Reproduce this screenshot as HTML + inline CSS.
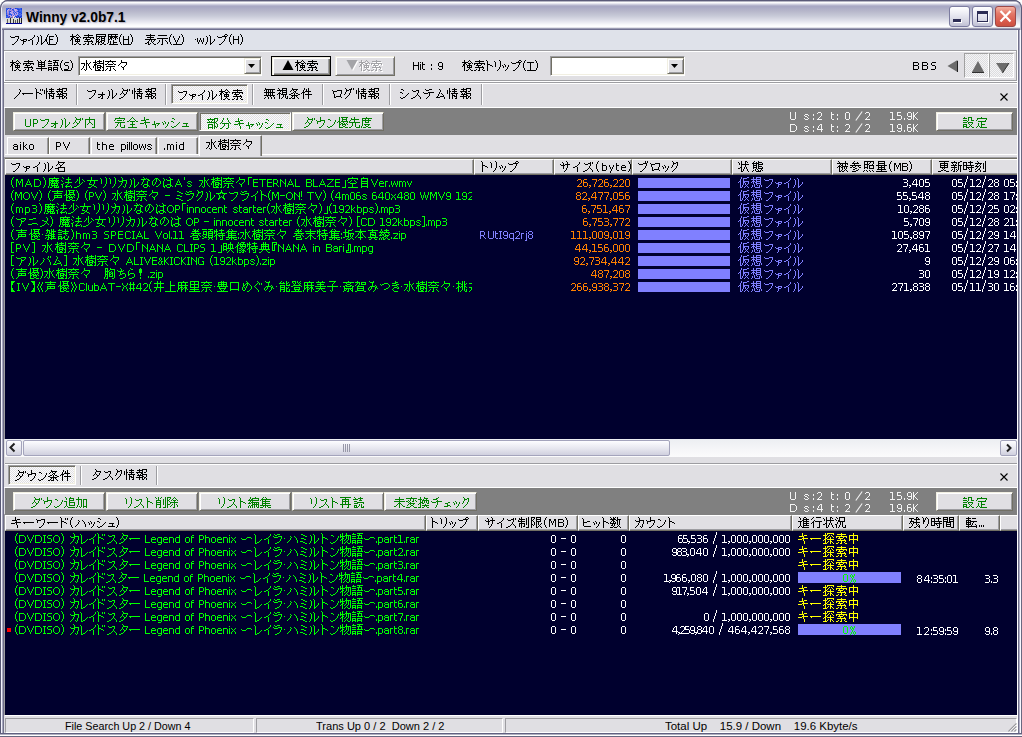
<!DOCTYPE html>
<html><head><meta charset="utf-8"><style>*{margin:0;padding:0;box-sizing:border-box}
html,body{width:1022px;height:737px;overflow:hidden;background:#fff}
body{position:relative;font-family:"Liberation Sans",sans-serif;font-size:12px;color:#000}
.a{position:absolute}
.t{position:absolute;white-space:nowrap;line-height:13px;transform-origin:0 0}
.j{font-size:13px}
u{text-decoration:underline;text-underline-offset:1px}

#t1{transform:scaleX(0.9848)}
#t2{transform:scaleX(0.9775)}
#t3{transform:scaleX(1.0040)}
#t4{transform:scaleX(1.0425)}
</style></head><body>
<svg width="0" height="0" style="position:absolute"><defs><path id="g30d5" d="M1 -8h1v1h-1zM6 -8h4v1h-4zM2 -7h4v1h-4zM9 -7h1v1h-1zM9 -6h1v1h-1zM8 -5h1v1h-1zM8 -4h1v1h-1zM7 -3h1v1h-1zM6 -2h1v1h-1zM5 -1h1v1h-1zM3 0h2v1h-2z"/><path id="g30a1" d="M1 -5h1v1h-1zM4 -5h4v1h-4zM2 -4h3v1h-3zM7 -4h1v1h-1zM4 -3h3v1h-3zM4 -2h1v1h-1zM4 -1h1v1h-1zM3 0h1v1h-1z"/><path id="g30a4" d="M8 -9h1v1h-1zM8 -8h1v1h-1zM7 -7h1v1h-1zM6 -6h1v1h-1zM4 -5h2v1h-2zM2 -4h2v1h-2zM6 -4h1v1h-1zM6 -3h1v1h-1zM6 -2h1v1h-1zM6 -1h1v1h-1zM6 0h1v1h-1z"/><path id="g30eb" d="M5 -9h1v1h-1zM2 -8h1v1h-1zM6 -8h1v1h-1zM3 -7h1v1h-1zM6 -7h1v1h-1zM3 -6h1v1h-1zM6 -6h1v1h-1zM3 -5h1v1h-1zM6 -5h1v1h-1zM10 -5h1v1h-1zM3 -4h1v1h-1zM6 -4h1v1h-1zM10 -4h1v1h-1zM3 -3h1v1h-1zM6 -3h1v1h-1zM9 -3h1v1h-1zM2 -2h1v1h-1zM6 -2h1v1h-1zM8 -2h1v1h-1zM2 -1h1v1h-1zM6 -1h2v1h-2zM1 0h1v1h-1zM6 0h1v1h-1z"/><path id="g28" d="M3 -10h1v1h-1zM2 -9h1v1h-1zM2 -8h1v1h-1zM1 -7h1v1h-1zM1 -6h1v1h-1zM1 -5h1v1h-1zM1 -4h1v1h-1zM1 -3h1v1h-1zM2 -2h1v1h-1zM2 -1h1v1h-1zM3 0h1v1h-1z"/><path id="g46" d="M0 -8h5v1h-5zM0 -7h1v1h-1zM0 -6h1v1h-1zM0 -5h4v1h-4zM0 -4h1v1h-1zM0 -3h1v1h-1zM0 -2h1v1h-1zM0 -1h1v1h-1z"/><path id="g29" d="M1 -10h1v1h-1zM2 -9h1v1h-1zM2 -8h1v1h-1zM3 -7h1v1h-1zM3 -6h1v1h-1zM3 -5h1v1h-1zM3 -4h1v1h-1zM3 -3h1v1h-1zM2 -2h1v1h-1zM2 -1h1v1h-1zM1 0h1v1h-1z"/><path id="g691c" d="M2 -10h1v1h-1zM7 -10h1v1h-1zM2 -9h1v1h-1zM6 -9h1v1h-1zM8 -9h1v1h-1zM0 -8h6v1h-6zM9 -8h1v1h-1zM2 -7h2v1h-2zM6 -7h3v1h-3zM10 -7h1v1h-1zM1 -6h2v1h-2zM4 -6h1v1h-1zM7 -6h1v1h-1zM1 -5h2v1h-2zM5 -5h5v1h-5zM0 -4h1v1h-1zM2 -4h1v1h-1zM5 -4h1v1h-1zM7 -4h1v1h-1zM9 -4h1v1h-1zM2 -3h1v1h-1zM5 -3h5v1h-5zM2 -2h1v1h-1zM7 -2h1v1h-1zM2 -1h1v1h-1zM6 -1h1v1h-1zM8 -1h1v1h-1zM2 0h1v1h-1zM4 0h2v1h-2zM9 0h2v1h-2z"/><path id="g7d22" d="M5 -10h1v1h-1zM1 -9h9v1h-9zM5 -8h1v1h-1zM0 -7h11v1h-11zM0 -6h1v1h-1zM3 -6h1v1h-1zM7 -6h1v1h-1zM10 -6h1v1h-1zM2 -5h5v1h-5zM4 -4h1v1h-1zM8 -4h1v1h-1zM1 -3h9v1h-9zM5 -2h1v1h-1zM9 -2h1v1h-1zM2 -1h1v1h-1zM5 -1h1v1h-1zM8 -1h1v1h-1zM0 0h2v1h-2zM4 0h2v1h-2zM9 0h2v1h-2z"/><path id="g5c65" d="M1 -10h10v1h-10zM1 -9h1v1h-1zM10 -9h1v1h-1zM1 -8h10v1h-10zM1 -7h1v1h-1zM4 -7h1v1h-1zM6 -7h1v1h-1zM9 -7h1v1h-1zM1 -6h1v1h-1zM3 -6h1v1h-1zM6 -6h4v1h-4zM1 -5h2v1h-2zM4 -5h1v1h-1zM6 -5h1v1h-1zM9 -5h1v1h-1zM1 -4h1v1h-1zM3 -4h1v1h-1zM6 -4h4v1h-4zM1 -3h3v1h-3zM5 -3h2v1h-2zM9 -3h1v1h-1zM1 -2h1v1h-1zM3 -2h2v1h-2zM6 -2h1v1h-1zM8 -2h1v1h-1zM0 -1h1v1h-1zM3 -1h1v1h-1zM7 -1h2v1h-2zM0 0h1v1h-1zM3 0h1v1h-1zM5 0h2v1h-2zM9 0h2v1h-2z"/><path id="g6b74" d="M1 -10h10v1h-10zM1 -9h1v1h-1zM4 -9h1v1h-1zM8 -9h1v1h-1zM1 -8h10v1h-10zM1 -7h1v1h-1zM3 -7h3v1h-3zM7 -7h3v1h-3zM1 -6h1v1h-1zM3 -6h2v1h-2zM6 -6h1v1h-1zM8 -6h1v1h-1zM10 -6h1v1h-1zM1 -5h2v1h-2zM4 -5h1v1h-1zM8 -5h1v1h-1zM1 -4h1v1h-1zM6 -4h1v1h-1zM1 -3h1v1h-1zM3 -3h1v1h-1zM6 -3h1v1h-1zM1 -2h1v1h-1zM3 -2h1v1h-1zM6 -2h4v1h-4zM0 -1h1v1h-1zM3 -1h1v1h-1zM6 -1h1v1h-1zM2 0h9v1h-9z"/><path id="g48" d="M0 -8h1v1h-1zM5 -8h1v1h-1zM0 -7h1v1h-1zM5 -7h1v1h-1zM0 -6h1v1h-1zM5 -6h1v1h-1zM0 -5h6v1h-6zM0 -4h1v1h-1zM5 -4h1v1h-1zM0 -3h1v1h-1zM5 -3h1v1h-1zM0 -2h1v1h-1zM5 -2h1v1h-1zM0 -1h1v1h-1zM5 -1h1v1h-1z"/><path id="g8868" d="M5 -10h1v1h-1zM1 -9h9v1h-9zM5 -8h1v1h-1zM2 -7h7v1h-7zM5 -6h1v1h-1zM0 -5h11v1h-11zM4 -4h1v1h-1zM6 -4h1v1h-1zM9 -4h1v1h-1zM3 -3h1v1h-1zM6 -3h1v1h-1zM8 -3h1v1h-1zM2 -2h2v1h-2zM7 -2h1v1h-1zM0 -1h2v1h-2zM3 -1h1v1h-1zM5 -1h1v1h-1zM8 -1h1v1h-1zM3 0h2v1h-2zM9 0h2v1h-2z"/><path id="g793a" d="M1 -9h9v1h-9zM0 -6h11v1h-11zM5 -5h1v1h-1zM2 -4h1v1h-1zM5 -4h1v1h-1zM8 -4h1v1h-1zM2 -3h1v1h-1zM5 -3h1v1h-1zM9 -3h1v1h-1zM1 -2h1v1h-1zM5 -2h1v1h-1zM10 -2h1v1h-1zM0 -1h1v1h-1zM5 -1h1v1h-1zM10 -1h1v1h-1zM4 0h2v1h-2z"/><path id="g56" d="M0 -8h1v1h-1zM6 -8h1v1h-1zM0 -7h1v1h-1zM6 -7h1v1h-1zM1 -6h1v1h-1zM5 -6h1v1h-1zM1 -5h1v1h-1zM5 -5h1v1h-1zM2 -4h1v1h-1zM4 -4h1v1h-1zM2 -3h1v1h-1zM4 -3h1v1h-1zM3 -2h1v1h-1zM3 -1h1v1h-1z"/><path id="g30fb" d="M0 -5h1v1h-1z"/><path id="g77" d="M0 -6h1v1h-1zM3 -6h1v1h-1zM6 -6h1v1h-1zM0 -5h1v1h-1zM3 -5h1v1h-1zM6 -5h1v1h-1zM0 -4h1v1h-1zM2 -4h1v1h-1zM4 -4h1v1h-1zM6 -4h1v1h-1zM0 -3h1v1h-1zM2 -3h1v1h-1zM4 -3h1v1h-1zM6 -3h1v1h-1zM1 -2h1v1h-1zM5 -2h1v1h-1zM1 -1h1v1h-1zM5 -1h1v1h-1z"/><path id="g30d7" d="M8 -10h2v1h-2zM7 -9h1v1h-1zM10 -9h1v1h-1zM0 -8h1v1h-1zM5 -8h5v1h-5zM1 -7h4v1h-4zM8 -7h1v1h-1zM8 -6h1v1h-1zM7 -5h1v1h-1zM7 -4h1v1h-1zM6 -3h1v1h-1zM5 -2h1v1h-1zM4 -1h1v1h-1zM2 0h2v1h-2z"/><path id="g5358" d="M1 -10h1v1h-1zM4 -10h1v1h-1zM9 -10h1v1h-1zM2 -9h1v1h-1zM5 -9h1v1h-1zM8 -9h1v1h-1zM2 -8h7v1h-7zM2 -7h1v1h-1zM5 -7h1v1h-1zM8 -7h1v1h-1zM2 -6h7v1h-7zM2 -5h1v1h-1zM5 -5h1v1h-1zM8 -5h1v1h-1zM2 -4h7v1h-7zM5 -3h1v1h-1zM0 -2h11v1h-11zM5 -1h1v1h-1zM5 0h1v1h-1z"/><path id="g8a9e" d="M1 -10h1v1h-1zM5 -10h6v1h-6zM0 -9h4v1h-4zM7 -9h1v1h-1zM5 -8h5v1h-5zM0 -7h4v1h-4zM6 -7h1v1h-1zM9 -7h1v1h-1zM6 -6h1v1h-1zM9 -6h1v1h-1zM0 -5h4v1h-4zM5 -5h6v1h-6zM0 -3h4v1h-4zM5 -3h5v1h-5zM0 -2h1v1h-1zM3 -2h1v1h-1zM5 -2h1v1h-1zM9 -2h1v1h-1zM0 -1h4v1h-4zM5 -1h5v1h-5zM0 0h1v1h-1zM3 0h1v1h-1zM5 0h1v1h-1zM9 0h1v1h-1z"/><path id="g53" d="M1 -8h4v1h-4zM0 -7h1v1h-1zM0 -6h1v1h-1zM1 -5h3v1h-3zM4 -4h1v1h-1zM4 -3h1v1h-1zM4 -2h1v1h-1zM0 -1h4v1h-4z"/><path id="g6c34" d="M5 -10h1v1h-1zM5 -9h1v1h-1zM5 -8h1v1h-1zM9 -8h1v1h-1zM0 -7h4v1h-4zM5 -7h2v1h-2zM8 -7h1v1h-1zM3 -6h1v1h-1zM5 -6h1v1h-1zM7 -6h1v1h-1zM3 -5h1v1h-1zM5 -5h1v1h-1zM7 -5h1v1h-1zM2 -4h1v1h-1zM5 -4h1v1h-1zM8 -4h1v1h-1zM2 -3h1v1h-1zM5 -3h1v1h-1zM8 -3h1v1h-1zM1 -2h1v1h-1zM5 -2h1v1h-1zM9 -2h1v1h-1zM0 -1h1v1h-1zM3 -1h1v1h-1zM5 -1h1v1h-1zM10 -1h1v1h-1zM4 0h1v1h-1z"/><path id="g6a39" d="M2 -10h1v1h-1zM6 -10h1v1h-1zM10 -10h1v1h-1zM2 -9h1v1h-1zM4 -9h5v1h-5zM10 -9h1v1h-1zM0 -8h4v1h-4zM6 -8h1v1h-1zM10 -8h1v1h-1zM2 -7h1v1h-1zM4 -7h7v1h-7zM1 -6h3v1h-3zM10 -6h1v1h-1zM1 -5h2v1h-2zM4 -5h4v1h-4zM10 -5h1v1h-1zM0 -4h1v1h-1zM2 -4h1v1h-1zM4 -4h1v1h-1zM7 -4h2v1h-2zM10 -4h1v1h-1zM0 -3h1v1h-1zM2 -3h1v1h-1zM4 -3h4v1h-4zM9 -3h2v1h-2zM2 -2h1v1h-1zM4 -2h1v1h-1zM7 -2h1v1h-1zM10 -2h1v1h-1zM2 -1h1v1h-1zM5 -1h2v1h-2zM10 -1h1v1h-1zM2 0h6v1h-6zM9 0h2v1h-2z"/><path id="g5948" d="M5 -10h1v1h-1zM0 -9h11v1h-11zM3 -8h1v1h-1zM7 -8h1v1h-1zM2 -7h1v1h-1zM8 -7h1v1h-1zM0 -6h2v1h-2zM3 -6h5v1h-5zM9 -6h2v1h-2zM1 -4h9v1h-9zM5 -3h1v1h-1zM2 -2h1v1h-1zM5 -2h1v1h-1zM8 -2h1v1h-1zM1 -1h1v1h-1zM5 -1h1v1h-1zM9 -1h1v1h-1zM0 0h1v1h-1zM4 0h2v1h-2zM10 0h1v1h-1z"/><path id="g3005" d="M4 -10h1v1h-1zM4 -9h1v1h-1zM4 -8h6v1h-6zM3 -7h1v1h-1zM9 -7h1v1h-1zM2 -6h1v1h-1zM9 -6h1v1h-1zM1 -5h1v1h-1zM8 -5h1v1h-1zM4 -4h1v1h-1zM7 -4h1v1h-1zM5 -3h2v1h-2zM6 -2h1v1h-1zM6 -1h1v1h-1z"/><path id="g69" d="M0 -8h1v1h-1zM0 -6h1v1h-1zM0 -5h1v1h-1zM0 -4h1v1h-1zM0 -3h1v1h-1zM0 -2h1v1h-1zM0 -1h1v1h-1z"/><path id="g74" d="M0 -8h1v1h-1zM0 -7h1v1h-1zM0 -6h3v1h-3zM0 -5h1v1h-1zM0 -4h1v1h-1zM0 -3h1v1h-1zM0 -2h1v1h-1zM1 -1h2v1h-2z"/><path id="g3a" d="M0 -6h1v1h-1zM0 -5h1v1h-1zM0 -2h1v1h-1zM0 -1h1v1h-1z"/><path id="g39" d="M1 -8h3v1h-3zM0 -7h1v1h-1zM4 -7h1v1h-1zM0 -6h1v1h-1zM4 -6h1v1h-1zM0 -5h1v1h-1zM4 -5h1v1h-1zM1 -4h4v1h-4zM4 -3h1v1h-1zM0 -2h1v1h-1zM4 -2h1v1h-1zM1 -1h3v1h-3z"/><path id="g30c8" d="M2 -10h1v1h-1zM3 -9h1v1h-1zM3 -8h1v1h-1zM3 -7h1v1h-1zM3 -6h3v1h-3zM3 -5h1v1h-1zM6 -5h2v1h-2zM3 -4h1v1h-1zM8 -4h1v1h-1zM3 -3h1v1h-1zM3 -2h1v1h-1zM3 -1h1v1h-1zM3 0h1v1h-1z"/><path id="g30ea" d="M7 -10h1v1h-1zM2 -9h1v1h-1zM8 -9h1v1h-1zM3 -8h1v1h-1zM8 -8h1v1h-1zM3 -7h1v1h-1zM8 -7h1v1h-1zM3 -6h1v1h-1zM8 -6h1v1h-1zM3 -5h1v1h-1zM8 -5h1v1h-1zM3 -4h1v1h-1zM8 -4h1v1h-1zM7 -3h1v1h-1zM7 -2h1v1h-1zM6 -1h1v1h-1zM5 0h1v1h-1z"/><path id="g30c3" d="M4 -6h1v1h-1zM2 -5h1v1h-1zM5 -5h1v1h-1zM8 -5h1v1h-1zM3 -4h1v1h-1zM5 -4h1v1h-1zM8 -4h1v1h-1zM3 -3h1v1h-1zM7 -3h1v1h-1zM7 -2h1v1h-1zM6 -1h1v1h-1zM5 0h1v1h-1z"/><path id="g54" d="M0 -8h7v1h-7zM3 -7h1v1h-1zM3 -6h1v1h-1zM3 -5h1v1h-1zM3 -4h1v1h-1zM3 -3h1v1h-1zM3 -2h1v1h-1zM3 -1h1v1h-1z"/><path id="g42" d="M0 -8h5v1h-5zM0 -7h1v1h-1zM5 -7h1v1h-1zM0 -6h1v1h-1zM5 -6h1v1h-1zM0 -5h5v1h-5zM0 -4h1v1h-1zM5 -4h1v1h-1zM0 -3h1v1h-1zM5 -3h1v1h-1zM0 -2h1v1h-1zM5 -2h1v1h-1zM0 -1h5v1h-5z"/><path id="g30ce" d="M8 -9h1v1h-1zM9 -8h1v1h-1zM9 -7h1v1h-1zM8 -6h1v1h-1zM8 -5h1v1h-1zM7 -4h1v1h-1zM6 -3h1v1h-1zM5 -2h1v1h-1zM4 -1h1v1h-1zM3 0h1v1h-1z"/><path id="g30fc" d="M0 -5h11v1h-11zM1 -4h1v1h-1z"/><path id="g30c9" d="M2 -10h1v1h-1zM3 -9h1v1h-1zM7 -9h1v1h-1zM9 -9h1v1h-1zM3 -8h1v1h-1zM7 -8h1v1h-1zM9 -8h1v1h-1zM3 -7h1v1h-1zM3 -6h3v1h-3zM3 -5h1v1h-1zM6 -5h2v1h-2zM3 -4h1v1h-1zM8 -4h1v1h-1zM3 -3h1v1h-1zM3 -2h1v1h-1zM3 -1h1v1h-1zM3 0h1v1h-1z"/><path id="g60c5" d="M2 -10h1v1h-1zM7 -10h1v1h-1zM2 -9h1v1h-1zM5 -9h5v1h-5zM0 -8h1v1h-1zM2 -8h1v1h-1zM7 -8h1v1h-1zM0 -7h1v1h-1zM2 -7h2v1h-2zM5 -7h5v1h-5zM0 -6h1v1h-1zM2 -6h1v1h-1zM7 -6h1v1h-1zM0 -5h1v1h-1zM2 -5h1v1h-1zM4 -5h7v1h-7zM2 -4h1v1h-1zM5 -4h1v1h-1zM9 -4h1v1h-1zM2 -3h1v1h-1zM5 -3h3v1h-3zM9 -3h1v1h-1zM2 -2h1v1h-1zM5 -2h1v1h-1zM7 -2h3v1h-3zM2 -1h1v1h-1zM5 -1h1v1h-1zM9 -1h1v1h-1zM2 0h1v1h-1zM5 0h1v1h-1zM8 0h2v1h-2z"/><path id="g5831" d="M3 -10h1v1h-1zM6 -10h5v1h-5zM1 -9h6v1h-6zM10 -9h1v1h-1zM3 -8h1v1h-1zM6 -8h1v1h-1zM10 -8h1v1h-1zM0 -7h7v1h-7zM8 -7h2v1h-2zM1 -6h1v1h-1zM5 -6h2v1h-2zM2 -5h1v1h-1zM4 -5h1v1h-1zM6 -5h5v1h-5zM1 -4h6v1h-6zM10 -4h1v1h-1zM3 -3h1v1h-1zM6 -3h2v1h-2zM10 -3h1v1h-1zM0 -2h7v1h-7zM8 -2h2v1h-2zM3 -1h1v1h-1zM6 -1h1v1h-1zM8 -1h1v1h-1zM10 -1h1v1h-1zM3 0h1v1h-1zM6 0h2v1h-2zM10 0h1v1h-1z"/><path id="g30a9" d="M6 -6h1v1h-1zM6 -5h1v1h-1zM2 -4h7v1h-7zM5 -3h2v1h-2zM4 -2h1v1h-1zM6 -2h1v1h-1zM2 -1h2v1h-2zM6 -1h1v1h-1zM5 0h2v1h-2z"/><path id="g30c0" d="M4 -10h1v1h-1zM5 -9h1v1h-1zM9 -9h1v1h-1zM11 -9h1v1h-1zM5 -8h5v1h-5zM11 -8h1v1h-1zM4 -7h1v1h-1zM9 -7h1v1h-1zM4 -6h1v1h-1zM8 -6h1v1h-1zM3 -5h1v1h-1zM5 -5h1v1h-1zM8 -5h1v1h-1zM2 -4h1v1h-1zM6 -4h2v1h-2zM6 -3h1v1h-1zM5 -2h1v1h-1zM3 -1h2v1h-2zM1 0h2v1h-2z"/><path id="g7121" d="M1 -10h1v1h-1zM1 -9h10v1h-10zM0 -8h1v1h-1zM2 -8h1v1h-1zM4 -8h1v1h-1zM6 -8h1v1h-1zM8 -8h1v1h-1zM2 -7h1v1h-1zM4 -7h1v1h-1zM6 -7h1v1h-1zM8 -7h1v1h-1zM0 -6h11v1h-11zM2 -5h1v1h-1zM4 -5h1v1h-1zM6 -5h1v1h-1zM8 -5h1v1h-1zM2 -4h1v1h-1zM4 -4h1v1h-1zM6 -4h1v1h-1zM8 -4h1v1h-1zM0 -3h11v1h-11zM3 -2h1v1h-1zM6 -2h1v1h-1zM9 -2h1v1h-1zM1 -1h1v1h-1zM4 -1h1v1h-1zM7 -1h1v1h-1zM10 -1h1v1h-1zM0 0h1v1h-1zM4 0h1v1h-1zM7 0h1v1h-1zM10 0h1v1h-1z"/><path id="g8996" d="M1 -10h1v1h-1zM5 -10h5v1h-5zM2 -9h1v1h-1zM5 -9h1v1h-1zM9 -9h1v1h-1zM0 -8h10v1h-10zM3 -7h1v1h-1zM5 -7h1v1h-1zM9 -7h1v1h-1zM2 -6h1v1h-1zM5 -6h5v1h-5zM1 -5h3v1h-3zM5 -5h1v1h-1zM9 -5h1v1h-1zM0 -4h1v1h-1zM2 -4h1v1h-1zM4 -4h6v1h-6zM2 -3h1v1h-1zM6 -3h1v1h-1zM8 -3h1v1h-1zM2 -2h1v1h-1zM6 -2h1v1h-1zM8 -2h1v1h-1zM10 -2h1v1h-1zM2 -1h1v1h-1zM5 -1h1v1h-1zM8 -1h1v1h-1zM10 -1h1v1h-1zM2 0h1v1h-1zM4 0h1v1h-1zM9 0h2v1h-2z"/><path id="g6761" d="M3 -10h1v1h-1zM3 -9h6v1h-6zM2 -8h1v1h-1zM4 -8h1v1h-1zM7 -8h1v1h-1zM1 -7h1v1h-1zM5 -7h2v1h-2zM4 -6h1v1h-1zM6 -6h1v1h-1zM2 -5h2v1h-2zM5 -5h1v1h-1zM7 -5h2v1h-2zM0 -4h2v1h-2zM5 -4h1v1h-1zM9 -4h2v1h-2zM2 -3h7v1h-7zM3 -2h1v1h-1zM5 -2h1v1h-1zM7 -2h1v1h-1zM2 -1h1v1h-1zM5 -1h1v1h-1zM8 -1h1v1h-1zM0 0h2v1h-2zM3 0h3v1h-3zM9 0h1v1h-1z"/><path id="g4ef6" d="M3 -10h1v1h-1zM7 -10h1v1h-1zM3 -9h1v1h-1zM5 -9h1v1h-1zM7 -9h1v1h-1zM2 -8h1v1h-1zM5 -8h1v1h-1zM7 -8h1v1h-1zM2 -7h1v1h-1zM4 -7h6v1h-6zM1 -6h3v1h-3zM7 -6h1v1h-1zM0 -5h1v1h-1zM2 -5h1v1h-1zM7 -5h1v1h-1zM2 -4h1v1h-1zM4 -4h7v1h-7zM2 -3h1v1h-1zM7 -3h1v1h-1zM2 -2h1v1h-1zM7 -2h1v1h-1zM2 -1h1v1h-1zM7 -1h1v1h-1zM2 0h1v1h-1zM7 0h1v1h-1z"/><path id="g30ed" d="M0 -8h1v1h-1zM5 -8h5v1h-5zM1 -7h4v1h-4zM9 -7h1v1h-1zM1 -6h1v1h-1zM9 -6h1v1h-1zM1 -5h1v1h-1zM9 -5h1v1h-1zM2 -4h1v1h-1zM8 -4h1v1h-1zM2 -3h1v1h-1zM8 -3h1v1h-1zM2 -2h1v1h-1zM4 -2h5v1h-5zM2 -1h2v1h-2zM9 -1h1v1h-1z"/><path id="g30b0" d="M2 -10h1v1h-1zM8 -10h1v1h-1zM10 -10h1v1h-1zM3 -9h1v1h-1zM6 -9h3v1h-3zM10 -9h1v1h-1zM3 -8h3v1h-3zM7 -8h1v1h-1zM3 -7h1v1h-1zM7 -7h1v1h-1zM2 -6h1v1h-1zM7 -6h1v1h-1zM2 -5h1v1h-1zM6 -5h1v1h-1zM1 -4h1v1h-1zM6 -4h1v1h-1zM5 -3h1v1h-1zM4 -2h1v1h-1zM3 -1h1v1h-1zM2 0h1v1h-1z"/><path id="g30b7" d="M3 -9h2v1h-2zM5 -8h1v1h-1zM2 -6h2v1h-2zM4 -5h1v1h-1zM10 -5h1v1h-1zM9 -4h1v1h-1zM8 -3h1v1h-1zM7 -2h1v1h-1zM2 -1h1v1h-1zM5 -1h2v1h-2zM3 0h2v1h-2z"/><path id="g30b9" d="M2 -8h1v1h-1zM6 -8h3v1h-3zM3 -7h3v1h-3zM8 -7h1v1h-1zM8 -6h1v1h-1zM7 -5h1v1h-1zM7 -4h1v1h-1zM6 -3h1v1h-1zM8 -3h1v1h-1zM5 -2h1v1h-1zM9 -2h1v1h-1zM3 -1h2v1h-2zM10 -1h1v1h-1zM1 0h2v1h-2zM10 0h1v1h-1z"/><path id="g30c6" d="M2 -9h1v1h-1zM6 -9h3v1h-3zM3 -8h3v1h-3zM0 -6h1v1h-1zM5 -6h6v1h-6zM1 -5h4v1h-4zM6 -5h1v1h-1zM6 -4h1v1h-1zM6 -3h1v1h-1zM5 -2h1v1h-1zM4 -1h1v1h-1zM3 0h1v1h-1z"/><path id="g30e0" d="M4 -9h1v1h-1zM5 -8h1v1h-1zM5 -7h1v1h-1zM4 -6h1v1h-1zM4 -5h1v1h-1zM6 -5h1v1h-1zM3 -4h1v1h-1zM7 -4h1v1h-1zM3 -3h1v1h-1zM8 -3h1v1h-1zM2 -2h1v1h-1zM5 -2h4v1h-4zM1 -1h4v1h-4zM9 -1h1v1h-1zM9 0h1v1h-1z"/><path id="g55" d="M0 -8h1v1h-1zM5 -8h1v1h-1zM0 -7h1v1h-1zM5 -7h1v1h-1zM0 -6h1v1h-1zM5 -6h1v1h-1zM0 -5h1v1h-1zM5 -5h1v1h-1zM0 -4h1v1h-1zM5 -4h1v1h-1zM0 -3h1v1h-1zM5 -3h1v1h-1zM0 -2h1v1h-1zM5 -2h1v1h-1zM1 -1h4v1h-4z"/><path id="g50" d="M0 -8h4v1h-4zM0 -7h1v1h-1zM4 -7h1v1h-1zM0 -6h1v1h-1zM4 -6h1v1h-1zM0 -5h1v1h-1zM4 -5h1v1h-1zM0 -4h4v1h-4zM0 -3h1v1h-1zM0 -2h1v1h-1zM0 -1h1v1h-1z"/><path id="g5185" d="M5 -10h1v1h-1zM5 -9h1v1h-1zM1 -8h10v1h-10zM1 -7h1v1h-1zM5 -7h1v1h-1zM10 -7h1v1h-1zM1 -6h1v1h-1zM5 -6h1v1h-1zM10 -6h1v1h-1zM1 -5h1v1h-1zM5 -5h2v1h-2zM10 -5h1v1h-1zM1 -4h1v1h-1zM4 -4h1v1h-1zM7 -4h1v1h-1zM10 -4h1v1h-1zM1 -3h1v1h-1zM3 -3h1v1h-1zM8 -3h1v1h-1zM10 -3h1v1h-1zM1 -2h1v1h-1zM10 -2h1v1h-1zM1 -1h1v1h-1zM10 -1h1v1h-1zM1 0h1v1h-1zM8 0h3v1h-3z"/><path id="g5b8c" d="M5 -10h1v1h-1zM1 -9h10v1h-10zM1 -8h1v1h-1zM10 -8h1v1h-1zM0 -7h1v1h-1zM3 -7h5v1h-5zM9 -7h1v1h-1zM1 -5h10v1h-10zM4 -4h1v1h-1zM6 -4h1v1h-1zM3 -3h1v1h-1zM6 -3h1v1h-1zM3 -2h1v1h-1zM6 -2h1v1h-1zM10 -2h1v1h-1zM2 -1h1v1h-1zM6 -1h1v1h-1zM10 -1h1v1h-1zM1 0h1v1h-1zM7 0h4v1h-4z"/><path id="g5168" d="M5 -10h1v1h-1zM4 -9h1v1h-1zM6 -9h1v1h-1zM3 -8h1v1h-1zM7 -8h1v1h-1zM2 -7h1v1h-1zM8 -7h1v1h-1zM0 -6h2v1h-2zM3 -6h5v1h-5zM9 -6h2v1h-2zM5 -5h1v1h-1zM5 -4h1v1h-1zM3 -3h5v1h-5zM5 -2h1v1h-1zM5 -1h1v1h-1zM1 0h9v1h-9z"/><path id="g30ad" d="M4 -10h1v1h-1zM4 -9h1v1h-1zM4 -8h1v1h-1zM6 -8h3v1h-3zM1 -7h5v1h-5zM5 -6h1v1h-1zM4 -5h6v1h-6zM0 -4h4v1h-4zM5 -4h1v1h-1zM5 -3h1v1h-1zM6 -2h1v1h-1zM6 -1h1v1h-1zM6 0h1v1h-1z"/><path id="g30e3" d="M4 -6h1v1h-1zM4 -5h1v1h-1zM4 -4h1v1h-1zM6 -4h4v1h-4zM2 -3h4v1h-4zM8 -3h1v1h-1zM5 -2h1v1h-1zM7 -2h1v1h-1zM5 -1h1v1h-1zM5 0h1v1h-1z"/><path id="g30e5" d="M3 -4h5v1h-5zM6 -3h1v1h-1zM6 -2h1v1h-1zM2 -1h7v1h-7z"/><path id="g90e8" d="M3 -10h1v1h-1zM7 -10h4v1h-4zM0 -9h8v1h-8zM10 -9h1v1h-1zM1 -8h1v1h-1zM5 -8h1v1h-1zM7 -8h1v1h-1zM10 -8h1v1h-1zM2 -7h1v1h-1zM4 -7h1v1h-1zM7 -7h1v1h-1zM9 -7h1v1h-1zM0 -6h9v1h-9zM7 -5h1v1h-1zM9 -5h1v1h-1zM1 -4h5v1h-5zM7 -4h1v1h-1zM10 -4h1v1h-1zM1 -3h1v1h-1zM5 -3h1v1h-1zM7 -3h1v1h-1zM10 -3h1v1h-1zM1 -2h1v1h-1zM5 -2h1v1h-1zM7 -2h2v1h-2zM10 -2h1v1h-1zM1 -1h5v1h-5zM7 -1h1v1h-1zM9 -1h1v1h-1zM1 0h1v1h-1zM5 0h1v1h-1zM7 0h1v1h-1z"/><path id="g5206" d="M3 -10h1v1h-1zM7 -10h1v1h-1zM3 -9h1v1h-1zM7 -9h1v1h-1zM2 -8h1v1h-1zM8 -8h1v1h-1zM2 -7h1v1h-1zM8 -7h1v1h-1zM1 -6h1v1h-1zM9 -6h1v1h-1zM0 -5h1v1h-1zM2 -5h7v1h-7zM10 -5h1v1h-1zM4 -4h1v1h-1zM8 -4h1v1h-1zM4 -3h1v1h-1zM8 -3h1v1h-1zM3 -2h1v1h-1zM8 -2h1v1h-1zM2 -1h1v1h-1zM8 -1h1v1h-1zM0 0h2v1h-2zM6 0h2v1h-2z"/><path id="g30a6" d="M5 -10h1v1h-1zM5 -9h1v1h-1zM5 -8h1v1h-1zM1 -7h1v1h-1zM5 -7h5v1h-5zM2 -6h4v1h-4zM9 -6h1v1h-1zM2 -5h1v1h-1zM9 -5h1v1h-1zM2 -4h1v1h-1zM8 -4h1v1h-1zM8 -3h1v1h-1zM7 -2h1v1h-1zM6 -1h1v1h-1zM4 0h2v1h-2z"/><path id="g30f3" d="M2 -8h2v1h-2zM4 -7h1v1h-1zM9 -7h1v1h-1zM9 -6h1v1h-1zM8 -5h1v1h-1zM8 -4h1v1h-1zM7 -3h1v1h-1zM6 -2h1v1h-1zM1 -1h1v1h-1zM4 -1h2v1h-2zM2 0h2v1h-2z"/><path id="g512a" d="M2 -10h1v1h-1zM4 -10h7v1h-7zM2 -9h1v1h-1zM5 -9h1v1h-1zM9 -9h1v1h-1zM2 -8h1v1h-1zM5 -8h5v1h-5zM2 -7h1v1h-1zM5 -7h1v1h-1zM9 -7h1v1h-1zM1 -6h2v1h-2zM4 -6h7v1h-7zM0 -5h1v1h-1zM2 -5h2v1h-2zM6 -5h1v1h-1zM10 -5h1v1h-1zM2 -4h1v1h-1zM4 -4h2v1h-2zM7 -4h1v1h-1zM9 -4h1v1h-1zM2 -3h2v1h-2zM5 -3h4v1h-4zM10 -3h1v1h-1zM2 -2h1v1h-1zM5 -2h1v1h-1zM8 -2h1v1h-1zM2 -1h1v1h-1zM6 -1h2v1h-2zM2 0h4v1h-4zM8 0h3v1h-3z"/><path id="g5148" d="M5 -10h1v1h-1zM2 -9h1v1h-1zM5 -9h1v1h-1zM2 -8h8v1h-8zM1 -7h1v1h-1zM5 -7h1v1h-1zM0 -6h1v1h-1zM5 -6h1v1h-1zM0 -5h11v1h-11zM3 -4h1v1h-1zM6 -4h1v1h-1zM3 -3h1v1h-1zM6 -3h1v1h-1zM3 -2h1v1h-1zM6 -2h1v1h-1zM10 -2h1v1h-1zM2 -1h1v1h-1zM6 -1h1v1h-1zM10 -1h1v1h-1zM0 0h2v1h-2zM7 0h4v1h-4z"/><path id="g5ea6" d="M5 -10h1v1h-1zM1 -9h10v1h-10zM1 -8h1v1h-1zM4 -8h1v1h-1zM7 -8h1v1h-1zM1 -7h9v1h-9zM1 -6h1v1h-1zM4 -6h1v1h-1zM7 -6h1v1h-1zM1 -5h1v1h-1zM4 -5h4v1h-4zM1 -4h1v1h-1zM1 -3h1v1h-1zM3 -3h6v1h-6zM1 -2h1v1h-1zM4 -2h1v1h-1zM7 -2h1v1h-1zM0 -1h1v1h-1zM5 -1h2v1h-2zM0 0h1v1h-1zM2 0h3v1h-3zM7 0h3v1h-3z"/><path id="g73" d="M1 -6h3v1h-3zM0 -5h1v1h-1zM4 -5h1v1h-1zM1 -4h2v1h-2zM3 -3h1v1h-1zM0 -2h1v1h-1zM4 -2h1v1h-1zM1 -1h3v1h-3z"/><path id="g32" d="M1 -8h3v1h-3zM0 -7h1v1h-1zM4 -7h1v1h-1zM4 -6h1v1h-1zM4 -5h1v1h-1zM3 -4h1v1h-1zM2 -3h1v1h-1zM1 -2h1v1h-1zM0 -1h5v1h-5z"/><path id="g30" d="M1 -8h3v1h-3zM0 -7h1v1h-1zM4 -7h1v1h-1zM0 -6h1v1h-1zM4 -6h1v1h-1zM0 -5h1v1h-1zM4 -5h1v1h-1zM0 -4h1v1h-1zM4 -4h1v1h-1zM0 -3h1v1h-1zM4 -3h1v1h-1zM0 -2h1v1h-1zM4 -2h1v1h-1zM1 -1h3v1h-3z"/><path id="g31" d="M0 -8h3v1h-3zM2 -7h1v1h-1zM2 -6h1v1h-1zM2 -5h1v1h-1zM2 -4h1v1h-1zM2 -3h1v1h-1zM2 -2h1v1h-1zM0 -1h5v1h-5z"/><path id="g35" d="M0 -8h4v1h-4zM0 -7h1v1h-1zM0 -6h1v1h-1zM0 -5h4v1h-4zM4 -4h1v1h-1zM4 -3h1v1h-1zM4 -2h1v1h-1zM0 -1h4v1h-4z"/><path id="g2e" d="M2 -2h1v1h-1zM2 -1h1v1h-1z"/><path id="g4b" d="M0 -8h1v1h-1zM4 -8h1v1h-1zM0 -7h1v1h-1zM3 -7h1v1h-1zM0 -6h1v1h-1zM2 -6h1v1h-1zM0 -5h2v1h-2zM0 -4h2v1h-2zM0 -3h1v1h-1zM2 -3h1v1h-1zM0 -2h1v1h-1zM3 -2h1v1h-1zM0 -1h1v1h-1zM4 -1h1v1h-1z"/><path id="g44" d="M0 -8h5v1h-5zM0 -7h1v1h-1zM5 -7h1v1h-1zM0 -6h1v1h-1zM6 -6h1v1h-1zM0 -5h1v1h-1zM6 -5h1v1h-1zM0 -4h1v1h-1zM6 -4h1v1h-1zM0 -3h1v1h-1zM6 -3h1v1h-1zM0 -2h1v1h-1zM5 -2h1v1h-1zM0 -1h5v1h-5z"/><path id="g34" d="M3 -8h2v1h-2zM2 -7h1v1h-1zM4 -7h1v1h-1zM1 -6h1v1h-1zM4 -6h1v1h-1zM1 -5h1v1h-1zM4 -5h1v1h-1zM0 -4h1v1h-1zM4 -4h1v1h-1zM0 -3h6v1h-6zM4 -2h1v1h-1zM4 -1h1v1h-1z"/><path id="g36" d="M1 -8h3v1h-3zM0 -7h1v1h-1zM0 -6h1v1h-1zM0 -5h4v1h-4zM0 -4h1v1h-1zM4 -4h1v1h-1zM0 -3h1v1h-1zM4 -3h1v1h-1zM0 -2h1v1h-1zM4 -2h1v1h-1zM1 -1h3v1h-3z"/><path id="g8a2d" d="M1 -10h1v1h-1zM5 -10h4v1h-4zM0 -9h4v1h-4zM5 -9h1v1h-1zM8 -9h1v1h-1zM5 -8h1v1h-1zM8 -8h1v1h-1zM0 -7h4v1h-4zM5 -7h1v1h-1zM8 -7h3v1h-3zM4 -6h1v1h-1zM0 -5h4v1h-4zM5 -5h5v1h-5zM5 -4h1v1h-1zM9 -4h1v1h-1zM0 -3h4v1h-4zM6 -3h1v1h-1zM8 -3h1v1h-1zM0 -2h1v1h-1zM3 -2h1v1h-1zM7 -2h1v1h-1zM0 -1h4v1h-4zM6 -1h1v1h-1zM8 -1h1v1h-1zM0 0h1v1h-1zM3 0h3v1h-3zM9 0h2v1h-2z"/><path id="g5b9a" d="M5 -10h1v1h-1zM1 -9h10v1h-10zM1 -8h1v1h-1zM10 -8h1v1h-1zM0 -7h1v1h-1zM9 -7h1v1h-1zM2 -6h8v1h-8zM5 -5h1v1h-1zM2 -4h1v1h-1zM5 -4h1v1h-1zM2 -3h1v1h-1zM5 -3h4v1h-4zM2 -2h1v1h-1zM5 -2h1v1h-1zM1 -1h1v1h-1zM3 -1h1v1h-1zM5 -1h1v1h-1zM0 0h1v1h-1zM4 0h7v1h-7z"/><path id="g61" d="M1 -6h3v1h-3zM0 -5h1v1h-1zM4 -5h1v1h-1zM1 -4h4v1h-4zM0 -3h1v1h-1zM4 -3h1v1h-1zM0 -2h1v1h-1zM4 -2h1v1h-1zM1 -1h4v1h-4z"/><path id="g6b" d="M0 -8h1v1h-1zM0 -7h1v1h-1zM0 -6h1v1h-1zM3 -6h1v1h-1zM0 -5h1v1h-1zM2 -5h1v1h-1zM0 -4h2v1h-2zM0 -3h1v1h-1zM2 -3h1v1h-1zM0 -2h1v1h-1zM3 -2h1v1h-1zM0 -1h1v1h-1zM4 -1h1v1h-1z"/><path id="g6f" d="M1 -6h3v1h-3zM0 -5h1v1h-1zM4 -5h1v1h-1zM0 -4h1v1h-1zM4 -4h1v1h-1zM0 -3h1v1h-1zM4 -3h1v1h-1zM0 -2h1v1h-1zM4 -2h1v1h-1zM1 -1h3v1h-3z"/><path id="g68" d="M0 -8h1v1h-1zM0 -7h1v1h-1zM0 -6h4v1h-4zM0 -5h1v1h-1zM4 -5h1v1h-1zM0 -4h1v1h-1zM4 -4h1v1h-1zM0 -3h1v1h-1zM4 -3h1v1h-1zM0 -2h1v1h-1zM4 -2h1v1h-1zM0 -1h1v1h-1zM4 -1h1v1h-1z"/><path id="g65" d="M1 -6h3v1h-3zM0 -5h1v1h-1zM4 -5h1v1h-1zM0 -4h5v1h-5zM0 -3h1v1h-1zM0 -2h1v1h-1zM1 -1h4v1h-4z"/><path id="g70" d="M0 -6h4v1h-4zM0 -5h1v1h-1zM4 -5h1v1h-1zM0 -4h1v1h-1zM4 -4h1v1h-1zM0 -3h1v1h-1zM4 -3h1v1h-1zM0 -2h1v1h-1zM4 -2h1v1h-1zM0 -1h4v1h-4zM0 0h1v1h-1zM0 1h1v1h-1z"/><path id="g6c" d="M0 -8h1v1h-1zM0 -7h1v1h-1zM0 -6h1v1h-1zM0 -5h1v1h-1zM0 -4h1v1h-1zM0 -3h1v1h-1zM0 -2h1v1h-1zM0 -1h1v1h-1z"/><path id="g6d" d="M0 -6h3v1h-3zM4 -6h2v1h-2zM0 -5h1v1h-1zM3 -5h1v1h-1zM6 -5h1v1h-1zM0 -4h1v1h-1zM3 -4h1v1h-1zM6 -4h1v1h-1zM0 -3h1v1h-1zM3 -3h1v1h-1zM6 -3h1v1h-1zM0 -2h1v1h-1zM3 -2h1v1h-1zM6 -2h1v1h-1zM0 -1h1v1h-1zM3 -1h1v1h-1zM6 -1h1v1h-1z"/><path id="g64" d="M4 -8h1v1h-1zM4 -7h1v1h-1zM1 -6h4v1h-4zM0 -5h1v1h-1zM4 -5h1v1h-1zM0 -4h1v1h-1zM4 -4h1v1h-1zM0 -3h1v1h-1zM4 -3h1v1h-1zM0 -2h1v1h-1zM4 -2h1v1h-1zM1 -1h4v1h-4z"/><path id="g540d" d="M3 -10h1v1h-1zM3 -9h7v1h-7zM3 -8h1v1h-1zM8 -8h1v1h-1zM2 -7h1v1h-1zM4 -7h1v1h-1zM7 -7h1v1h-1zM1 -6h1v1h-1zM5 -6h2v1h-2zM5 -5h1v1h-1zM3 -4h7v1h-7zM0 -3h4v1h-4zM9 -3h1v1h-1zM3 -2h1v1h-1zM9 -2h1v1h-1zM3 -1h1v1h-1zM9 -1h1v1h-1zM3 0h7v1h-7z"/><path id="g30b5" d="M7 -10h1v1h-1zM3 -9h1v1h-1zM8 -9h1v1h-1zM4 -8h1v1h-1zM8 -8h1v1h-1zM1 -7h1v1h-1zM4 -7h1v1h-1zM6 -7h5v1h-5zM2 -6h4v1h-4zM8 -6h1v1h-1zM4 -5h1v1h-1zM8 -5h1v1h-1zM4 -4h1v1h-1zM8 -4h1v1h-1zM4 -3h1v1h-1zM7 -3h1v1h-1zM7 -2h1v1h-1zM6 -1h1v1h-1zM5 0h1v1h-1z"/><path id="g30ba" d="M8 -9h1v1h-1zM10 -9h1v1h-1zM2 -8h1v1h-1zM6 -8h3v1h-3zM10 -8h1v1h-1zM3 -7h3v1h-3zM8 -7h1v1h-1zM8 -6h1v1h-1zM7 -5h1v1h-1zM7 -4h1v1h-1zM6 -3h1v1h-1zM8 -3h1v1h-1zM5 -2h1v1h-1zM9 -2h1v1h-1zM3 -1h2v1h-2zM10 -1h1v1h-1zM1 0h2v1h-2zM10 0h1v1h-1z"/><path id="g62" d="M0 -8h1v1h-1zM0 -7h1v1h-1zM0 -6h4v1h-4zM0 -5h1v1h-1zM4 -5h1v1h-1zM0 -4h1v1h-1zM4 -4h1v1h-1zM0 -3h1v1h-1zM4 -3h1v1h-1zM0 -2h1v1h-1zM4 -2h1v1h-1zM0 -1h4v1h-4z"/><path id="g79" d="M0 -6h1v1h-1zM4 -6h1v1h-1zM0 -5h1v1h-1zM4 -5h1v1h-1zM1 -4h1v1h-1zM3 -4h1v1h-1zM1 -3h1v1h-1zM3 -3h1v1h-1zM2 -2h1v1h-1zM2 -1h1v1h-1zM1 0h1v1h-1zM1 1h1v1h-1z"/><path id="g30d6" d="M7 -10h1v1h-1zM9 -10h1v1h-1zM7 -9h1v1h-1zM9 -9h1v1h-1zM0 -8h1v1h-1zM5 -8h4v1h-4zM1 -7h4v1h-4zM8 -7h1v1h-1zM8 -6h1v1h-1zM7 -5h1v1h-1zM7 -4h1v1h-1zM6 -3h1v1h-1zM5 -2h1v1h-1zM4 -1h1v1h-1zM2 0h2v1h-2z"/><path id="g30af" d="M3 -10h1v1h-1zM4 -9h1v1h-1zM7 -9h2v1h-2zM4 -8h3v1h-3zM8 -8h1v1h-1zM4 -7h1v1h-1zM8 -7h1v1h-1zM3 -6h1v1h-1zM8 -6h1v1h-1zM3 -5h1v1h-1zM7 -5h1v1h-1zM2 -4h1v1h-1zM7 -4h1v1h-1zM6 -3h1v1h-1zM5 -2h1v1h-1zM4 -1h1v1h-1zM3 0h1v1h-1z"/><path id="g72b6" d="M3 -10h1v1h-1zM7 -10h2v1h-2zM0 -9h1v1h-1zM3 -9h1v1h-1zM7 -9h1v1h-1zM9 -9h1v1h-1zM1 -8h1v1h-1zM3 -8h1v1h-1zM7 -8h1v1h-1zM1 -7h1v1h-1zM3 -7h8v1h-8zM3 -6h1v1h-1zM7 -6h1v1h-1zM3 -5h1v1h-1zM7 -5h1v1h-1zM2 -4h2v1h-2zM6 -4h1v1h-1zM8 -4h1v1h-1zM0 -3h2v1h-2zM3 -3h1v1h-1zM6 -3h1v1h-1zM8 -3h1v1h-1zM3 -2h1v1h-1zM5 -2h1v1h-1zM9 -2h1v1h-1zM3 -1h1v1h-1zM5 -1h1v1h-1zM9 -1h1v1h-1zM3 0h2v1h-2zM10 0h1v1h-1z"/><path id="g614b" d="M2 -10h1v1h-1zM6 -10h1v1h-1zM1 -9h1v1h-1zM4 -9h1v1h-1zM6 -9h4v1h-4zM0 -8h7v1h-7zM10 -8h1v1h-1zM1 -7h1v1h-1zM4 -7h1v1h-1zM6 -7h5v1h-5zM1 -6h4v1h-4zM6 -6h1v1h-1zM1 -5h1v1h-1zM4 -5h1v1h-1zM6 -5h4v1h-4zM1 -4h4v1h-4zM6 -4h1v1h-1zM10 -4h1v1h-1zM1 -3h1v1h-1zM4 -3h1v1h-1zM6 -3h5v1h-5zM3 -2h1v1h-1zM5 -2h1v1h-1zM9 -2h1v1h-1zM1 -1h1v1h-1zM3 -1h1v1h-1zM6 -1h1v1h-1zM8 -1h1v1h-1zM10 -1h1v1h-1zM0 0h1v1h-1zM4 0h5v1h-5z"/><path id="g88ab" d="M1 -10h1v1h-1zM8 -10h1v1h-1zM2 -9h1v1h-1zM8 -9h1v1h-1zM0 -8h11v1h-11zM3 -7h1v1h-1zM5 -7h1v1h-1zM8 -7h1v1h-1zM10 -7h1v1h-1zM2 -6h1v1h-1zM4 -6h2v1h-2zM8 -6h1v1h-1zM1 -5h3v1h-3zM5 -5h6v1h-6zM0 -4h1v1h-1zM2 -4h1v1h-1zM4 -4h2v1h-2zM7 -4h1v1h-1zM9 -4h1v1h-1zM2 -3h1v1h-1zM5 -3h1v1h-1zM7 -3h1v1h-1zM9 -3h1v1h-1zM2 -2h1v1h-1zM5 -2h1v1h-1zM8 -2h1v1h-1zM2 -1h1v1h-1zM4 -1h1v1h-1zM7 -1h1v1h-1zM9 -1h1v1h-1zM2 0h2v1h-2zM5 0h2v1h-2zM10 0h1v1h-1z"/><path id="g53c2" d="M4 -10h1v1h-1zM3 -9h1v1h-1zM7 -9h1v1h-1zM2 -8h7v1h-7zM4 -7h1v1h-1zM0 -6h11v1h-11zM2 -5h1v1h-1zM5 -5h1v1h-1zM8 -5h1v1h-1zM0 -4h2v1h-2zM3 -4h2v1h-2zM9 -4h2v1h-2zM5 -3h2v1h-2zM3 -2h2v1h-2zM8 -2h1v1h-1zM6 -1h2v1h-2zM2 0h4v1h-4z"/><path id="g7167" d="M1 -10h10v1h-10zM1 -9h1v1h-1zM4 -9h1v1h-1zM7 -9h1v1h-1zM10 -9h1v1h-1zM1 -8h1v1h-1zM4 -8h1v1h-1zM6 -8h1v1h-1zM10 -8h1v1h-1zM1 -7h5v1h-5zM9 -7h1v1h-1zM1 -6h1v1h-1zM4 -6h1v1h-1zM6 -6h5v1h-5zM1 -5h1v1h-1zM4 -5h1v1h-1zM6 -5h1v1h-1zM10 -5h1v1h-1zM1 -4h4v1h-4zM6 -4h1v1h-1zM10 -4h1v1h-1zM1 -3h1v1h-1zM4 -3h1v1h-1zM6 -3h5v1h-5zM1 -1h1v1h-1zM3 -1h1v1h-1zM6 -1h1v1h-1zM9 -1h1v1h-1zM0 0h1v1h-1zM4 0h1v1h-1zM7 0h1v1h-1zM10 0h1v1h-1z"/><path id="g91cf" d="M2 -10h7v1h-7zM2 -9h1v1h-1zM8 -9h1v1h-1zM2 -8h7v1h-7zM2 -7h1v1h-1zM8 -7h1v1h-1zM0 -6h11v1h-11zM2 -5h1v1h-1zM5 -5h1v1h-1zM8 -5h1v1h-1zM2 -4h7v1h-7zM2 -3h1v1h-1zM5 -3h1v1h-1zM8 -3h1v1h-1zM1 -2h9v1h-9zM5 -1h1v1h-1zM0 0h11v1h-11z"/><path id="g4d" d="M0 -8h2v1h-2zM5 -8h2v1h-2zM0 -7h2v1h-2zM5 -7h2v1h-2zM0 -6h1v1h-1zM2 -6h1v1h-1zM4 -6h1v1h-1zM6 -6h1v1h-1zM0 -5h1v1h-1zM2 -5h1v1h-1zM4 -5h1v1h-1zM6 -5h1v1h-1zM0 -4h1v1h-1zM3 -4h1v1h-1zM6 -4h1v1h-1zM0 -3h1v1h-1zM3 -3h1v1h-1zM6 -3h1v1h-1zM0 -2h1v1h-1zM6 -2h1v1h-1zM0 -1h1v1h-1zM6 -1h1v1h-1z"/><path id="g66f4" d="M1 -10h10v1h-10zM6 -9h1v1h-1zM2 -8h8v1h-8zM2 -7h1v1h-1zM6 -7h1v1h-1zM9 -7h1v1h-1zM2 -6h8v1h-8zM2 -5h1v1h-1zM6 -5h1v1h-1zM9 -5h1v1h-1zM2 -4h8v1h-8zM4 -3h1v1h-1zM6 -3h1v1h-1zM5 -2h1v1h-1zM3 -1h2v1h-2zM6 -1h2v1h-2zM0 0h3v1h-3zM8 0h3v1h-3z"/><path id="g65b0" d="M3 -10h1v1h-1zM9 -10h2v1h-2zM0 -9h6v1h-6zM7 -9h2v1h-2zM1 -8h1v1h-1zM5 -8h1v1h-1zM7 -8h1v1h-1zM2 -7h1v1h-1zM4 -7h1v1h-1zM7 -7h1v1h-1zM0 -6h6v1h-6zM7 -6h4v1h-4zM3 -5h1v1h-1zM7 -5h1v1h-1zM9 -5h1v1h-1zM0 -4h6v1h-6zM7 -4h1v1h-1zM9 -4h1v1h-1zM3 -3h1v1h-1zM7 -3h1v1h-1zM9 -3h1v1h-1zM1 -2h1v1h-1zM3 -2h1v1h-1zM5 -2h1v1h-1zM7 -2h1v1h-1zM9 -2h1v1h-1zM0 -1h1v1h-1zM3 -1h1v1h-1zM6 -1h1v1h-1zM9 -1h1v1h-1zM2 0h2v1h-2zM5 0h1v1h-1zM9 0h1v1h-1z"/><path id="g6642" d="M7 -10h1v1h-1zM0 -9h4v1h-4zM5 -9h5v1h-5zM0 -8h1v1h-1zM3 -8h1v1h-1zM7 -8h1v1h-1zM0 -7h1v1h-1zM3 -7h1v1h-1zM7 -7h1v1h-1zM0 -6h11v1h-11zM0 -5h1v1h-1zM3 -5h1v1h-1zM8 -5h1v1h-1zM0 -4h1v1h-1zM3 -4h8v1h-8zM0 -3h1v1h-1zM3 -3h1v1h-1zM5 -3h1v1h-1zM8 -3h1v1h-1zM0 -2h4v1h-4zM6 -2h1v1h-1zM8 -2h1v1h-1zM8 -1h1v1h-1zM6 0h3v1h-3z"/><path id="g523b" d="M2 -10h1v1h-1zM10 -10h1v1h-1zM3 -9h1v1h-1zM10 -9h1v1h-1zM0 -8h7v1h-7zM8 -8h1v1h-1zM10 -8h1v1h-1zM2 -7h1v1h-1zM5 -7h1v1h-1zM8 -7h1v1h-1zM10 -7h1v1h-1zM1 -6h1v1h-1zM4 -6h1v1h-1zM8 -6h1v1h-1zM10 -6h1v1h-1zM0 -5h4v1h-4zM5 -5h1v1h-1zM8 -5h1v1h-1zM10 -5h1v1h-1zM2 -4h1v1h-1zM5 -4h1v1h-1zM8 -4h1v1h-1zM10 -4h1v1h-1zM1 -3h1v1h-1zM4 -3h1v1h-1zM8 -3h1v1h-1zM10 -3h1v1h-1zM0 -2h1v1h-1zM3 -2h2v1h-2zM10 -2h1v1h-1zM2 -1h1v1h-1zM5 -1h1v1h-1zM10 -1h1v1h-1zM0 0h2v1h-2zM5 0h1v1h-1zM8 0h3v1h-3z"/><path id="g41" d="M3 -8h1v1h-1zM3 -7h1v1h-1zM2 -6h1v1h-1zM4 -6h1v1h-1zM2 -5h1v1h-1zM4 -5h1v1h-1zM1 -4h1v1h-1zM5 -4h1v1h-1zM1 -3h5v1h-5zM0 -2h1v1h-1zM6 -2h1v1h-1zM0 -1h1v1h-1zM6 -1h1v1h-1z"/><path id="g9b54" d="M6 -10h1v1h-1zM1 -9h10v1h-10zM1 -8h1v1h-1zM4 -8h1v1h-1zM8 -8h1v1h-1zM1 -7h10v1h-10zM1 -6h1v1h-1zM3 -6h3v1h-3zM7 -6h3v1h-3zM1 -5h2v1h-2zM4 -5h1v1h-1zM6 -5h1v1h-1zM8 -5h1v1h-1zM10 -5h1v1h-1zM1 -4h1v1h-1zM3 -4h7v1h-7zM1 -3h1v1h-1zM3 -3h1v1h-1zM6 -3h1v1h-1zM9 -3h1v1h-1zM1 -2h1v1h-1zM3 -2h7v1h-7zM0 -1h1v1h-1zM4 -1h1v1h-1zM6 -1h1v1h-1zM8 -1h1v1h-1zM10 -1h1v1h-1zM0 0h1v1h-1zM2 0h2v1h-2zM6 0h5v1h-5z"/><path id="g6cd5" d="M1 -10h1v1h-1zM7 -10h1v1h-1zM2 -9h1v1h-1zM7 -9h1v1h-1zM5 -8h5v1h-5zM0 -7h1v1h-1zM7 -7h1v1h-1zM1 -6h1v1h-1zM7 -6h1v1h-1zM4 -5h7v1h-7zM2 -4h1v1h-1zM7 -4h1v1h-1zM0 -3h2v1h-2zM6 -3h1v1h-1zM1 -2h1v1h-1zM5 -2h1v1h-1zM9 -2h1v1h-1zM1 -1h1v1h-1zM4 -1h5v1h-5zM10 -1h1v1h-1zM1 0h1v1h-1zM5 0h1v1h-1zM10 0h1v1h-1z"/><path id="g5c11" d="M5 -10h1v1h-1zM5 -9h1v1h-1zM3 -8h1v1h-1zM5 -8h1v1h-1zM8 -8h1v1h-1zM3 -7h1v1h-1zM5 -7h1v1h-1zM9 -7h1v1h-1zM2 -6h1v1h-1zM5 -6h1v1h-1zM10 -6h1v1h-1zM1 -5h1v1h-1zM5 -5h1v1h-1zM8 -5h1v1h-1zM5 -4h1v1h-1zM7 -4h1v1h-1zM6 -3h1v1h-1zM5 -2h1v1h-1zM3 -1h2v1h-2zM0 0h3v1h-3z"/><path id="g5973" d="M4 -10h1v1h-1zM4 -9h1v1h-1zM4 -8h1v1h-1zM0 -7h11v1h-11zM3 -6h1v1h-1zM7 -6h1v1h-1zM3 -5h1v1h-1zM7 -5h1v1h-1zM2 -4h1v1h-1zM7 -4h1v1h-1zM2 -3h3v1h-3zM6 -3h1v1h-1zM5 -2h2v1h-2zM4 -1h1v1h-1zM7 -1h2v1h-2zM1 0h3v1h-3zM9 0h1v1h-1z"/><path id="g30ab" d="M4 -10h1v1h-1zM5 -9h1v1h-1zM5 -8h1v1h-1zM1 -7h1v1h-1zM5 -7h5v1h-5zM2 -6h4v1h-4zM9 -6h1v1h-1zM5 -5h1v1h-1zM9 -5h1v1h-1zM4 -4h1v1h-1zM9 -4h1v1h-1zM4 -3h1v1h-1zM8 -3h1v1h-1zM3 -2h1v1h-1zM8 -2h1v1h-1zM2 -1h1v1h-1zM6 -1h1v1h-1zM8 -1h1v1h-1zM1 0h1v1h-1zM7 0h1v1h-1z"/><path id="g306a" d="M3 -10h1v1h-1zM4 -9h1v1h-1zM6 -9h1v1h-1zM1 -8h5v1h-5zM7 -8h2v1h-2zM3 -7h1v1h-1zM8 -7h2v1h-2zM3 -6h1v1h-1zM7 -6h1v1h-1zM2 -5h1v1h-1zM7 -5h1v1h-1zM2 -4h1v1h-1zM7 -4h1v1h-1zM1 -3h1v1h-1zM4 -3h4v1h-4zM3 -2h1v1h-1zM7 -2h2v1h-2zM3 -1h1v1h-1zM7 -1h1v1h-1zM9 -1h1v1h-1zM4 0h3v1h-3z"/><path id="g306e" d="M4 -9h3v1h-3zM3 -8h1v1h-1zM5 -8h1v1h-1zM7 -8h1v1h-1zM2 -7h1v1h-1zM5 -7h1v1h-1zM8 -7h1v1h-1zM1 -6h1v1h-1zM5 -6h1v1h-1zM9 -6h1v1h-1zM1 -5h1v1h-1zM4 -5h1v1h-1zM9 -5h1v1h-1zM1 -4h1v1h-1zM4 -4h1v1h-1zM9 -4h1v1h-1zM1 -3h1v1h-1zM3 -3h1v1h-1zM8 -3h1v1h-1zM2 -2h1v1h-1zM7 -2h1v1h-1zM5 -1h2v1h-2z"/><path id="g306f" d="M7 -10h1v1h-1zM1 -9h1v1h-1zM8 -9h1v1h-1zM2 -8h1v1h-1zM4 -8h1v1h-1zM8 -8h3v1h-3zM2 -7h1v1h-1zM5 -7h4v1h-4zM1 -6h1v1h-1zM8 -6h1v1h-1zM1 -5h1v1h-1zM8 -5h1v1h-1zM1 -4h1v1h-1zM8 -4h1v1h-1zM1 -3h1v1h-1zM5 -3h4v1h-4zM1 -2h1v1h-1zM3 -2h2v1h-2zM8 -2h2v1h-2zM1 -1h2v1h-2zM4 -1h1v1h-1zM8 -1h1v1h-1zM10 -1h1v1h-1zM2 0h1v1h-1zM5 0h3v1h-3z"/><path id="g27" d="M2 -10h1v1h-1zM2 -9h1v1h-1zM2 -8h1v1h-1z"/><path id="g300c" d="M7 -10h4v1h-4zM7 -9h1v1h-1zM7 -8h1v1h-1zM7 -7h1v1h-1zM7 -6h1v1h-1zM7 -5h1v1h-1zM7 -4h1v1h-1zM7 -3h1v1h-1z"/><path id="g45" d="M0 -8h5v1h-5zM0 -7h1v1h-1zM0 -6h1v1h-1zM0 -5h5v1h-5zM0 -4h1v1h-1zM0 -3h1v1h-1zM0 -2h1v1h-1zM0 -1h5v1h-5z"/><path id="g52" d="M0 -8h4v1h-4zM0 -7h1v1h-1zM4 -7h1v1h-1zM0 -6h1v1h-1zM4 -6h1v1h-1zM0 -5h1v1h-1zM4 -5h1v1h-1zM0 -4h4v1h-4zM0 -3h1v1h-1zM3 -3h1v1h-1zM0 -2h1v1h-1zM4 -2h1v1h-1zM0 -1h1v1h-1zM5 -1h1v1h-1z"/><path id="g4e" d="M0 -8h1v1h-1zM5 -8h1v1h-1zM0 -7h2v1h-2zM5 -7h1v1h-1zM0 -6h1v1h-1zM2 -6h1v1h-1zM5 -6h1v1h-1zM0 -5h1v1h-1zM3 -5h1v1h-1zM5 -5h1v1h-1zM0 -4h1v1h-1zM4 -4h2v1h-2zM0 -3h1v1h-1zM5 -3h1v1h-1zM0 -2h1v1h-1zM5 -2h1v1h-1zM0 -1h1v1h-1zM5 -1h1v1h-1z"/><path id="g4c" d="M0 -8h1v1h-1zM0 -7h1v1h-1zM0 -6h1v1h-1zM0 -5h1v1h-1zM0 -4h1v1h-1zM0 -3h1v1h-1zM0 -2h1v1h-1zM0 -1h5v1h-5z"/><path id="g5a" d="M0 -8h7v1h-7zM5 -7h1v1h-1zM4 -6h1v1h-1zM3 -5h1v1h-1zM2 -4h1v1h-1zM1 -3h1v1h-1zM0 -2h1v1h-1zM0 -1h7v1h-7z"/><path id="g300d" d="M4 -7h1v1h-1zM4 -6h1v1h-1zM4 -5h1v1h-1zM4 -4h1v1h-1zM4 -3h1v1h-1zM4 -2h1v1h-1zM4 -1h1v1h-1zM1 0h4v1h-4z"/><path id="g7a7a" d="M5 -10h1v1h-1zM1 -9h10v1h-10zM1 -8h1v1h-1zM10 -8h1v1h-1zM0 -7h1v1h-1zM4 -7h1v1h-1zM7 -7h1v1h-1zM3 -6h1v1h-1zM8 -6h1v1h-1zM1 -5h2v1h-2zM9 -5h1v1h-1zM3 -4h6v1h-6zM5 -3h1v1h-1zM5 -2h1v1h-1zM5 -1h1v1h-1zM1 0h10v1h-10z"/><path id="g81ea" d="M4 -10h1v1h-1zM2 -9h7v1h-7zM2 -8h1v1h-1zM8 -8h1v1h-1zM2 -7h1v1h-1zM8 -7h1v1h-1zM2 -6h7v1h-7zM2 -5h1v1h-1zM8 -5h1v1h-1zM2 -4h7v1h-7zM2 -3h1v1h-1zM8 -3h1v1h-1zM2 -2h1v1h-1zM8 -2h1v1h-1zM2 -1h7v1h-7zM2 0h1v1h-1zM8 0h1v1h-1z"/><path id="g72" d="M0 -6h3v1h-3zM0 -5h1v1h-1zM0 -4h1v1h-1zM0 -3h1v1h-1zM0 -2h1v1h-1zM0 -1h1v1h-1z"/><path id="g76" d="M0 -6h1v1h-1zM4 -6h1v1h-1zM0 -5h1v1h-1zM4 -5h1v1h-1zM1 -4h1v1h-1zM3 -4h1v1h-1zM1 -3h1v1h-1zM3 -3h1v1h-1zM2 -2h1v1h-1zM2 -1h1v1h-1z"/><path id="g2c" d="M2 -2h2v1h-2zM3 -1h1v1h-1zM2 0h1v1h-1z"/><path id="g37" d="M0 -8h5v1h-5zM4 -7h1v1h-1zM4 -6h1v1h-1zM3 -5h1v1h-1zM3 -4h1v1h-1zM2 -3h1v1h-1zM2 -2h1v1h-1zM2 -1h1v1h-1z"/><path id="g4eee" d="M3 -10h1v1h-1zM9 -10h2v1h-2zM3 -9h1v1h-1zM5 -9h4v1h-4zM2 -8h1v1h-1zM5 -8h1v1h-1zM2 -7h1v1h-1zM5 -7h1v1h-1zM1 -6h2v1h-2zM5 -6h6v1h-6zM0 -5h1v1h-1zM2 -5h1v1h-1zM5 -5h2v1h-2zM10 -5h1v1h-1zM2 -4h1v1h-1zM5 -4h1v1h-1zM7 -4h1v1h-1zM10 -4h1v1h-1zM2 -3h1v1h-1zM5 -3h1v1h-1zM7 -3h1v1h-1zM9 -3h1v1h-1zM2 -2h1v1h-1zM4 -2h1v1h-1zM8 -2h1v1h-1zM2 -1h1v1h-1zM4 -1h1v1h-1zM7 -1h1v1h-1zM9 -1h1v1h-1zM2 0h2v1h-2zM6 0h1v1h-1zM10 0h1v1h-1z"/><path id="g60f3" d="M2 -10h1v1h-1zM5 -10h5v1h-5zM2 -9h1v1h-1zM5 -9h1v1h-1zM9 -9h1v1h-1zM0 -8h10v1h-10zM2 -7h1v1h-1zM5 -7h1v1h-1zM9 -7h1v1h-1zM1 -6h3v1h-3zM5 -6h5v1h-5zM0 -5h1v1h-1zM2 -5h1v1h-1zM4 -5h2v1h-2zM9 -5h1v1h-1zM2 -4h1v1h-1zM5 -4h5v1h-5zM3 -3h1v1h-1zM5 -3h1v1h-1zM9 -3h1v1h-1zM1 -2h1v1h-1zM3 -2h1v1h-1zM6 -2h1v1h-1zM8 -2h1v1h-1zM10 -2h1v1h-1zM1 -1h1v1h-1zM3 -1h1v1h-1zM8 -1h1v1h-1zM10 -1h1v1h-1zM0 0h1v1h-1zM4 0h5v1h-5z"/><path id="g33" d="M0 -8h4v1h-4zM4 -7h1v1h-1zM4 -6h1v1h-1zM1 -5h3v1h-3zM4 -4h1v1h-1zM4 -3h1v1h-1zM4 -2h1v1h-1zM0 -1h4v1h-4z"/><path id="g2f" d="M3 -11h1v1h-1zM3 -10h1v1h-1zM3 -9h1v1h-1zM2 -8h1v1h-1zM2 -7h1v1h-1zM2 -6h1v1h-1zM1 -5h1v1h-1zM1 -4h1v1h-1zM1 -3h1v1h-1zM0 -2h1v1h-1zM0 -1h1v1h-1zM0 0h1v1h-1z"/><path id="g38" d="M1 -8h3v1h-3zM0 -7h1v1h-1zM4 -7h1v1h-1zM0 -6h1v1h-1zM4 -6h1v1h-1zM1 -5h3v1h-3zM0 -4h1v1h-1zM4 -4h1v1h-1zM0 -3h1v1h-1zM4 -3h1v1h-1zM0 -2h1v1h-1zM4 -2h1v1h-1zM1 -1h3v1h-3z"/><path id="g4f" d="M2 -8h3v1h-3zM1 -7h1v1h-1zM5 -7h1v1h-1zM0 -6h1v1h-1zM6 -6h1v1h-1zM0 -5h1v1h-1zM6 -5h1v1h-1zM0 -4h1v1h-1zM6 -4h1v1h-1zM0 -3h1v1h-1zM6 -3h1v1h-1zM1 -2h1v1h-1zM5 -2h1v1h-1zM2 -1h3v1h-3z"/><path id="g58f0" d="M5 -10h1v1h-1zM0 -9h11v1h-11zM5 -8h1v1h-1zM2 -7h8v1h-8zM2 -5h8v1h-8zM2 -4h1v1h-1zM5 -4h1v1h-1zM9 -4h1v1h-1zM2 -3h8v1h-8zM2 -2h1v1h-1zM1 -1h1v1h-1zM0 0h1v1h-1z"/><path id="g2d" d="M0 -5h5v1h-5z"/><path id="g30df" d="M3 -9h2v1h-2zM5 -8h2v1h-2zM7 -7h2v1h-2zM3 -5h3v1h-3zM6 -4h2v1h-2zM2 -2h3v1h-3zM5 -1h2v1h-2zM7 0h2v1h-2z"/><path id="g30e9" d="M2 -9h1v1h-1zM5 -9h3v1h-3zM3 -8h2v1h-2zM1 -7h1v1h-1zM6 -7h4v1h-4zM2 -6h4v1h-4zM9 -6h1v1h-1zM9 -5h1v1h-1zM8 -4h1v1h-1zM8 -3h1v1h-1zM7 -2h1v1h-1zM5 -1h2v1h-2zM3 0h2v1h-2z"/><path id="g2606" d="M5 -10h1v1h-1zM5 -9h1v1h-1zM4 -8h3v1h-3zM0 -7h5v1h-5zM6 -7h5v1h-5zM2 -6h1v1h-1zM8 -6h1v1h-1zM3 -5h1v1h-1zM7 -5h1v1h-1zM3 -4h1v1h-1zM5 -4h1v1h-1zM7 -4h1v1h-1zM3 -3h2v1h-2zM6 -3h2v1h-2zM2 -2h2v1h-2zM7 -2h2v1h-2zM2 -1h1v1h-1zM8 -1h1v1h-1z"/><path id="g21" d="M2 -9h1v1h-1zM2 -8h1v1h-1zM2 -7h1v1h-1zM2 -6h1v1h-1zM2 -5h1v1h-1zM2 -4h1v1h-1zM2 -1h1v1h-1z"/><path id="g78" d="M0 -6h1v1h-1zM4 -6h1v1h-1zM1 -5h1v1h-1zM3 -5h1v1h-1zM2 -4h1v1h-1zM1 -3h1v1h-1zM3 -3h1v1h-1zM0 -2h1v1h-1zM4 -2h1v1h-1zM0 -1h1v1h-1zM4 -1h1v1h-1z"/><path id="g57" d="M0 -8h1v1h-1zM4 -8h1v1h-1zM8 -8h1v1h-1zM0 -7h1v1h-1zM4 -7h1v1h-1zM8 -7h1v1h-1zM0 -6h1v1h-1zM4 -6h1v1h-1zM8 -6h1v1h-1zM1 -5h1v1h-1zM3 -5h1v1h-1zM5 -5h1v1h-1zM7 -5h1v1h-1zM1 -4h1v1h-1zM3 -4h1v1h-1zM5 -4h1v1h-1zM7 -4h1v1h-1zM1 -3h1v1h-1zM3 -3h1v1h-1zM5 -3h1v1h-1zM7 -3h1v1h-1zM2 -2h1v1h-1zM6 -2h1v1h-1zM2 -1h1v1h-1zM6 -1h1v1h-1z"/><path id="g6e" d="M0 -6h4v1h-4zM0 -5h1v1h-1zM4 -5h1v1h-1zM0 -4h1v1h-1zM4 -4h1v1h-1zM0 -3h1v1h-1zM4 -3h1v1h-1zM0 -2h1v1h-1zM4 -2h1v1h-1zM0 -1h1v1h-1zM4 -1h1v1h-1z"/><path id="g63" d="M1 -6h3v1h-3zM0 -5h1v1h-1zM0 -4h1v1h-1zM0 -3h1v1h-1zM0 -2h1v1h-1zM1 -1h3v1h-3z"/><path id="g30a2" d="M0 -8h1v1h-1zM5 -8h5v1h-5zM1 -7h4v1h-4zM9 -7h1v1h-1zM5 -6h1v1h-1zM8 -6h1v1h-1zM5 -5h3v1h-3zM5 -4h1v1h-1zM5 -3h1v1h-1zM4 -2h1v1h-1zM4 -1h1v1h-1zM3 0h1v1h-1z"/><path id="g30cb" d="M6 -8h3v1h-3zM2 -7h4v1h-4zM5 -3h5v1h-5zM1 -2h4v1h-4zM10 -2h1v1h-1z"/><path id="g30e1" d="M8 -9h1v1h-1zM9 -8h1v1h-1zM9 -7h1v1h-1zM4 -6h2v1h-2zM9 -6h1v1h-1zM6 -5h3v1h-3zM8 -4h1v1h-1zM7 -3h1v1h-1zM9 -3h1v1h-1zM6 -2h1v1h-1zM10 -2h1v1h-1zM4 -1h2v1h-2zM2 0h2v1h-2z"/><path id="g5b" d="M2 -10h3v1h-3zM2 -9h1v1h-1zM2 -8h1v1h-1zM2 -7h1v1h-1zM2 -6h1v1h-1zM2 -5h1v1h-1zM2 -4h1v1h-1zM2 -3h1v1h-1zM2 -2h1v1h-1zM2 -1h1v1h-1zM2 0h3v1h-3z"/><path id="g43" d="M1 -8h4v1h-4zM0 -7h1v1h-1zM5 -7h1v1h-1zM0 -6h1v1h-1zM0 -5h1v1h-1zM0 -4h1v1h-1zM0 -3h1v1h-1zM0 -2h1v1h-1zM5 -2h1v1h-1zM1 -1h4v1h-4z"/><path id="g5d" d="M1 -10h3v1h-3zM3 -9h1v1h-1zM3 -8h1v1h-1zM3 -7h1v1h-1zM3 -6h1v1h-1zM3 -5h1v1h-1zM3 -4h1v1h-1zM3 -3h1v1h-1zM3 -2h1v1h-1zM3 -1h1v1h-1zM1 0h3v1h-3z"/><path id="g96d1" d="M2 -10h1v1h-1zM6 -10h1v1h-1zM8 -10h1v1h-1zM1 -9h4v1h-4zM6 -9h1v1h-1zM8 -9h1v1h-1zM2 -8h1v1h-1zM4 -8h1v1h-1zM6 -8h5v1h-5zM2 -7h1v1h-1zM4 -7h1v1h-1zM6 -7h1v1h-1zM8 -7h1v1h-1zM1 -6h1v1h-1zM4 -6h3v1h-3zM8 -6h1v1h-1zM3 -5h1v1h-1zM6 -5h4v1h-4zM0 -4h7v1h-7zM8 -4h1v1h-1zM3 -3h1v1h-1zM6 -3h4v1h-4zM1 -2h1v1h-1zM3 -2h2v1h-2zM6 -2h1v1h-1zM8 -2h1v1h-1zM0 -1h1v1h-1zM3 -1h1v1h-1zM5 -1h6v1h-6zM2 0h2v1h-2zM6 0h1v1h-1z"/><path id="g8a8c" d="M1 -10h1v1h-1zM7 -10h1v1h-1zM0 -9h4v1h-4zM7 -9h1v1h-1zM4 -8h7v1h-7zM0 -7h4v1h-4zM7 -7h1v1h-1zM5 -6h5v1h-5zM0 -5h4v1h-4zM7 -5h1v1h-1zM8 -4h1v1h-1zM0 -3h4v1h-4zM6 -3h1v1h-1zM10 -3h1v1h-1zM0 -2h1v1h-1zM3 -2h1v1h-1zM5 -2h2v1h-2zM10 -2h1v1h-1zM0 -1h5v1h-5zM6 -1h1v1h-1zM9 -1h1v1h-1zM0 0h1v1h-1zM3 0h1v1h-1zM7 0h3v1h-3z"/><path id="g49" d="M0 -8h3v1h-3zM1 -7h1v1h-1zM1 -6h1v1h-1zM1 -5h1v1h-1zM1 -4h1v1h-1zM1 -3h1v1h-1zM1 -2h1v1h-1zM0 -1h3v1h-3z"/><path id="g5dfb" d="M3 -10h1v1h-1zM5 -10h1v1h-1zM8 -10h1v1h-1zM4 -9h2v1h-2zM7 -9h1v1h-1zM2 -8h7v1h-7zM5 -7h1v1h-1zM1 -6h10v1h-10zM3 -5h1v1h-1zM8 -5h1v1h-1zM2 -4h6v1h-6zM9 -4h1v1h-1zM0 -3h2v1h-2zM7 -3h1v1h-1zM10 -3h1v1h-1zM3 -2h5v1h-5zM3 -1h1v1h-1zM8 -1h1v1h-1zM3 0h6v1h-6z"/><path id="g982d" d="M0 -10h5v1h-5zM6 -10h5v1h-5zM8 -9h1v1h-1zM1 -8h4v1h-4zM6 -8h5v1h-5zM1 -7h1v1h-1zM4 -7h1v1h-1zM6 -7h1v1h-1zM10 -7h1v1h-1zM1 -6h1v1h-1zM4 -6h1v1h-1zM6 -6h5v1h-5zM1 -5h4v1h-4zM6 -5h1v1h-1zM10 -5h1v1h-1zM0 -4h1v1h-1zM4 -4h1v1h-1zM6 -4h5v1h-5zM1 -3h1v1h-1zM3 -3h1v1h-1zM6 -3h1v1h-1zM10 -3h1v1h-1zM2 -2h3v1h-3zM6 -2h5v1h-5zM0 -1h2v1h-2zM7 -1h1v1h-1zM9 -1h1v1h-1zM6 0h1v1h-1zM10 0h1v1h-1z"/><path id="g7279" d="M2 -10h1v1h-1zM7 -10h1v1h-1zM0 -9h1v1h-1zM2 -9h1v1h-1zM5 -9h5v1h-5zM0 -8h4v1h-4zM7 -8h1v1h-1zM0 -7h1v1h-1zM2 -7h1v1h-1zM7 -7h1v1h-1zM0 -6h1v1h-1zM2 -6h1v1h-1zM4 -6h7v1h-7zM2 -5h2v1h-2zM8 -5h1v1h-1zM1 -4h2v1h-2zM4 -4h7v1h-7zM0 -3h1v1h-1zM2 -3h1v1h-1zM5 -3h1v1h-1zM8 -3h1v1h-1zM2 -2h1v1h-1zM6 -2h1v1h-1zM8 -2h1v1h-1zM2 -1h1v1h-1zM8 -1h1v1h-1zM2 0h1v1h-1zM6 0h3v1h-3z"/><path id="g96c6" d="M3 -10h1v1h-1zM5 -10h1v1h-1zM2 -9h1v1h-1zM6 -9h1v1h-1zM1 -8h10v1h-10zM0 -7h1v1h-1zM2 -7h1v1h-1zM5 -7h1v1h-1zM2 -6h8v1h-8zM2 -5h1v1h-1zM5 -5h1v1h-1zM2 -4h8v1h-8zM2 -3h1v1h-1zM5 -3h1v1h-1zM0 -2h11v1h-11zM3 -1h1v1h-1zM5 -1h1v1h-1zM7 -1h1v1h-1zM0 0h3v1h-3zM5 0h1v1h-1zM8 0h3v1h-3z"/><path id="g672b" d="M5 -10h1v1h-1zM5 -9h1v1h-1zM0 -8h11v1h-11zM5 -7h1v1h-1zM1 -6h9v1h-9zM5 -5h1v1h-1zM4 -4h3v1h-3zM3 -3h1v1h-1zM5 -3h1v1h-1zM7 -3h1v1h-1zM2 -2h1v1h-1zM5 -2h1v1h-1zM8 -2h1v1h-1zM0 -1h2v1h-2zM5 -1h1v1h-1zM9 -1h2v1h-2zM5 0h1v1h-1z"/><path id="g5742" d="M2 -10h1v1h-1zM9 -10h1v1h-1zM2 -9h1v1h-1zM5 -9h4v1h-4zM2 -8h1v1h-1zM5 -8h1v1h-1zM0 -7h6v1h-6zM2 -6h1v1h-1zM5 -6h6v1h-6zM2 -5h1v1h-1zM5 -5h1v1h-1zM7 -5h1v1h-1zM10 -5h1v1h-1zM2 -4h1v1h-1zM5 -4h1v1h-1zM7 -4h1v1h-1zM9 -4h1v1h-1zM2 -3h4v1h-4zM7 -3h1v1h-1zM9 -3h1v1h-1zM0 -2h2v1h-2zM5 -2h1v1h-1zM8 -2h1v1h-1zM4 -1h1v1h-1zM7 -1h1v1h-1zM9 -1h1v1h-1zM3 0h1v1h-1zM5 0h2v1h-2zM10 0h1v1h-1z"/><path id="g672c" d="M5 -10h1v1h-1zM5 -9h1v1h-1zM0 -8h11v1h-11zM4 -7h3v1h-3zM3 -6h1v1h-1zM5 -6h1v1h-1zM7 -6h1v1h-1zM3 -5h1v1h-1zM5 -5h1v1h-1zM7 -5h1v1h-1zM2 -4h1v1h-1zM5 -4h1v1h-1zM8 -4h1v1h-1zM1 -3h1v1h-1zM5 -3h1v1h-1zM9 -3h1v1h-1zM0 -2h1v1h-1zM3 -2h5v1h-5zM10 -2h1v1h-1zM5 -1h1v1h-1zM5 0h1v1h-1z"/><path id="g771f" d="M5 -10h1v1h-1zM1 -9h10v1h-10zM5 -8h1v1h-1zM3 -7h6v1h-6zM3 -6h1v1h-1zM8 -6h1v1h-1zM3 -5h4v1h-4zM8 -5h1v1h-1zM3 -4h1v1h-1zM5 -4h4v1h-4zM3 -3h1v1h-1zM8 -3h1v1h-1zM1 -2h10v1h-10zM4 -1h1v1h-1zM7 -1h1v1h-1zM2 0h2v1h-2zM8 0h2v1h-2z"/><path id="g7dbe" d="M2 -10h1v1h-1zM7 -10h1v1h-1zM2 -9h1v1h-1zM5 -9h5v1h-5zM1 -8h1v1h-1zM3 -8h1v1h-1zM7 -8h1v1h-1zM0 -7h11v1h-11zM2 -6h1v1h-1zM5 -6h1v1h-1zM9 -6h1v1h-1zM1 -5h1v1h-1zM3 -5h2v1h-2zM6 -5h1v1h-1zM10 -5h1v1h-1zM0 -4h3v1h-3zM4 -4h1v1h-1zM6 -4h4v1h-4zM5 -3h2v1h-2zM8 -3h1v1h-1zM1 -2h1v1h-1zM3 -2h2v1h-2zM7 -2h1v1h-1zM0 -1h1v1h-1zM2 -1h1v1h-1zM4 -1h1v1h-1zM6 -1h1v1h-1zM8 -1h1v1h-1zM0 0h1v1h-1zM2 0h1v1h-1zM4 0h2v1h-2zM9 0h2v1h-2z"/><path id="g7a" d="M0 -6h5v1h-5zM4 -5h1v1h-1zM3 -4h1v1h-1zM2 -3h1v1h-1zM1 -2h1v1h-1zM0 -1h5v1h-5z"/><path id="g71" d="M1 -6h4v1h-4zM0 -5h1v1h-1zM4 -5h1v1h-1zM0 -4h1v1h-1zM4 -4h1v1h-1zM0 -3h1v1h-1zM4 -3h1v1h-1zM0 -2h1v1h-1zM4 -2h1v1h-1zM1 -1h4v1h-4zM4 0h1v1h-1zM4 1h1v1h-1z"/><path id="g6a" d="M1 -8h1v1h-1zM1 -6h1v1h-1zM1 -5h1v1h-1zM1 -4h1v1h-1zM1 -3h1v1h-1zM1 -2h1v1h-1zM1 -1h1v1h-1zM1 0h1v1h-1zM0 1h2v1h-2z"/><path id="g6620" d="M7 -10h1v1h-1zM0 -9h4v1h-4zM7 -9h1v1h-1zM0 -8h1v1h-1zM3 -8h1v1h-1zM5 -8h5v1h-5zM0 -7h1v1h-1zM3 -7h1v1h-1zM5 -7h1v1h-1zM7 -7h1v1h-1zM9 -7h1v1h-1zM0 -6h4v1h-4zM5 -6h1v1h-1zM7 -6h1v1h-1zM9 -6h1v1h-1zM0 -5h1v1h-1zM3 -5h1v1h-1zM5 -5h1v1h-1zM7 -5h1v1h-1zM9 -5h1v1h-1zM0 -4h1v1h-1zM3 -4h8v1h-8zM0 -3h4v1h-4zM7 -3h1v1h-1zM0 -2h1v1h-1zM3 -2h1v1h-1zM6 -2h1v1h-1zM8 -2h1v1h-1zM5 -1h1v1h-1zM9 -1h1v1h-1zM4 0h1v1h-1zM10 0h1v1h-1z"/><path id="g50cf" d="M3 -10h1v1h-1zM6 -10h4v1h-4zM3 -9h1v1h-1zM5 -9h1v1h-1zM8 -9h1v1h-1zM2 -8h1v1h-1zM4 -8h7v1h-7zM2 -7h2v1h-2zM5 -7h1v1h-1zM7 -7h1v1h-1zM10 -7h1v1h-1zM1 -6h2v1h-2zM5 -6h6v1h-6zM0 -5h1v1h-1zM2 -5h1v1h-1zM6 -5h1v1h-1zM10 -5h1v1h-1zM2 -4h1v1h-1zM4 -4h2v1h-2zM7 -4h1v1h-1zM9 -4h1v1h-1zM2 -3h1v1h-1zM6 -3h1v1h-1zM8 -3h1v1h-1zM2 -2h1v1h-1zM4 -2h2v1h-2zM7 -2h3v1h-3zM2 -1h1v1h-1zM6 -1h1v1h-1zM8 -1h1v1h-1zM10 -1h1v1h-1zM2 0h1v1h-1zM4 0h2v1h-2zM7 0h2v1h-2z"/><path id="g5178" d="M4 -10h1v1h-1zM6 -10h1v1h-1zM4 -9h1v1h-1zM6 -9h1v1h-1zM2 -8h8v1h-8zM2 -7h1v1h-1zM4 -7h1v1h-1zM6 -7h1v1h-1zM9 -7h1v1h-1zM2 -6h8v1h-8zM2 -5h1v1h-1zM4 -5h1v1h-1zM6 -5h1v1h-1zM9 -5h1v1h-1zM2 -4h1v1h-1zM4 -4h1v1h-1zM6 -4h1v1h-1zM9 -4h1v1h-1zM0 -3h11v1h-11zM3 -2h1v1h-1zM7 -2h1v1h-1zM2 -1h1v1h-1zM8 -1h1v1h-1zM0 0h2v1h-2zM9 0h2v1h-2z"/><path id="g300e" d="M6 -10h5v1h-5zM6 -9h1v1h-1zM10 -9h1v1h-1zM6 -8h1v1h-1zM8 -8h3v1h-3zM6 -7h1v1h-1zM8 -7h1v1h-1zM6 -6h1v1h-1zM8 -6h1v1h-1zM6 -5h1v1h-1zM8 -5h1v1h-1zM6 -4h1v1h-1zM8 -4h1v1h-1zM6 -3h1v1h-1zM8 -3h1v1h-1zM6 -2h3v1h-3z"/><path id="g300f" d="M3 -8h3v1h-3zM3 -7h1v1h-1zM5 -7h1v1h-1zM3 -6h1v1h-1zM5 -6h1v1h-1zM3 -5h1v1h-1zM5 -5h1v1h-1zM3 -4h1v1h-1zM5 -4h1v1h-1zM3 -3h1v1h-1zM5 -3h1v1h-1zM1 -2h3v1h-3zM5 -2h1v1h-1zM1 -1h1v1h-1zM5 -1h1v1h-1zM1 0h5v1h-5z"/><path id="g67" d="M1 -6h4v1h-4zM0 -5h1v1h-1zM4 -5h1v1h-1zM0 -4h1v1h-1zM4 -4h1v1h-1zM0 -3h1v1h-1zM4 -3h1v1h-1zM0 -2h1v1h-1zM4 -2h1v1h-1zM1 -1h4v1h-4zM4 0h1v1h-1zM1 1h3v1h-3z"/><path id="g30d0" d="M8 -9h1v1h-1zM10 -9h1v1h-1zM8 -8h1v1h-1zM10 -8h1v1h-1zM3 -7h1v1h-1zM7 -7h1v1h-1zM4 -6h1v1h-1zM8 -6h1v1h-1zM3 -5h1v1h-1zM9 -5h1v1h-1zM3 -4h1v1h-1zM9 -4h1v1h-1zM2 -3h1v1h-1zM10 -3h1v1h-1zM1 -2h1v1h-1zM10 -2h1v1h-1zM0 -1h1v1h-1zM10 -1h1v1h-1z"/><path id="g26" d="M2 -8h1v1h-1zM1 -7h1v1h-1zM3 -7h1v1h-1zM1 -6h1v1h-1zM3 -6h1v1h-1zM2 -5h1v1h-1zM1 -4h1v1h-1zM3 -4h2v1h-2zM0 -3h1v1h-1zM3 -3h1v1h-1zM0 -2h1v1h-1zM3 -2h1v1h-1zM1 -1h2v1h-2zM4 -1h1v1h-1z"/><path id="g47" d="M1 -8h4v1h-4zM0 -7h1v1h-1zM5 -7h1v1h-1zM0 -6h1v1h-1zM0 -5h1v1h-1zM0 -4h1v1h-1zM4 -4h2v1h-2zM0 -3h1v1h-1zM5 -3h1v1h-1zM0 -2h1v1h-1zM5 -2h1v1h-1zM1 -1h5v1h-5z"/><path id="g3000" d=""/><path id="g80f8" d="M1 -10h3v1h-3zM6 -10h1v1h-1zM1 -9h1v1h-1zM3 -9h1v1h-1zM6 -9h5v1h-5zM1 -8h1v1h-1zM3 -8h1v1h-1zM5 -8h1v1h-1zM10 -8h1v1h-1zM1 -7h4v1h-4zM7 -7h1v1h-1zM10 -7h1v1h-1zM1 -6h1v1h-1zM3 -6h1v1h-1zM5 -6h2v1h-2zM8 -6h1v1h-1zM10 -6h1v1h-1zM1 -5h1v1h-1zM3 -5h1v1h-1zM5 -5h1v1h-1zM7 -5h2v1h-2zM10 -5h1v1h-1zM1 -4h3v1h-3zM5 -4h2v1h-2zM8 -4h1v1h-1zM10 -4h1v1h-1zM1 -3h1v1h-1zM3 -3h1v1h-1zM5 -3h1v1h-1zM8 -3h1v1h-1zM10 -3h1v1h-1zM1 -2h1v1h-1zM3 -2h1v1h-1zM5 -2h4v1h-4zM10 -2h1v1h-1zM0 -1h1v1h-1zM3 -1h1v1h-1zM10 -1h1v1h-1zM0 0h1v1h-1zM2 0h2v1h-2zM8 0h2v1h-2z"/><path id="g3061" d="M4 -10h1v1h-1zM5 -9h1v1h-1zM1 -8h1v1h-1zM5 -8h1v1h-1zM7 -8h1v1h-1zM2 -7h5v1h-5zM4 -6h1v1h-1zM4 -5h1v1h-1zM6 -5h3v1h-3zM4 -4h2v1h-2zM9 -4h1v1h-1zM3 -3h1v1h-1zM9 -3h1v1h-1zM9 -2h1v1h-1zM7 -1h2v1h-2zM4 0h3v1h-3z"/><path id="g3089" d="M4 -10h1v1h-1zM5 -9h2v1h-2zM3 -8h1v1h-1zM2 -7h1v1h-1zM2 -6h1v1h-1zM2 -5h1v1h-1zM4 -5h4v1h-4zM2 -4h2v1h-2zM8 -4h1v1h-1zM2 -3h1v1h-1zM8 -3h1v1h-1zM8 -2h1v1h-1zM6 -1h2v1h-2zM3 0h3v1h-3z"/><path id="gff01" d="M4 -10h1v1h-1zM3 -9h3v1h-3zM3 -8h3v1h-3zM3 -7h3v1h-3zM3 -6h3v1h-3zM4 -5h1v1h-1zM4 -4h1v1h-1zM4 -3h1v1h-1zM4 -1h1v1h-1zM4 0h1v1h-1z"/><path id="g3010" d="M2 -10h4v1h-4zM2 -9h3v1h-3zM2 -8h2v1h-2zM2 -7h2v1h-2zM2 -6h1v1h-1zM2 -5h1v1h-1zM2 -4h1v1h-1zM2 -3h2v1h-2zM2 -2h2v1h-2zM2 -1h3v1h-3zM2 0h4v1h-4z"/><path id="g3011" d="M2 -10h4v1h-4zM3 -9h3v1h-3zM4 -8h2v1h-2zM4 -7h2v1h-2zM5 -6h1v1h-1zM5 -5h1v1h-1zM5 -4h1v1h-1zM4 -3h2v1h-2zM4 -2h2v1h-2zM3 -1h3v1h-3zM2 0h4v1h-4z"/><path id="g300a" d="M7 -9h1v1h-1zM10 -9h1v1h-1zM7 -8h1v1h-1zM10 -8h1v1h-1zM6 -7h1v1h-1zM9 -7h1v1h-1zM6 -6h1v1h-1zM9 -6h1v1h-1zM5 -5h1v1h-1zM8 -5h1v1h-1zM5 -4h1v1h-1zM8 -4h1v1h-1zM6 -3h1v1h-1zM9 -3h1v1h-1zM6 -2h1v1h-1zM9 -2h1v1h-1zM7 -1h1v1h-1zM10 -1h1v1h-1zM7 0h1v1h-1zM10 0h1v1h-1z"/><path id="g300b" d="M0 -9h1v1h-1zM3 -9h1v1h-1zM0 -8h1v1h-1zM3 -8h1v1h-1zM1 -7h1v1h-1zM4 -7h1v1h-1zM1 -6h1v1h-1zM4 -6h1v1h-1zM2 -5h1v1h-1zM5 -5h1v1h-1zM2 -4h1v1h-1zM5 -4h1v1h-1zM1 -3h1v1h-1zM4 -3h1v1h-1zM1 -2h1v1h-1zM4 -2h1v1h-1zM0 -1h1v1h-1zM3 -1h1v1h-1zM0 0h1v1h-1zM3 0h1v1h-1z"/><path id="g75" d="M0 -6h1v1h-1zM4 -6h1v1h-1zM0 -5h1v1h-1zM4 -5h1v1h-1zM0 -4h1v1h-1zM4 -4h1v1h-1zM0 -3h1v1h-1zM4 -3h1v1h-1zM0 -2h1v1h-1zM4 -2h1v1h-1zM1 -1h4v1h-4z"/><path id="g58" d="M0 -8h1v1h-1zM5 -8h1v1h-1zM0 -7h1v1h-1zM5 -7h1v1h-1zM1 -6h1v1h-1zM4 -6h1v1h-1zM2 -5h2v1h-2zM1 -4h1v1h-1zM4 -4h1v1h-1zM1 -3h1v1h-1zM4 -3h1v1h-1zM0 -2h1v1h-1zM5 -2h1v1h-1zM0 -1h1v1h-1zM5 -1h1v1h-1z"/><path id="g23" d="M1 -9h1v1h-1zM4 -9h1v1h-1zM1 -8h1v1h-1zM4 -8h1v1h-1zM0 -7h6v1h-6zM1 -6h1v1h-1zM4 -6h1v1h-1zM1 -5h1v1h-1zM4 -5h1v1h-1zM1 -4h1v1h-1zM4 -4h1v1h-1zM0 -3h6v1h-6zM1 -2h1v1h-1zM4 -2h1v1h-1zM1 -1h1v1h-1zM4 -1h1v1h-1z"/><path id="g4e95" d="M4 -10h1v1h-1zM7 -10h1v1h-1zM4 -9h1v1h-1zM7 -9h1v1h-1zM1 -8h10v1h-10zM4 -7h1v1h-1zM7 -7h1v1h-1zM4 -6h1v1h-1zM7 -6h1v1h-1zM4 -5h1v1h-1zM7 -5h1v1h-1zM1 -4h10v1h-10zM3 -3h1v1h-1zM7 -3h1v1h-1zM3 -2h1v1h-1zM7 -2h1v1h-1zM2 -1h1v1h-1zM7 -1h1v1h-1zM1 0h1v1h-1zM7 0h1v1h-1z"/><path id="g4e0a" d="M5 -10h1v1h-1zM5 -9h1v1h-1zM5 -8h1v1h-1zM5 -7h1v1h-1zM5 -6h5v1h-5zM5 -5h1v1h-1zM5 -4h1v1h-1zM5 -3h1v1h-1zM5 -2h1v1h-1zM5 -1h1v1h-1zM0 0h11v1h-11z"/><path id="g9ebb" d="M6 -10h1v1h-1zM1 -9h10v1h-10zM1 -8h1v1h-1zM4 -8h1v1h-1zM8 -8h1v1h-1zM1 -7h1v1h-1zM4 -7h1v1h-1zM8 -7h1v1h-1zM1 -6h10v1h-10zM1 -5h1v1h-1zM4 -5h1v1h-1zM8 -5h1v1h-1zM1 -4h1v1h-1zM3 -4h3v1h-3zM7 -4h3v1h-3zM1 -3h2v1h-2zM4 -3h1v1h-1zM6 -3h1v1h-1zM8 -3h2v1h-2zM1 -2h1v1h-1zM4 -2h2v1h-2zM8 -2h1v1h-1zM10 -2h1v1h-1zM0 -1h1v1h-1zM4 -1h1v1h-1zM8 -1h1v1h-1zM0 0h1v1h-1zM4 0h1v1h-1zM8 0h1v1h-1z"/><path id="g91cc" d="M1 -10h9v1h-9zM1 -9h1v1h-1zM5 -9h1v1h-1zM9 -9h1v1h-1zM1 -8h1v1h-1zM5 -8h1v1h-1zM9 -8h1v1h-1zM1 -7h9v1h-9zM1 -6h1v1h-1zM5 -6h1v1h-1zM9 -6h1v1h-1zM1 -5h1v1h-1zM5 -5h1v1h-1zM9 -5h1v1h-1zM1 -4h9v1h-9zM5 -3h1v1h-1zM1 -2h9v1h-9zM5 -1h1v1h-1zM0 0h11v1h-11z"/><path id="g8c4a" d="M4 -10h1v1h-1zM6 -10h1v1h-1zM1 -9h9v1h-9zM1 -8h1v1h-1zM4 -8h1v1h-1zM6 -8h1v1h-1zM9 -8h1v1h-1zM1 -7h9v1h-9zM1 -6h1v1h-1zM4 -6h1v1h-1zM6 -6h1v1h-1zM9 -6h1v1h-1zM0 -5h11v1h-11zM2 -4h1v1h-1zM8 -4h1v1h-1zM2 -3h7v1h-7zM3 -2h1v1h-1zM7 -2h1v1h-1zM4 -1h1v1h-1zM6 -1h1v1h-1zM0 0h11v1h-11z"/><path id="g53e3" d="M1 -9h9v1h-9zM1 -8h1v1h-1zM9 -8h1v1h-1zM1 -7h1v1h-1zM9 -7h1v1h-1zM1 -6h1v1h-1zM9 -6h1v1h-1zM1 -5h1v1h-1zM9 -5h1v1h-1zM1 -4h1v1h-1zM9 -4h1v1h-1zM1 -3h1v1h-1zM9 -3h1v1h-1zM1 -2h9v1h-9zM1 -1h1v1h-1zM9 -1h1v1h-1z"/><path id="g3081" d="M5 -10h1v1h-1zM6 -9h1v1h-1zM2 -8h1v1h-1zM5 -8h3v1h-3zM2 -7h1v1h-1zM4 -7h1v1h-1zM6 -7h1v1h-1zM8 -7h1v1h-1zM2 -6h2v1h-2zM6 -6h1v1h-1zM9 -6h1v1h-1zM2 -5h1v1h-1zM5 -5h1v1h-1zM10 -5h1v1h-1zM1 -4h1v1h-1zM3 -4h1v1h-1zM5 -4h1v1h-1zM10 -4h1v1h-1zM1 -3h1v1h-1zM4 -3h1v1h-1zM10 -3h1v1h-1zM1 -2h1v1h-1zM4 -2h1v1h-1zM9 -2h1v1h-1zM2 -1h2v1h-2zM8 -1h1v1h-1zM6 0h2v1h-2z"/><path id="g3050" d="M5 -10h1v1h-1zM6 -9h1v1h-1zM5 -8h1v1h-1zM7 -8h1v1h-1zM9 -8h1v1h-1zM4 -7h1v1h-1zM7 -7h1v1h-1zM9 -7h1v1h-1zM3 -6h1v1h-1zM2 -5h1v1h-1zM3 -4h1v1h-1zM4 -3h1v1h-1zM5 -2h1v1h-1zM6 -1h1v1h-1zM6 0h1v1h-1z"/><path id="g307f" d="M2 -10h1v1h-1zM6 -10h1v1h-1zM3 -9h4v1h-4zM5 -8h1v1h-1zM5 -7h1v1h-1zM5 -6h1v1h-1zM8 -6h1v1h-1zM3 -5h5v1h-5zM9 -5h1v1h-1zM2 -4h1v1h-1zM4 -4h1v1h-1zM8 -4h2v1h-2zM1 -3h1v1h-1zM4 -3h1v1h-1zM8 -3h1v1h-1zM10 -3h1v1h-1zM1 -2h1v1h-1zM3 -2h1v1h-1zM8 -2h1v1h-1zM2 -1h1v1h-1zM7 -1h1v1h-1zM6 0h1v1h-1z"/><path id="g80fd" d="M2 -10h1v1h-1zM7 -10h1v1h-1zM1 -9h1v1h-1zM4 -9h1v1h-1zM7 -9h1v1h-1zM9 -9h1v1h-1zM0 -8h6v1h-6zM7 -8h2v1h-2zM7 -7h1v1h-1zM10 -7h1v1h-1zM1 -6h5v1h-5zM7 -6h4v1h-4zM1 -5h1v1h-1zM5 -5h1v1h-1zM1 -4h5v1h-5zM7 -4h1v1h-1zM9 -4h1v1h-1zM1 -3h1v1h-1zM5 -3h1v1h-1zM7 -3h2v1h-2zM1 -2h5v1h-5zM7 -2h1v1h-1zM10 -2h1v1h-1zM1 -1h1v1h-1zM5 -1h1v1h-1zM7 -1h1v1h-1zM10 -1h1v1h-1zM1 0h1v1h-1zM4 0h2v1h-2zM7 0h4v1h-4z"/><path id="g767b" d="M1 -10h4v1h-4zM6 -10h1v1h-1zM9 -10h1v1h-1zM1 -9h1v1h-1zM4 -9h1v1h-1zM6 -9h1v1h-1zM8 -9h1v1h-1zM2 -8h1v1h-1zM4 -8h1v1h-1zM7 -8h1v1h-1zM9 -8h1v1h-1zM3 -7h1v1h-1zM8 -7h1v1h-1zM2 -6h8v1h-8zM0 -5h2v1h-2zM10 -5h1v1h-1zM3 -4h6v1h-6zM3 -3h1v1h-1zM8 -3h1v1h-1zM3 -2h6v1h-6zM4 -1h1v1h-1zM7 -1h1v1h-1zM0 0h11v1h-11z"/><path id="g7f8e" d="M3 -10h1v1h-1zM7 -10h1v1h-1zM1 -9h9v1h-9zM5 -8h1v1h-1zM2 -7h7v1h-7zM5 -6h1v1h-1zM0 -5h11v1h-11zM5 -4h1v1h-1zM1 -3h9v1h-9zM4 -2h1v1h-1zM6 -2h1v1h-1zM3 -1h1v1h-1zM7 -1h1v1h-1zM0 0h3v1h-3zM8 0h3v1h-3z"/><path id="g5b50" d="M2 -10h7v1h-7zM7 -9h1v1h-1zM6 -8h1v1h-1zM5 -7h1v1h-1zM5 -6h1v1h-1zM0 -5h11v1h-11zM5 -4h1v1h-1zM5 -3h1v1h-1zM5 -2h1v1h-1zM3 -1h1v1h-1zM5 -1h1v1h-1zM4 0h1v1h-1z"/><path id="g658e" d="M5 -10h1v1h-1zM0 -9h11v1h-11zM3 -8h1v1h-1zM7 -8h1v1h-1zM4 -7h3v1h-3zM2 -6h2v1h-2zM7 -6h2v1h-2zM0 -5h2v1h-2zM3 -5h5v1h-5zM9 -5h2v1h-2zM1 -4h1v1h-1zM9 -4h1v1h-1zM1 -3h9v1h-9zM1 -2h1v1h-1zM3 -2h1v1h-1zM5 -2h1v1h-1zM7 -2h1v1h-1zM9 -2h1v1h-1zM1 -1h2v1h-2zM5 -1h1v1h-1zM8 -1h2v1h-2zM0 0h1v1h-1zM4 0h2v1h-2zM9 0h1v1h-1z"/><path id="g8cc0" d="M2 -10h1v1h-1zM0 -9h5v1h-5zM6 -9h5v1h-5zM2 -8h1v1h-1zM4 -8h1v1h-1zM6 -8h1v1h-1zM10 -8h1v1h-1zM1 -7h1v1h-1zM4 -7h1v1h-1zM6 -7h5v1h-5zM0 -6h1v1h-1zM3 -6h1v1h-1zM2 -5h7v1h-7zM2 -4h1v1h-1zM8 -4h1v1h-1zM2 -3h7v1h-7zM2 -2h1v1h-1zM8 -2h1v1h-1zM2 -1h7v1h-7zM0 0h2v1h-2zM9 0h2v1h-2z"/><path id="g3064" d="M4 -8h4v1h-4zM0 -7h1v1h-1zM2 -7h2v1h-2zM8 -7h1v1h-1zM1 -6h1v1h-1zM9 -6h1v1h-1zM9 -5h1v1h-1zM8 -4h1v1h-1zM6 -3h2v1h-2zM4 -2h2v1h-2z"/><path id="g304d" d="M5 -10h1v1h-1zM5 -9h3v1h-3zM2 -8h4v1h-4zM6 -7h3v1h-3zM2 -6h5v1h-5zM7 -5h1v1h-1zM4 -4h3v1h-3zM8 -4h1v1h-1zM3 -3h1v1h-1zM7 -3h2v1h-2zM2 -2h1v1h-1zM3 -1h1v1h-1zM4 0h4v1h-4z"/><path id="g6843" d="M2 -10h1v1h-1zM6 -10h1v1h-1zM8 -10h1v1h-1zM2 -9h1v1h-1zM6 -9h1v1h-1zM8 -9h1v1h-1zM0 -8h5v1h-5zM6 -8h1v1h-1zM8 -8h1v1h-1zM10 -8h1v1h-1zM2 -7h1v1h-1zM5 -7h2v1h-2zM8 -7h2v1h-2zM2 -6h1v1h-1zM6 -6h1v1h-1zM8 -6h1v1h-1zM2 -5h2v1h-2zM5 -5h2v1h-2zM8 -5h2v1h-2zM1 -4h2v1h-2zM4 -4h1v1h-1zM6 -4h1v1h-1zM8 -4h1v1h-1zM10 -4h1v1h-1zM0 -3h1v1h-1zM2 -3h1v1h-1zM6 -3h1v1h-1zM8 -3h1v1h-1zM2 -2h1v1h-1zM6 -2h1v1h-1zM8 -2h1v1h-1zM10 -2h1v1h-1zM2 -1h1v1h-1zM5 -1h1v1h-1zM8 -1h1v1h-1zM10 -1h1v1h-1zM2 0h1v1h-1zM4 0h1v1h-1zM9 0h2v1h-2z"/><path id="g30bf" d="M4 -10h1v1h-1zM5 -9h1v1h-1zM5 -8h5v1h-5zM4 -7h1v1h-1zM9 -7h1v1h-1zM4 -6h1v1h-1zM8 -6h1v1h-1zM3 -5h1v1h-1zM5 -5h1v1h-1zM8 -5h1v1h-1zM2 -4h1v1h-1zM6 -4h2v1h-2zM6 -3h1v1h-1zM5 -2h1v1h-1zM3 -1h2v1h-2zM1 0h2v1h-2z"/><path id="g8ffd" d="M1 -10h1v1h-1zM6 -10h1v1h-1zM2 -9h1v1h-1zM5 -9h5v1h-5zM2 -8h1v1h-1zM5 -8h1v1h-1zM9 -8h1v1h-1zM5 -7h5v1h-5zM0 -6h3v1h-3zM5 -6h1v1h-1zM2 -5h1v1h-1zM5 -5h6v1h-6zM2 -4h1v1h-1zM5 -4h1v1h-1zM10 -4h1v1h-1zM2 -3h1v1h-1zM5 -3h1v1h-1zM10 -3h1v1h-1zM2 -2h1v1h-1zM5 -2h6v1h-6zM1 -1h1v1h-1zM3 -1h1v1h-1zM0 0h1v1h-1zM4 0h7v1h-7z"/><path id="g52a0" d="M2 -10h1v1h-1zM2 -9h1v1h-1zM0 -8h6v1h-6zM7 -8h4v1h-4zM2 -7h1v1h-1zM5 -7h1v1h-1zM7 -7h1v1h-1zM10 -7h1v1h-1zM2 -6h1v1h-1zM5 -6h1v1h-1zM7 -6h1v1h-1zM10 -6h1v1h-1zM2 -5h1v1h-1zM5 -5h1v1h-1zM7 -5h1v1h-1zM10 -5h1v1h-1zM2 -4h1v1h-1zM5 -4h1v1h-1zM7 -4h1v1h-1zM10 -4h1v1h-1zM2 -3h1v1h-1zM5 -3h1v1h-1zM7 -3h1v1h-1zM10 -3h1v1h-1zM1 -2h1v1h-1zM5 -2h1v1h-1zM7 -2h1v1h-1zM10 -2h1v1h-1zM1 -1h1v1h-1zM3 -1h1v1h-1zM5 -1h1v1h-1zM7 -1h4v1h-4zM0 0h1v1h-1zM4 0h1v1h-1zM7 0h1v1h-1zM10 0h1v1h-1z"/><path id="g524a" d="M0 -10h1v1h-1zM3 -10h1v1h-1zM6 -10h1v1h-1zM10 -10h1v1h-1zM1 -9h1v1h-1zM3 -9h1v1h-1zM5 -9h1v1h-1zM10 -9h1v1h-1zM3 -8h1v1h-1zM8 -8h1v1h-1zM10 -8h1v1h-1zM1 -7h5v1h-5zM8 -7h1v1h-1zM10 -7h1v1h-1zM1 -6h1v1h-1zM5 -6h1v1h-1zM8 -6h1v1h-1zM10 -6h1v1h-1zM1 -5h5v1h-5zM8 -5h1v1h-1zM10 -5h1v1h-1zM1 -4h1v1h-1zM5 -4h1v1h-1zM8 -4h1v1h-1zM10 -4h1v1h-1zM1 -3h5v1h-5zM8 -3h1v1h-1zM10 -3h1v1h-1zM1 -2h1v1h-1zM5 -2h1v1h-1zM10 -2h1v1h-1zM1 -1h1v1h-1zM5 -1h1v1h-1zM10 -1h1v1h-1zM1 0h1v1h-1zM4 0h2v1h-2zM8 0h3v1h-3z"/><path id="g9664" d="M0 -10h4v1h-4zM7 -10h1v1h-1zM0 -9h1v1h-1zM3 -9h1v1h-1zM6 -9h1v1h-1zM8 -9h1v1h-1zM0 -8h1v1h-1zM2 -8h1v1h-1zM5 -8h1v1h-1zM9 -8h1v1h-1zM0 -7h2v1h-2zM4 -7h1v1h-1zM6 -7h3v1h-3zM10 -7h1v1h-1zM0 -6h1v1h-1zM2 -6h1v1h-1zM7 -6h1v1h-1zM0 -5h1v1h-1zM3 -5h8v1h-8zM0 -4h1v1h-1zM3 -4h1v1h-1zM7 -4h1v1h-1zM0 -3h3v1h-3zM5 -3h1v1h-1zM7 -3h1v1h-1zM9 -3h1v1h-1zM0 -2h1v1h-1zM4 -2h1v1h-1zM7 -2h1v1h-1zM10 -2h1v1h-1zM0 -1h1v1h-1zM3 -1h1v1h-1zM7 -1h1v1h-1zM10 -1h1v1h-1zM0 0h1v1h-1zM6 0h2v1h-2z"/><path id="g7de8" d="M2 -10h1v1h-1zM7 -10h1v1h-1zM2 -9h1v1h-1zM4 -9h7v1h-7zM1 -8h1v1h-1zM3 -8h2v1h-2zM10 -8h1v1h-1zM0 -7h11v1h-11zM2 -6h1v1h-1zM4 -6h1v1h-1zM1 -5h1v1h-1zM3 -5h8v1h-8zM0 -4h3v1h-3zM4 -4h1v1h-1zM6 -4h1v1h-1zM8 -4h1v1h-1zM10 -4h1v1h-1zM4 -3h7v1h-7zM1 -2h1v1h-1zM3 -2h2v1h-2zM6 -2h1v1h-1zM8 -2h1v1h-1zM10 -2h1v1h-1zM0 -1h1v1h-1zM2 -1h1v1h-1zM4 -1h1v1h-1zM6 -1h1v1h-1zM8 -1h1v1h-1zM10 -1h1v1h-1zM0 0h1v1h-1zM2 0h1v1h-1zM4 0h1v1h-1zM6 0h1v1h-1zM9 0h2v1h-2z"/><path id="g518d" d="M0 -10h11v1h-11zM5 -9h1v1h-1zM2 -8h7v1h-7zM2 -7h1v1h-1zM5 -7h1v1h-1zM8 -7h1v1h-1zM2 -6h7v1h-7zM2 -5h1v1h-1zM5 -5h1v1h-1zM8 -5h1v1h-1zM2 -4h1v1h-1zM5 -4h1v1h-1zM8 -4h1v1h-1zM0 -3h11v1h-11zM2 -2h1v1h-1zM8 -2h1v1h-1zM2 -1h1v1h-1zM8 -1h1v1h-1zM2 0h1v1h-1zM7 0h2v1h-2z"/><path id="g8aad" d="M1 -10h1v1h-1zM7 -10h1v1h-1zM2 -9h1v1h-1zM5 -9h5v1h-5zM0 -8h5v1h-5zM7 -8h1v1h-1zM6 -7h3v1h-3zM1 -6h3v1h-3zM4 -5h7v1h-7zM1 -4h4v1h-4zM10 -4h1v1h-1zM6 -3h1v1h-1zM8 -3h1v1h-1zM1 -2h3v1h-3zM6 -2h1v1h-1zM8 -2h1v1h-1zM1 -1h1v1h-1zM3 -1h1v1h-1zM5 -1h1v1h-1zM8 -1h1v1h-1zM10 -1h1v1h-1zM1 0h4v1h-4zM8 0h3v1h-3z"/><path id="g672a" d="M5 -10h1v1h-1zM5 -9h1v1h-1zM1 -8h9v1h-9zM5 -7h1v1h-1zM0 -6h11v1h-11zM5 -5h1v1h-1zM4 -4h3v1h-3zM3 -3h1v1h-1zM5 -3h1v1h-1zM7 -3h1v1h-1zM2 -2h1v1h-1zM5 -2h1v1h-1zM8 -2h1v1h-1zM0 -1h2v1h-2zM5 -1h1v1h-1zM9 -1h2v1h-2zM5 0h1v1h-1z"/><path id="g5909" d="M5 -10h1v1h-1zM0 -9h11v1h-11zM4 -8h1v1h-1zM7 -8h1v1h-1zM2 -7h1v1h-1zM4 -7h1v1h-1zM7 -7h1v1h-1zM9 -7h1v1h-1zM0 -6h2v1h-2zM3 -6h1v1h-1zM6 -6h2v1h-2zM10 -6h1v1h-1zM2 -5h1v1h-1zM4 -5h1v1h-1zM3 -4h6v1h-6zM2 -3h1v1h-1zM4 -3h1v1h-1zM7 -3h1v1h-1zM1 -2h1v1h-1zM5 -2h2v1h-2zM4 -1h1v1h-1zM7 -1h1v1h-1zM0 0h4v1h-4zM8 0h3v1h-3z"/><path id="g63db" d="M2 -10h1v1h-1zM6 -10h1v1h-1zM2 -9h1v1h-1zM6 -9h4v1h-4zM0 -8h4v1h-4zM5 -8h1v1h-1zM8 -8h1v1h-1zM2 -7h1v1h-1zM4 -7h7v1h-7zM2 -6h1v1h-1zM4 -6h1v1h-1zM6 -6h1v1h-1zM8 -6h1v1h-1zM10 -6h1v1h-1zM2 -5h3v1h-3zM6 -5h1v1h-1zM8 -5h1v1h-1zM10 -5h1v1h-1zM1 -4h2v1h-2zM4 -4h2v1h-2zM9 -4h2v1h-2zM0 -3h1v1h-1zM2 -3h1v1h-1zM7 -3h1v1h-1zM2 -2h1v1h-1zM4 -2h7v1h-7zM2 -1h1v1h-1zM6 -1h1v1h-1zM8 -1h1v1h-1zM0 0h3v1h-3zM4 0h2v1h-2zM9 0h2v1h-2z"/><path id="g30c1" d="M7 -10h1v1h-1zM5 -9h2v1h-2zM2 -8h4v1h-4zM6 -7h1v1h-1zM0 -6h1v1h-1zM5 -6h6v1h-6zM1 -5h4v1h-4zM6 -5h1v1h-1zM6 -4h1v1h-1zM6 -3h1v1h-1zM5 -2h1v1h-1zM5 -1h1v1h-1zM4 0h1v1h-1z"/><path id="g30a7" d="M6 -5h2v1h-2zM3 -4h3v1h-3zM5 -3h1v1h-1zM5 -2h3v1h-3zM2 -1h4v1h-4zM8 -1h1v1h-1z"/><path id="g30ef" d="M1 -8h1v1h-1zM6 -8h4v1h-4zM2 -7h4v1h-4zM9 -7h1v1h-1zM2 -6h1v1h-1zM9 -6h1v1h-1zM2 -5h1v1h-1zM9 -5h1v1h-1zM8 -4h1v1h-1zM8 -3h1v1h-1zM7 -2h1v1h-1zM6 -1h1v1h-1zM4 0h2v1h-2z"/><path id="g30cf" d="M3 -7h1v1h-1zM7 -7h1v1h-1zM4 -6h1v1h-1zM8 -6h1v1h-1zM3 -5h1v1h-1zM9 -5h1v1h-1zM3 -4h1v1h-1zM9 -4h1v1h-1zM2 -3h1v1h-1zM10 -3h1v1h-1zM1 -2h1v1h-1zM10 -2h1v1h-1zM0 -1h1v1h-1zM10 -1h1v1h-1z"/><path id="g5236" d="M3 -10h1v1h-1zM10 -10h1v1h-1zM1 -9h1v1h-1zM3 -9h1v1h-1zM8 -9h1v1h-1zM10 -9h1v1h-1zM1 -8h6v1h-6zM8 -8h1v1h-1zM10 -8h1v1h-1zM0 -7h1v1h-1zM3 -7h1v1h-1zM8 -7h1v1h-1zM10 -7h1v1h-1zM0 -6h7v1h-7zM8 -6h1v1h-1zM10 -6h1v1h-1zM3 -5h1v1h-1zM8 -5h1v1h-1zM10 -5h1v1h-1zM1 -4h6v1h-6zM8 -4h1v1h-1zM10 -4h1v1h-1zM1 -3h1v1h-1zM3 -3h1v1h-1zM6 -3h1v1h-1zM8 -3h1v1h-1zM10 -3h1v1h-1zM1 -2h1v1h-1zM3 -2h1v1h-1zM6 -2h1v1h-1zM10 -2h1v1h-1zM1 -1h1v1h-1zM3 -1h1v1h-1zM5 -1h2v1h-2zM10 -1h1v1h-1zM3 0h1v1h-1zM8 0h3v1h-3z"/><path id="g9650" d="M0 -10h4v1h-4zM5 -10h5v1h-5zM0 -9h1v1h-1zM3 -9h1v1h-1zM5 -9h1v1h-1zM9 -9h1v1h-1zM0 -8h1v1h-1zM2 -8h1v1h-1zM5 -8h5v1h-5zM0 -7h2v1h-2zM5 -7h1v1h-1zM9 -7h1v1h-1zM0 -6h1v1h-1zM2 -6h1v1h-1zM5 -6h5v1h-5zM0 -5h1v1h-1zM3 -5h1v1h-1zM5 -5h1v1h-1zM7 -5h1v1h-1zM0 -4h1v1h-1zM3 -4h1v1h-1zM5 -4h1v1h-1zM7 -4h1v1h-1zM10 -4h1v1h-1zM0 -3h2v1h-2zM3 -3h1v1h-1zM5 -3h1v1h-1zM7 -3h1v1h-1zM9 -3h1v1h-1zM0 -2h1v1h-1zM2 -2h1v1h-1zM5 -2h1v1h-1zM8 -2h1v1h-1zM0 -1h1v1h-1zM5 -1h1v1h-1zM7 -1h1v1h-1zM9 -1h1v1h-1zM0 0h1v1h-1zM5 0h2v1h-2zM10 0h1v1h-1z"/><path id="g30d2" d="M1 -9h1v1h-1zM2 -8h1v1h-1zM2 -7h1v1h-1zM2 -6h1v1h-1zM6 -6h3v1h-3zM2 -5h4v1h-4zM2 -4h1v1h-1zM2 -3h1v1h-1zM2 -2h1v1h-1zM3 -1h7v1h-7z"/><path id="g6570" d="M0 -10h1v1h-1zM3 -10h1v1h-1zM5 -10h1v1h-1zM7 -10h1v1h-1zM1 -9h1v1h-1zM3 -9h2v1h-2zM7 -9h1v1h-1zM0 -8h6v1h-6zM7 -8h4v1h-4zM2 -7h2v1h-2zM6 -7h2v1h-2zM9 -7h1v1h-1zM1 -6h1v1h-1zM3 -6h2v1h-2zM7 -6h1v1h-1zM9 -6h1v1h-1zM0 -5h1v1h-1zM3 -5h1v1h-1zM5 -5h1v1h-1zM7 -5h1v1h-1zM9 -5h1v1h-1zM0 -4h6v1h-6zM7 -4h1v1h-1zM9 -4h1v1h-1zM2 -3h1v1h-1zM4 -3h1v1h-1zM7 -3h1v1h-1zM9 -3h1v1h-1zM1 -2h2v1h-2zM4 -2h1v1h-1zM8 -2h1v1h-1zM3 -1h1v1h-1zM7 -1h1v1h-1zM9 -1h1v1h-1zM0 0h3v1h-3zM4 0h3v1h-3zM10 0h1v1h-1z"/><path id="g9032" d="M1 -10h1v1h-1zM6 -10h2v1h-2zM2 -9h1v1h-1zM5 -9h1v1h-1zM8 -9h1v1h-1zM2 -8h1v1h-1zM5 -8h6v1h-6zM4 -7h2v1h-2zM8 -7h1v1h-1zM0 -6h4v1h-4zM5 -6h6v1h-6zM2 -5h1v1h-1zM5 -5h1v1h-1zM8 -5h1v1h-1zM2 -4h1v1h-1zM5 -4h6v1h-6zM2 -3h1v1h-1zM5 -3h1v1h-1zM8 -3h1v1h-1zM2 -2h1v1h-1zM5 -2h6v1h-6zM1 -1h1v1h-1zM3 -1h1v1h-1zM5 -1h1v1h-1zM0 0h1v1h-1zM4 0h7v1h-7z"/><path id="g884c" d="M2 -10h1v1h-1zM5 -10h5v1h-5zM1 -9h1v1h-1zM0 -8h1v1h-1zM3 -7h1v1h-1zM2 -6h1v1h-1zM4 -6h7v1h-7zM1 -5h2v1h-2zM8 -5h1v1h-1zM0 -4h1v1h-1zM2 -4h1v1h-1zM8 -4h1v1h-1zM2 -3h1v1h-1zM8 -3h1v1h-1zM2 -2h1v1h-1zM8 -2h1v1h-1zM2 -1h1v1h-1zM8 -1h1v1h-1zM2 0h1v1h-1zM6 0h3v1h-3z"/><path id="g6cc1" d="M1 -10h1v1h-1zM4 -10h6v1h-6zM2 -9h1v1h-1zM4 -9h1v1h-1zM9 -9h1v1h-1zM0 -8h1v1h-1zM4 -8h1v1h-1zM9 -8h1v1h-1zM1 -7h1v1h-1zM3 -7h2v1h-2zM9 -7h1v1h-1zM3 -6h7v1h-7zM2 -5h1v1h-1zM5 -5h1v1h-1zM7 -5h1v1h-1zM2 -4h1v1h-1zM5 -4h1v1h-1zM7 -4h1v1h-1zM0 -3h2v1h-2zM5 -3h1v1h-1zM7 -3h1v1h-1zM1 -2h1v1h-1zM4 -2h1v1h-1zM7 -2h1v1h-1zM10 -2h1v1h-1zM1 -1h1v1h-1zM4 -1h1v1h-1zM7 -1h1v1h-1zM10 -1h1v1h-1zM1 0h1v1h-1zM3 0h1v1h-1zM8 0h3v1h-3z"/><path id="g6b8b" d="M7 -10h2v1h-2zM0 -9h5v1h-5zM7 -9h1v1h-1zM9 -9h1v1h-1zM2 -8h1v1h-1zM5 -8h6v1h-6zM2 -7h1v1h-1zM7 -7h1v1h-1zM1 -6h4v1h-4zM7 -6h1v1h-1zM1 -5h1v1h-1zM4 -5h7v1h-7zM0 -4h1v1h-1zM2 -4h1v1h-1zM4 -4h1v1h-1zM7 -4h1v1h-1zM3 -3h1v1h-1zM7 -3h1v1h-1zM9 -3h1v1h-1zM3 -2h1v1h-1zM8 -2h1v1h-1zM10 -2h1v1h-1zM2 -1h1v1h-1zM7 -1h1v1h-1zM9 -1h2v1h-2zM0 0h2v1h-2zM5 0h2v1h-2zM10 0h1v1h-1z"/><path id="g308a" d="M2 -10h1v1h-1zM6 -10h1v1h-1zM3 -9h1v1h-1zM5 -9h1v1h-1zM7 -9h1v1h-1zM3 -8h1v1h-1zM5 -8h1v1h-1zM8 -8h1v1h-1zM3 -7h2v1h-2zM8 -7h1v1h-1zM3 -6h2v1h-2zM8 -6h1v1h-1zM3 -5h1v1h-1zM8 -5h1v1h-1zM3 -4h1v1h-1zM8 -4h1v1h-1zM7 -3h1v1h-1zM7 -2h1v1h-1zM6 -1h1v1h-1zM5 0h1v1h-1z"/><path id="g9593" d="M0 -10h5v1h-5zM6 -10h5v1h-5zM0 -9h1v1h-1zM4 -9h1v1h-1zM6 -9h1v1h-1zM10 -9h1v1h-1zM0 -8h5v1h-5zM6 -8h5v1h-5zM0 -7h1v1h-1zM4 -7h1v1h-1zM6 -7h1v1h-1zM10 -7h1v1h-1zM0 -6h5v1h-5zM6 -6h5v1h-5zM0 -5h1v1h-1zM3 -5h5v1h-5zM10 -5h1v1h-1zM0 -4h1v1h-1zM3 -4h1v1h-1zM7 -4h1v1h-1zM10 -4h1v1h-1zM0 -3h1v1h-1zM3 -3h5v1h-5zM10 -3h1v1h-1zM0 -2h1v1h-1zM3 -2h1v1h-1zM7 -2h1v1h-1zM10 -2h1v1h-1zM0 -1h1v1h-1zM3 -1h5v1h-5zM10 -1h1v1h-1zM0 0h1v1h-1zM8 0h3v1h-3z"/><path id="g8ee2" d="M2 -10h1v1h-1zM0 -9h5v1h-5zM6 -9h4v1h-4zM2 -8h1v1h-1zM0 -7h5v1h-5zM0 -6h1v1h-1zM2 -6h1v1h-1zM4 -6h7v1h-7zM0 -5h5v1h-5zM7 -5h1v1h-1zM0 -4h1v1h-1zM2 -4h1v1h-1zM4 -4h1v1h-1zM6 -4h1v1h-1zM0 -3h5v1h-5zM6 -3h1v1h-1zM9 -3h1v1h-1zM2 -2h1v1h-1zM5 -2h1v1h-1zM10 -2h1v1h-1zM0 -1h11v1h-11zM2 0h1v1h-1zM10 0h1v1h-1z"/><path id="g30ec" d="M1 -9h1v1h-1zM2 -8h1v1h-1zM2 -7h1v1h-1zM2 -6h1v1h-1zM2 -5h1v1h-1zM2 -4h1v1h-1zM8 -4h1v1h-1zM2 -3h1v1h-1zM7 -3h1v1h-1zM2 -2h1v1h-1zM6 -2h1v1h-1zM2 -1h1v1h-1zM4 -1h2v1h-2zM2 0h2v1h-2z"/><path id="g66" d="M1 -8h2v1h-2zM0 -7h1v1h-1zM0 -6h3v1h-3zM0 -5h1v1h-1zM0 -4h1v1h-1zM0 -3h1v1h-1zM0 -2h1v1h-1zM0 -1h1v1h-1z"/><path id="g301c" d="M6 -6h4v1h-4zM0 -5h1v1h-1zM5 -5h1v1h-1zM10 -5h1v1h-1zM1 -4h4v1h-4z"/><path id="g7269" d="M2 -10h1v1h-1zM6 -10h1v1h-1zM0 -9h1v1h-1zM2 -9h1v1h-1zM6 -9h1v1h-1zM0 -8h1v1h-1zM2 -8h1v1h-1zM5 -8h6v1h-6zM0 -7h5v1h-5zM6 -7h1v1h-1zM8 -7h1v1h-1zM10 -7h1v1h-1zM0 -6h1v1h-1zM2 -6h1v1h-1zM6 -6h1v1h-1zM8 -6h1v1h-1zM10 -6h1v1h-1zM2 -5h2v1h-2zM6 -5h1v1h-1zM8 -5h1v1h-1zM10 -5h1v1h-1zM1 -4h2v1h-2zM5 -4h1v1h-1zM8 -4h1v1h-1zM10 -4h1v1h-1zM0 -3h1v1h-1zM2 -3h1v1h-1zM4 -3h1v1h-1zM7 -3h1v1h-1zM10 -3h1v1h-1zM2 -2h1v1h-1zM6 -2h1v1h-1zM10 -2h1v1h-1zM2 -1h1v1h-1zM5 -1h1v1h-1zM7 -1h1v1h-1zM10 -1h1v1h-1zM2 0h1v1h-1zM4 0h1v1h-1zM8 0h2v1h-2z"/><path id="g63a2" d="M2 -10h1v1h-1zM4 -10h7v1h-7zM2 -9h1v1h-1zM4 -9h1v1h-1zM10 -9h1v1h-1zM0 -8h4v1h-4zM6 -8h1v1h-1zM8 -8h1v1h-1zM2 -7h1v1h-1zM5 -7h1v1h-1zM9 -7h1v1h-1zM2 -6h1v1h-1zM4 -6h1v1h-1zM7 -6h1v1h-1zM10 -6h1v1h-1zM2 -5h2v1h-2zM7 -5h1v1h-1zM1 -4h2v1h-2zM4 -4h7v1h-7zM0 -3h1v1h-1zM2 -3h1v1h-1zM7 -3h1v1h-1zM2 -2h1v1h-1zM5 -2h1v1h-1zM7 -2h2v1h-2zM2 -1h1v1h-1zM4 -1h1v1h-1zM7 -1h1v1h-1zM9 -1h1v1h-1zM0 0h4v1h-4zM7 0h1v1h-1zM10 0h1v1h-1z"/><path id="g4e2d" d="M5 -10h1v1h-1zM5 -9h1v1h-1zM1 -8h9v1h-9zM1 -7h1v1h-1zM5 -7h1v1h-1zM9 -7h1v1h-1zM1 -6h1v1h-1zM5 -6h1v1h-1zM9 -6h1v1h-1zM1 -5h1v1h-1zM5 -5h1v1h-1zM9 -5h1v1h-1zM1 -4h9v1h-9zM1 -3h1v1h-1zM5 -3h1v1h-1zM9 -3h1v1h-1zM5 -2h1v1h-1zM5 -1h1v1h-1zM5 0h1v1h-1z"/><path id="g25" d="M1 -8h1v1h-1zM4 -8h1v1h-1zM0 -7h1v1h-1zM2 -7h1v1h-1zM4 -7h1v1h-1zM0 -6h1v1h-1zM2 -6h2v1h-2zM1 -5h1v1h-1zM3 -5h1v1h-1zM2 -4h1v1h-1zM2 -3h1v1h-1zM4 -3h1v1h-1zM1 -2h1v1h-1zM3 -2h1v1h-1zM5 -2h1v1h-1zM1 -1h1v1h-1zM3 -1h1v1h-1zM5 -1h1v1h-1zM0 0h1v1h-1zM4 0h1v1h-1z"/></defs></svg>
<div class="a" style="left:0px;top:0px;width:1022px;height:737px;background:#e0dfe3"></div>
<div class="a" style="left:0px;top:29px;width:1px;height:708px;background:#585874"></div>
<div class="a" style="left:1px;top:29px;width:1px;height:708px;background:#f4f4fc"></div>
<div class="a" style="left:2px;top:29px;width:1px;height:708px;background:#a8a8c0"></div>
<div class="a" style="left:3px;top:29px;width:1px;height:708px;background:#707088"></div>
<div class="a" style="left:1017px;top:29px;width:1px;height:708px;background:#ffffff"></div>
<div class="a" style="left:1018px;top:29px;width:1px;height:708px;background:#70708a"></div>
<div class="a" style="left:1019px;top:29px;width:1px;height:708px;background:#b0b0c8"></div>
<div class="a" style="left:1020px;top:29px;width:1px;height:708px;background:#f8f8ff"></div>
<div class="a" style="left:1021px;top:29px;width:1px;height:708px;background:#686880"></div>
<div class="a" style="left:0px;top:733px;width:1022px;height:1px;background:#606080"></div>
<div class="a" style="left:0px;top:734px;width:1022px;height:1px;background:#b0b0c0"></div>
<div class="a" style="left:0px;top:735px;width:1022px;height:1px;background:#ffffff"></div>
<div class="a" style="left:0px;top:736px;width:1022px;height:1px;background:#686880"></div>
<div class="a" style="left:0;top:0;width:1022px;height:30px;background:#fff"></div>
<div class="a" style="left:0;top:0;width:1022px;height:30px;border-radius:8px 8px 0 0;overflow:hidden;background:linear-gradient(to bottom,#5a5a78 0px,#6a6a88 1px,#ffffff 2px,#f6f6fa 3px,#d8d8e6 4px,#a8a8c4 6px,#a8a8c4 7px,#b6b6ca 11px,#c8cad8 16px,#e2e2ec 21px,#fafafc 25px,#ffffff 27px,#c8c8d6 28px,#707090 29px,#707090 30px)"></div>
<div class="a" style="left:0;top:0;width:1022px;height:31px;border-radius:8px 8px 0 0;border:1px solid #5a5a78;border-bottom:none;box-shadow:inset 1px 0 0 #f0f0f8,inset -1px 0 0 #c0c0d0"></div>
<svg class="a" style="left:6px;top:8px" width="16" height="16" shape-rendering="crispEdges"><rect x="0" y="0" width="1" height="1" fill="#4060e8"/><rect x="1" y="0" width="1" height="1" fill="#4060e8"/><rect x="2" y="0" width="1" height="1" fill="#2040d8"/><rect x="3" y="0" width="1" height="1" fill="#5070f0"/><rect x="4" y="0" width="1" height="1" fill="#2040d8"/><rect x="5" y="0" width="1" height="1" fill="#8c78d0"/><rect x="6" y="0" width="1" height="1" fill="#c0b0f0"/><rect x="7" y="0" width="1" height="1" fill="#9c84d8"/><rect x="8" y="0" width="1" height="1" fill="#9c84d8"/><rect x="9" y="0" width="1" height="1" fill="#2040d8"/><rect x="10" y="0" width="1" height="1" fill="#2850e8"/><rect x="11" y="0" width="1" height="1" fill="#2850e8"/><rect x="12" y="0" width="1" height="1" fill="#4060e8"/><rect x="13" y="0" width="1" height="1" fill="#5070f0"/><rect x="14" y="0" width="1" height="1" fill="#3060f0"/><rect x="15" y="0" width="1" height="1" fill="#2040d8"/><rect x="0" y="1" width="1" height="1" fill="#3060f0"/><rect x="1" y="1" width="1" height="1" fill="#3060f0"/><rect x="2" y="1" width="1" height="1" fill="#c0b0f0"/><rect x="3" y="1" width="1" height="1" fill="#9c84d8"/><rect x="4" y="1" width="1" height="1" fill="#5070f0"/><rect x="5" y="1" width="1" height="1" fill="#b8a0e8"/><rect x="6" y="1" width="1" height="1" fill="#2040d8"/><rect x="7" y="1" width="1" height="1" fill="#3060f0"/><rect x="8" y="1" width="1" height="1" fill="#c0b0f0"/><rect x="9" y="1" width="1" height="1" fill="#c0b0f0"/><rect x="10" y="1" width="1" height="1" fill="#b8a0e8"/><rect x="11" y="1" width="1" height="1" fill="#2850e8"/><rect x="12" y="1" width="1" height="1" fill="#2040d8"/><rect x="13" y="1" width="1" height="1" fill="#2850e8"/><rect x="14" y="1" width="1" height="1" fill="#3060f0"/><rect x="15" y="1" width="1" height="1" fill="#2040d8"/><rect x="0" y="2" width="1" height="1" fill="#2040d8"/><rect x="1" y="2" width="1" height="1" fill="#c0b0f0"/><rect x="2" y="2" width="1" height="1" fill="#a890e0"/><rect x="3" y="2" width="1" height="1" fill="#8c78d0"/><rect x="4" y="2" width="1" height="1" fill="#a890e0"/><rect x="5" y="2" width="1" height="1" fill="#9c84d8"/><rect x="6" y="2" width="1" height="1" fill="#8c78d0"/><rect x="7" y="2" width="1" height="1" fill="#2850e8"/><rect x="8" y="2" width="1" height="1" fill="#a890e0"/><rect x="9" y="2" width="1" height="1" fill="#c0b0f0"/><rect x="10" y="2" width="1" height="1" fill="#b8a0e8"/><rect x="11" y="2" width="1" height="1" fill="#a890e0"/><rect x="12" y="2" width="1" height="1" fill="#2850e8"/><rect x="13" y="2" width="1" height="1" fill="#4060e8"/><rect x="14" y="2" width="1" height="1" fill="#5070f0"/><rect x="15" y="2" width="1" height="1" fill="#3060f0"/><rect x="0" y="3" width="1" height="1" fill="#2850e8"/><rect x="1" y="3" width="1" height="1" fill="#b8a0e8"/><rect x="2" y="3" width="1" height="1" fill="#9c84d8"/><rect x="3" y="3" width="1" height="1" fill="#3060f0"/><rect x="4" y="3" width="1" height="1" fill="#2040d8"/><rect x="5" y="3" width="1" height="1" fill="#a890e0"/><rect x="6" y="3" width="1" height="1" fill="#c0b0f0"/><rect x="7" y="3" width="1" height="1" fill="#9c84d8"/><rect x="8" y="3" width="1" height="1" fill="#3060f0"/><rect x="9" y="3" width="1" height="1" fill="#c0b0f0"/><rect x="10" y="3" width="1" height="1" fill="#8c78d0"/><rect x="11" y="3" width="1" height="1" fill="#3060f0"/><rect x="12" y="3" width="1" height="1" fill="#2040d8"/><rect x="13" y="3" width="1" height="1" fill="#4060e8"/><rect x="14" y="3" width="1" height="1" fill="#3060f0"/><rect x="15" y="3" width="1" height="1" fill="#3060f0"/><rect x="0" y="4" width="1" height="1" fill="#3060f0"/><rect x="1" y="4" width="1" height="1" fill="#a890e0"/><rect x="2" y="4" width="1" height="1" fill="#a890e0"/><rect x="3" y="4" width="1" height="1" fill="#3060f0"/><rect x="4" y="4" width="1" height="1" fill="#c0b0f0"/><rect x="5" y="4" width="1" height="1" fill="#b8a0e8"/><rect x="6" y="4" width="1" height="1" fill="#b8a0e8"/><rect x="7" y="4" width="1" height="1" fill="#3060f0"/><rect x="8" y="4" width="1" height="1" fill="#a890e0"/><rect x="9" y="4" width="1" height="1" fill="#2850e8"/><rect x="10" y="4" width="1" height="1" fill="#9c84d8"/><rect x="11" y="4" width="1" height="1" fill="#b8a0e8"/><rect x="12" y="4" width="1" height="1" fill="#5070f0"/><rect x="13" y="4" width="1" height="1" fill="#2040d8"/><rect x="14" y="4" width="1" height="1" fill="#2850e8"/><rect x="15" y="4" width="1" height="1" fill="#3060f0"/><rect x="0" y="5" width="1" height="1" fill="#2850e8"/><rect x="1" y="5" width="1" height="1" fill="#9c84d8"/><rect x="2" y="5" width="1" height="1" fill="#9c84d8"/><rect x="3" y="5" width="1" height="1" fill="#2850e8"/><rect x="4" y="5" width="1" height="1" fill="#5070f0"/><rect x="5" y="5" width="1" height="1" fill="#c0b0f0"/><rect x="6" y="5" width="1" height="1" fill="#b8a0e8"/><rect x="7" y="5" width="1" height="1" fill="#a890e0"/><rect x="8" y="5" width="1" height="1" fill="#2850e8"/><rect x="9" y="5" width="1" height="1" fill="#c0b0f0"/><rect x="10" y="5" width="1" height="1" fill="#3060f0"/><rect x="11" y="5" width="1" height="1" fill="#b8a0e8"/><rect x="12" y="5" width="1" height="1" fill="#3060f0"/><rect x="13" y="5" width="1" height="1" fill="#7060d8"/><rect x="14" y="5" width="1" height="1" fill="#5070f0"/><rect x="15" y="5" width="1" height="1" fill="#2040d8"/><rect x="0" y="6" width="1" height="1" fill="#3060f0"/><rect x="1" y="6" width="1" height="1" fill="#9c84d8"/><rect x="2" y="6" width="1" height="1" fill="#8c78d0"/><rect x="3" y="6" width="1" height="1" fill="#2040d8"/><rect x="4" y="6" width="1" height="1" fill="#2850e8"/><rect x="5" y="6" width="1" height="1" fill="#3060f0"/><rect x="6" y="6" width="1" height="1" fill="#9c84d8"/><rect x="7" y="6" width="1" height="1" fill="#c0b0f0"/><rect x="8" y="6" width="1" height="1" fill="#3060f0"/><rect x="9" y="6" width="1" height="1" fill="#a890e0"/><rect x="10" y="6" width="1" height="1" fill="#a890e0"/><rect x="11" y="6" width="1" height="1" fill="#b8a0e8"/><rect x="12" y="6" width="1" height="1" fill="#5070f0"/><rect x="13" y="6" width="1" height="1" fill="#3060f0"/><rect x="14" y="6" width="1" height="1" fill="#4060e8"/><rect x="15" y="6" width="1" height="1" fill="#5070f0"/><rect x="0" y="7" width="1" height="1" fill="#2040d8"/><rect x="1" y="7" width="1" height="1" fill="#2850e8"/><rect x="2" y="7" width="1" height="1" fill="#9c84d8"/><rect x="3" y="7" width="1" height="1" fill="#a890e0"/><rect x="4" y="7" width="1" height="1" fill="#b8a0e8"/><rect x="5" y="7" width="1" height="1" fill="#2850e8"/><rect x="6" y="7" width="1" height="1" fill="#c0b0f0"/><rect x="7" y="7" width="1" height="1" fill="#7060d8"/><rect x="8" y="7" width="1" height="1" fill="#c0b0f0"/><rect x="9" y="7" width="1" height="1" fill="#8c78d0"/><rect x="10" y="7" width="1" height="1" fill="#b8a0e8"/><rect x="11" y="7" width="1" height="1" fill="#2850e8"/><rect x="12" y="7" width="1" height="1" fill="#2850e8"/><rect x="13" y="7" width="1" height="1" fill="#5070f0"/><rect x="14" y="7" width="1" height="1" fill="#5070f0"/><rect x="15" y="7" width="1" height="1" fill="#2850e8"/><rect x="0" y="8" width="1" height="1" fill="#3060f0"/><rect x="1" y="8" width="1" height="1" fill="#3060f0"/><rect x="2" y="8" width="1" height="1" fill="#7060d8"/><rect x="3" y="8" width="1" height="1" fill="#2040d8"/><rect x="4" y="8" width="1" height="1" fill="#b8a0e8"/><rect x="5" y="8" width="1" height="1" fill="#b8a0e8"/><rect x="6" y="8" width="1" height="1" fill="#9c84d8"/><rect x="9" y="8" width="1" height="1" fill="#2040d8"/><rect x="10" y="8" width="1" height="1" fill="#2040d8"/><rect x="11" y="8" width="1" height="1" fill="#2850e8"/><rect x="13" y="8" width="1" height="1" fill="#4060e8"/><rect x="14" y="8" width="1" height="1" fill="#2040d8"/><rect x="15" y="8" width="1" height="1" fill="#2040d8"/><rect x="0" y="9" width="1" height="1" fill="#2850e8"/><rect x="1" y="9" width="1" height="1" fill="#4060e8"/><rect x="2" y="9" width="1" height="1" fill="#2040d8"/><rect x="3" y="9" width="1" height="1" fill="#7060d8"/><rect x="5" y="9" width="1" height="1" fill="#3060f0"/><rect x="8" y="9" width="1" height="1" fill="#4060e8"/><rect x="10" y="9" width="1" height="1" fill="#2040d8"/><rect x="11" y="9" width="1" height="1" fill="#2040d8"/><rect x="12" y="9" width="1" height="1" fill="#7060d8"/><rect x="14" y="9" width="1" height="1" fill="#2040d8"/><rect x="15" y="9" width="1" height="1" fill="#5070f0"/><rect x="7" y="8" width="1" height="1" fill="#e8e0f0"/><rect x="8" y="8" width="1" height="1" fill="#d0c8e8"/><rect x="6" y="9" width="1" height="1" fill="#c07868"/><rect x="7" y="9" width="1" height="1" fill="#f0e8e0"/><rect x="9" y="9" width="1" height="1" fill="#e0d8e8"/><rect x="4" y="9" width="1" height="1" fill="#a08090"/><rect x="12" y="8" width="1" height="1" fill="#2030a0"/><rect x="13" y="9" width="1" height="1" fill="#1828b0"/><rect x="0" y="10" width="16" height="5" fill="#dcdcd4"/><rect x="1" y="11" width="1" height="4" fill="#606060"/><rect x="4" y="10" width="1" height="5" fill="#303030"/><rect x="7" y="11" width="1" height="4" fill="#383838"/><rect x="9" y="12" width="1" height="3" fill="#585858"/><rect x="11" y="11" width="1" height="4" fill="#404040"/><rect x="13" y="10" width="1" height="5" fill="#303030"/><rect x="15" y="10" width="1" height="5" fill="#202020"/><rect x="0" y="15" width="16" height="1" fill="#000098"/></svg>
<div id="t1" class="t" style="left:26px;top:11px;color:#000;font-size:14px;font-weight:bold;text-shadow:1px 1px 1px rgba(140,140,170,0.55);">Winny v2.0b7.1</div>
<div class="a" style="left:949px;top:6px;width:21px;height:21px;border-radius:3px;border:1px solid #7c7ca0;background:linear-gradient(to bottom,#ffffff,#ececf4 35%,#d4d4e2 75%,#c0c0d4)"></div>
<div class="a" style="left:953px;top:19px;width:8px;height:3px;background:#2c2c54;box-shadow:1px 1px 0 #fff"></div>
<div class="a" style="left:972px;top:6px;width:21px;height:21px;border-radius:3px;border:1px solid #7c7ca0;background:linear-gradient(to bottom,#ffffff,#ececf4 35%,#d4d4e2 75%,#c0c0d4)"></div>
<div class="a" style="left:977px;top:11px;width:11px;height:11px;border:1px solid #2c2c54;border-top-width:3px;box-shadow:1px 1px 0 #fff"></div>
<div class="a" style="left:995px;top:6px;width:21px;height:21px;border-radius:3px;border:1px solid #9c4848;background:linear-gradient(to bottom,#f4b0a0,#e47868 35%,#d85a4c 75%,#cc5040)"></div>
<svg class="a" style="left:995px;top:6px" width="21" height="21"><path d="M5.5 5L15.5 15.5M15.5 5L5.5 15.5" stroke="#fff" stroke-width="2.2"/></svg>
<div class="a" style="left:4px;top:30px;width:1013px;height:20px;background:#dfe2ea"></div>
<svg class="a" style="left:7px;top:32px;" width="54" height="15" fill="#000"><g><use href="#g30d5" x="2" y="12"/><use href="#g30a1" x="12" y="12"/><use href="#g30a4" x="19" y="12"/><use href="#g30eb" x="28" y="12"/><use href="#g28" x="38" y="12"/><use href="#g46" x="42" y="12"/><rect x="42" y="12" width="6" height="1"/><use href="#g29" x="47" y="12"/></g></svg>
<svg class="a" style="left:68px;top:32px;" width="69" height="15" fill="#000"><g><use href="#g691c" x="2" y="12"/><use href="#g7d22" x="15" y="12"/><use href="#g5c65" x="27" y="12"/><use href="#g6b74" x="39" y="12"/><use href="#g28" x="50" y="12"/><use href="#g48" x="55" y="12"/><rect x="55" y="12" width="7" height="1"/><use href="#g29" x="61" y="12"/></g></svg>
<svg class="a" style="left:143px;top:32px;" width="45" height="15" fill="#000"><g><use href="#g8868" x="2" y="12"/><use href="#g793a" x="14" y="12"/><use href="#g28" x="25" y="12"/><use href="#g56" x="30" y="12"/><rect x="30" y="12" width="8" height="1"/><use href="#g29" x="37" y="12"/></g></svg>
<svg class="a" style="left:192px;top:32px;" width="54" height="15" fill="#000"><g><use href="#g30fb" x="3" y="12"/><use href="#g77" x="5" y="12"/><use href="#g30eb" x="12" y="12"/><use href="#g30d7" x="25" y="12"/><use href="#g28" x="36" y="12"/><use href="#g48" x="41" y="12"/><use href="#g29" x="47" y="12"/></g></svg>
<div class="a" style="left:4px;top:50px;width:1013px;height:1px;background:#9d9da1"></div>
<div class="a" style="left:4px;top:51px;width:1013px;height:1px;background:#ffffff"></div>
<div class="a" style="left:4px;top:80px;width:1013px;height:1px;background:#9d9da1"></div>
<div class="a" style="left:4px;top:81px;width:1013px;height:1px;background:#ffffff"></div>
<div class="a" style="left:4px;top:51px;width:1px;height:30px;background:#ffffff"></div>
<div class="a" style="left:1016px;top:50px;width:1px;height:31px;background:#9d9da1"></div>
<svg class="a" style="left:8px;top:58px;" width="69" height="15" fill="#000"><g><use href="#g691c" x="2" y="12"/><use href="#g7d22" x="15" y="12"/><use href="#g5358" x="28" y="12"/><use href="#g8a9e" x="40" y="12"/><use href="#g28" x="51" y="12"/><use href="#g53" x="56" y="12"/><rect x="56" y="12" width="6" height="1"/><use href="#g29" x="61" y="12"/></g></svg>
<div class="a" style="left:78px;top:56px;width:184px;height:20px;background:#fff;border:1px solid;border-color:#9d9da1 #ffffff #ffffff #9d9da1;box-shadow:inset 1px 1px 0 #716f64,inset -1px -1px 0 #f1efe2;"></div>
<svg class="a" style="left:79px;top:58px;" width="52" height="15" fill="#000"><g><use href="#g6c34" x="2" y="12"/><use href="#g6a39" x="14" y="12"/><use href="#g5948" x="26" y="12"/><use href="#g3005" x="38" y="12"/></g></svg>
<div class="a" style="left:244px;top:58px;width:17px;height:16px;background:#e0dfe3;border:1px solid;border-color:#f1efe2 #716f64 #716f64 #f1efe2;box-shadow:inset 1px 1px 0 #ffffff,inset -1px -1px 0 #9d9da1;"></div>
<svg class="a" style="left:248px;top:64px" width="8" height="5"><path d="M0 0H7L3.5 4Z" fill="#000"/></svg>
<div class="a" style="left:271px;top:56px;width:60px;height:20px;border:1px solid #000;background:#e0dfe3;box-shadow:inset 1px 1px 0 #f1efe2,inset 2px 2px 0 #ffffff,inset -1px -1px 0 #716f64,inset -2px -2px 0 #9d9da1"></div>
<svg class="a" style="left:282px;top:60px" width="12" height="10"><path d="M6 0L11.5 10H0.5Z" fill="#000"/></svg>
<svg class="a" style="left:293px;top:58px;" width="29" height="15" fill="#000"><g><use href="#g691c" x="2" y="12"/><use href="#g7d22" x="14" y="12"/></g></svg>
<div class="a" style="left:335px;top:56px;width:60px;height:20px;background:#e0dfe3;border:1px solid;border-color:#f1efe2 #716f64 #716f64 #f1efe2;box-shadow:inset 1px 1px 0 #ffffff,inset -1px -1px 0 #9d9da1;"></div>
<svg class="a" style="left:346px;top:60px" width="13" height="11"><path d="M1.5 1H12.5L7 11Z" fill="#fff"/><path d="M0.5 0H11.5L6 10Z" fill="#a4a4a8"/></svg>
<svg class="a" style="left:357px;top:58px;" width="29" height="15" fill="#a4a4a8"><g fill="#fff" transform="translate(1,1)"><use href="#g691c" x="2" y="12"/><use href="#g7d22" x="14" y="12"/></g><g><use href="#g691c" x="2" y="12"/><use href="#g7d22" x="14" y="12"/></g></svg>
<svg class="a" style="left:411px;top:58px;" width="36" height="15" fill="#000"><g><use href="#g48" x="2" y="12"/><use href="#g69" x="9" y="12"/><use href="#g74" x="11" y="12"/><use href="#g3a" x="20" y="12"/><use href="#g39" x="27" y="12"/></g></svg>
<svg class="a" style="left:460px;top:58px;" width="82" height="15" fill="#000"><g><use href="#g691c" x="2" y="12"/><use href="#g7d22" x="14" y="12"/><use href="#g30c8" x="24" y="12"/><use href="#g30ea" x="32" y="12"/><use href="#g30c3" x="40" y="12"/><use href="#g30d7" x="51" y="12"/><use href="#g28" x="62" y="12"/><use href="#g54" x="67" y="12"/><rect x="67" y="12" width="8" height="1"/><use href="#g29" x="74" y="12"/></g></svg>
<div class="a" style="left:550px;top:56px;width:135px;height:20px;background:#fff;border:1px solid;border-color:#9d9da1 #ffffff #ffffff #9d9da1;box-shadow:inset 1px 1px 0 #716f64,inset -1px -1px 0 #f1efe2;"></div>
<div class="a" style="left:667px;top:58px;width:17px;height:16px;background:#e0dfe3;border:1px solid;border-color:#f1efe2 #716f64 #716f64 #f1efe2;box-shadow:inset 1px 1px 0 #ffffff,inset -1px -1px 0 #9d9da1;"></div>
<svg class="a" style="left:671px;top:64px" width="8" height="5"><path d="M0 0H7L3.5 4Z" fill="#000"/></svg>
<svg class="a" style="left:911px;top:58px;" width="29" height="15" fill="#000"><g><use href="#g42" x="2" y="12"/><use href="#g42" x="11" y="12"/><use href="#g53" x="20" y="12"/></g></svg>
<svg class="a" style="left:947px;top:60px" width="12" height="13"><path d="M0.5 6L10.5 0V12Z" fill="#6c6c6c"/><path d="M10.5 1V12" stroke="#202020" stroke-width="1"/></svg>
<div class="a" style="left:964px;top:53px;width:25px;height:25px;border:1px solid;border-color:#a0a0a0 #fff #fff #a0a0a0;background-color:#f4f4f6;background-image:linear-gradient(45deg,#dcdcde 25%,transparent 25%,transparent 75%,#dcdcde 75%),linear-gradient(45deg,#dcdcde 25%,transparent 25%,transparent 75%,#dcdcde 75%);background-size:2px 2px;background-position:0 0,1px 1px;"></div>
<svg class="a" style="left:972px;top:61px" width="13" height="13"><path d="M6 0L12 11H0Z" fill="#6c6c6c"/><path d="M0 11.5H12" stroke="#303030"/></svg>
<div class="a" style="left:989px;top:53px;width:25px;height:25px;border:1px solid;border-color:#a0a0a0 #fff #fff #a0a0a0;background-color:#f4f4f6;background-image:linear-gradient(45deg,#dcdcde 25%,transparent 25%,transparent 75%,#dcdcde 75%),linear-gradient(45deg,#dcdcde 25%,transparent 25%,transparent 75%,#dcdcde 75%);background-size:2px 2px;background-position:0 0,1px 1px;"></div>
<svg class="a" style="left:996px;top:63px" width="14" height="11"><path d="M0 0H13L6.5 10Z" fill="#6c6c6c"/><path d="M6.5 10L13 0" stroke="#303030"/></svg>
<div class="a" style="left:4px;top:82px;width:1013px;height:1px;background:#9d9da1"></div>
<div class="a" style="left:4px;top:83px;width:1013px;height:1px;background:#ffffff"></div>
<svg class="a" style="left:11px;top:86px;" width="59" height="15" fill="#000"><g><use href="#g30ce" x="0" y="12"/><use href="#g30fc" x="11" y="12"/><use href="#g30c9" x="22" y="12"/><use href="#g60c5" x="33" y="12"/><use href="#g5831" x="45" y="12"/></g></svg>
<div class="a" style="left:76px;top:84px;width:1px;height:21px;background:#9d9da1"></div>
<div class="a" style="left:77px;top:84px;width:1px;height:21px;background:#ffffff"></div>
<svg class="a" style="left:84px;top:86px;" width="75" height="15" fill="#000"><g><use href="#g30d5" x="2" y="12"/><use href="#g30a9" x="12" y="12"/><use href="#g30eb" x="22" y="12"/><use href="#g30c0" x="34" y="12"/><use href="#g60c5" x="48" y="12"/><use href="#g5831" x="61" y="12"/></g></svg>
<div class="a" style="left:165px;top:84px;width:1px;height:21px;background:#9d9da1"></div>
<div class="a" style="left:166px;top:84px;width:1px;height:21px;background:#ffffff"></div>
<div class="a" style="left:171px;top:84px;width:77px;height:20px;border:1px solid;border-color:#9d9da1 #ffffff #ffffff #9d9da1;box-shadow:inset 1px 1px 0 #716f64,inset -1px -1px 0 #f1efe2;background-color:#fbfbfb;background-image:linear-gradient(45deg,#e0dfe3 25%,transparent 25%,transparent 75%,#e0dfe3 75%),linear-gradient(45deg,#e0dfe3 25%,transparent 25%,transparent 75%,#e0dfe3 75%);background-size:2px 2px;background-position:0 0,1px 1px;"></div>
<svg class="a" style="left:175px;top:87px;" width="71" height="15" fill="#000"><g><use href="#g30d5" x="2" y="12"/><use href="#g30a1" x="13" y="12"/><use href="#g30a4" x="21" y="12"/><use href="#g30eb" x="31" y="12"/><use href="#g691c" x="44" y="12"/><use href="#g7d22" x="57" y="12"/></g></svg>
<div class="a" style="left:252px;top:84px;width:1px;height:21px;background:#9d9da1"></div>
<div class="a" style="left:253px;top:84px;width:1px;height:21px;background:#ffffff"></div>
<svg class="a" style="left:262px;top:86px;" width="54" height="15" fill="#000"><g><use href="#g7121" x="2" y="12"/><use href="#g8996" x="15" y="12"/><use href="#g6761" x="27" y="12"/><use href="#g4ef6" x="39" y="12"/></g></svg>
<div class="a" style="left:322px;top:84px;width:1px;height:21px;background:#9d9da1"></div>
<div class="a" style="left:323px;top:84px;width:1px;height:21px;background:#ffffff"></div>
<svg class="a" style="left:329px;top:86px;" width="53" height="15" fill="#000"><g><use href="#g30ed" x="3" y="12"/><use href="#g30b0" x="14" y="12"/><use href="#g60c5" x="27" y="12"/><use href="#g5831" x="39" y="12"/></g></svg>
<div class="a" style="left:389px;top:84px;width:1px;height:21px;background:#9d9da1"></div>
<div class="a" style="left:390px;top:84px;width:1px;height:21px;background:#ffffff"></div>
<svg class="a" style="left:397px;top:86px;" width="77" height="15" fill="#000"><g><use href="#g30b7" x="1" y="12"/><use href="#g30b9" x="13" y="12"/><use href="#g30c6" x="26" y="12"/><use href="#g30e0" x="38" y="12"/><use href="#g60c5" x="50" y="12"/><use href="#g5831" x="63" y="12"/></g></svg>
<div class="a" style="left:481px;top:84px;width:1px;height:21px;background:#9d9da1"></div>
<div class="a" style="left:482px;top:84px;width:1px;height:21px;background:#ffffff"></div>
<svg class="a" style="left:1000px;top:93px" width="8" height="8"><path d="M0.5 0.5L7.5 7.5M7.5 0.5L0.5 7.5" stroke="#000" stroke-width="1.1"/></svg>
<div class="a" style="left:4px;top:107px;width:1013px;height:1px;background:#ffffff"></div>
<div class="a" style="left:5px;top:108px;width:1012px;height:27px;background:#808080"></div>
<div class="a" style="left:13px;top:112px;width:92px;height:19px;background:#e0dfe3;border:1px solid;border-color:#f1efe2 #716f64 #716f64 #f1efe2;box-shadow:inset 1px 1px 0 #ffffff,inset -1px -1px 0 #9d9da1;"></div>
<svg class="a" style="left:23px;top:115px;" width="76" height="15" fill="#008000"><g><use href="#g55" x="2" y="12"/><use href="#g50" x="10" y="12"/><use href="#g30d5" x="16" y="12"/><use href="#g30a9" x="26" y="12"/><use href="#g30eb" x="36" y="12"/><use href="#g30c0" x="48" y="12"/><use href="#g5185" x="61" y="12"/></g></svg>
<div class="a" style="left:106px;top:112px;width:92px;height:19px;background:#e0dfe3;border:1px solid;border-color:#f1efe2 #716f64 #716f64 #f1efe2;box-shadow:inset 1px 1px 0 #ffffff,inset -1px -1px 0 #9d9da1;"></div>
<svg class="a" style="left:112px;top:115px;" width="81" height="15" fill="#008000"><g><use href="#g5b8c" x="2" y="12"/><use href="#g5168" x="15" y="12"/><use href="#g30ad" x="28" y="12"/><use href="#g30e3" x="38" y="12"/><use href="#g30c3" x="48" y="12"/><use href="#g30b7" x="57" y="12"/><use href="#g30e5" x="68" y="12"/></g></svg>
<div class="a" style="left:199px;top:112px;width:92px;height:19px;border:1px solid;border-color:#9d9da1 #ffffff #ffffff #9d9da1;box-shadow:inset 1px 1px 0 #716f64,inset -1px -1px 0 #f1efe2;background-color:#fbfbfb;background-image:linear-gradient(45deg,#e0dfe3 25%,transparent 25%,transparent 75%,#e0dfe3 75%),linear-gradient(45deg,#e0dfe3 25%,transparent 25%,transparent 75%,#e0dfe3 75%);background-size:2px 2px;background-position:0 0,1px 1px;"></div>
<svg class="a" style="left:205px;top:116px;" width="82" height="15" fill="#008000"><g><use href="#g90e8" x="2" y="12"/><use href="#g5206" x="15" y="12"/><use href="#g30ad" x="29" y="12"/><use href="#g30e3" x="39" y="12"/><use href="#g30c3" x="49" y="12"/><use href="#g30b7" x="58" y="12"/><use href="#g30e5" x="69" y="12"/></g></svg>
<div class="a" style="left:292px;top:112px;width:92px;height:19px;background:#e0dfe3;border:1px solid;border-color:#f1efe2 #716f64 #716f64 #f1efe2;box-shadow:inset 1px 1px 0 #ffffff,inset -1px -1px 0 #9d9da1;"></div>
<svg class="a" style="left:301px;top:115px;" width="74" height="15" fill="#008000"><g><use href="#g30c0" x="2" y="12"/><use href="#g30a6" x="14" y="12"/><use href="#g30f3" x="25" y="12"/><use href="#g512a" x="36" y="12"/><use href="#g5148" x="48" y="12"/><use href="#g5ea6" x="60" y="12"/></g></svg>
<svg class="a" style="left:788px;top:108px;" width="12" height="15" fill="#f4f4f4"><g><use href="#g55" x="2" y="12"/></g></svg>
<svg class="a" style="left:802px;top:108px;" width="16" height="15" fill="#f4f4f4"><g><use href="#g73" x="2" y="12"/><use href="#g3a" x="11" y="12"/></g></svg>
<svg class="a" style="left:815px;top:108px;" width="11" height="15" fill="#f4f4f4"><g><use href="#g32" x="2" y="12"/></g></svg>
<svg class="a" style="left:829px;top:108px;" width="13" height="15" fill="#f4f4f4"><g><use href="#g74" x="2" y="12"/><use href="#g3a" x="8" y="12"/></g></svg>
<svg class="a" style="left:843px;top:108px;" width="11" height="15" fill="#f4f4f4"><g><use href="#g30" x="2" y="12"/></g></svg>
<svg class="a" style="left:855px;top:111px" width="8" height="10"><path d="M0.8 9.5L7.2 0.5" stroke="#f4f4f4" stroke-width="1.1"/></svg>
<svg class="a" style="left:863px;top:108px;" width="11" height="15" fill="#f4f4f4"><g><use href="#g32" x="2" y="12"/></g></svg>
<svg class="a" style="left:888px;top:108px;" width="34" height="15" fill="#f4f4f4"><g><use href="#g31" x="2" y="12"/><use href="#g35" x="9" y="12"/><use href="#g2e" x="14" y="12"/><use href="#g39" x="19" y="12"/><use href="#g4b" x="25" y="12"/></g></svg>
<svg class="a" style="left:788px;top:120px;" width="13" height="15" fill="#f4f4f4"><g><use href="#g44" x="2" y="12"/></g></svg>
<svg class="a" style="left:802px;top:120px;" width="16" height="15" fill="#f4f4f4"><g><use href="#g73" x="2" y="12"/><use href="#g3a" x="11" y="12"/></g></svg>
<svg class="a" style="left:815px;top:120px;" width="12" height="15" fill="#f4f4f4"><g><use href="#g34" x="2" y="12"/></g></svg>
<svg class="a" style="left:829px;top:120px;" width="13" height="15" fill="#f4f4f4"><g><use href="#g74" x="2" y="12"/><use href="#g3a" x="8" y="12"/></g></svg>
<svg class="a" style="left:843px;top:120px;" width="11" height="15" fill="#f4f4f4"><g><use href="#g32" x="2" y="12"/></g></svg>
<svg class="a" style="left:855px;top:123px" width="8" height="10"><path d="M0.8 9.5L7.2 0.5" stroke="#f4f4f4" stroke-width="1.1"/></svg>
<svg class="a" style="left:863px;top:120px;" width="11" height="15" fill="#f4f4f4"><g><use href="#g32" x="2" y="12"/></g></svg>
<svg class="a" style="left:888px;top:120px;" width="34" height="15" fill="#f4f4f4"><g><use href="#g31" x="2" y="12"/><use href="#g39" x="9" y="12"/><use href="#g2e" x="14" y="12"/><use href="#g36" x="19" y="12"/><use href="#g4b" x="25" y="12"/></g></svg>
<div class="a" style="left:936px;top:112px;width:77px;height:19px;background:#e0dfe3;border:1px solid;border-color:#f1efe2 #716f64 #716f64 #f1efe2;box-shadow:inset 1px 1px 0 #ffffff,inset -1px -1px 0 #9d9da1;"></div>
<svg class="a" style="left:961px;top:115px;" width="30" height="15" fill="#008000"><g><use href="#g8a2d" x="2" y="12"/><use href="#g5b9a" x="15" y="12"/></g></svg>
<div class="a" style="left:7px;top:137px;width:42px;height:18px;border-left:1px solid #ffffff;border-top:1px solid #ffffff;border-right:1px solid #716f64;box-shadow:inset -1px 0 0 #9d9da1"></div>
<svg class="a" style="left:11px;top:138px;" width="27" height="15" fill="#000"><g><use href="#g61" x="2" y="12"/><use href="#g69" x="9" y="12"/><use href="#g6b" x="12" y="12"/><use href="#g6f" x="18" y="12"/></g></svg>
<div class="a" style="left:49px;top:137px;width:41px;height:18px;border-left:1px solid #ffffff;border-top:1px solid #ffffff;border-right:1px solid #716f64;box-shadow:inset -1px 0 0 #9d9da1"></div>
<svg class="a" style="left:54px;top:138px;" width="20" height="15" fill="#000"><g><use href="#g50" x="2" y="12"/><use href="#g56" x="9" y="12"/></g></svg>
<div class="a" style="left:91px;top:137px;width:66px;height:18px;border-left:1px solid #ffffff;border-top:1px solid #ffffff;border-right:1px solid #716f64;box-shadow:inset -1px 0 0 #9d9da1"></div>
<svg class="a" style="left:95px;top:138px;" width="61" height="15" fill="#000"><g><use href="#g74" x="2" y="12"/><use href="#g68" x="7" y="12"/><use href="#g65" x="14" y="12"/><use href="#g70" x="26" y="12"/><use href="#g69" x="32" y="12"/><use href="#g6c" x="34" y="12"/><use href="#g6c" x="36" y="12"/><use href="#g6f" x="38" y="12"/><use href="#g77" x="44" y="12"/><use href="#g73" x="52" y="12"/></g></svg>
<div class="a" style="left:158px;top:137px;width:40px;height:18px;border-left:1px solid #ffffff;border-top:1px solid #ffffff;border-right:1px solid #716f64;box-shadow:inset -1px 0 0 #9d9da1"></div>
<svg class="a" style="left:162px;top:138px;" width="26" height="15" fill="#000"><g><use href="#g2e" x="0" y="12"/><use href="#g6d" x="5" y="12"/><use href="#g69" x="14" y="12"/><use href="#g64" x="17" y="12"/></g></svg>
<div class="a" style="left:5px;top:154px;width:1012px;height:1px;background:#ffffff"></div>
<div class="a" style="left:199px;top:135px;width:63px;height:21px;background:#e0dfe3;border-left:1px solid #ffffff;border-top:1px solid #ffffff;border-right:1px solid #716f64;box-shadow:inset -1px 0 0 #9d9da1"></div>
<svg class="a" style="left:204px;top:137px;" width="52" height="15" fill="#000"><g><use href="#g6c34" x="2" y="12"/><use href="#g6a39" x="14" y="12"/><use href="#g5948" x="26" y="12"/><use href="#g3005" x="38" y="12"/></g></svg>
<div class="a" style="left:5px;top:157px;width:1012px;height:1px;background:#9d9da1"></div>
<div class="a" style="left:5px;top:158px;width:1012px;height:1px;background:#716f64"></div>
<div class="a" style="left:4px;top:157px;width:1px;height:282px;background:#9d9da1"></div>
<div class="a" style="left:5px;top:159px;width:1012px;height:280px;background:#00002e"></div>
<div class="a" style="left:5px;top:159px;width:469px;height:16px;background:#e0dfe3;border-top:1px solid #ffffff;border-left:1px solid #ffffff;border-right:1px solid #716f64;border-bottom:1px solid #716f64;box-shadow:inset -1px -1px 0 #9d9da1"></div>
<svg class="a" style="left:8px;top:159px;" width="60" height="15" fill="#000"><g><use href="#g30d5" x="2" y="12"/><use href="#g30a1" x="14" y="12"/><use href="#g30a4" x="23" y="12"/><use href="#g30eb" x="34" y="12"/><use href="#g540d" x="47" y="12"/></g></svg>
<div class="a" style="left:474px;top:159px;width:80px;height:16px;background:#e0dfe3;border-top:1px solid #ffffff;border-left:1px solid #ffffff;border-right:1px solid #716f64;border-bottom:1px solid #716f64;box-shadow:inset -1px -1px 0 #9d9da1"></div>
<svg class="a" style="left:478px;top:159px;" width="44" height="15" fill="#000"><g><use href="#g30c8" x="1" y="12"/><use href="#g30ea" x="10" y="12"/><use href="#g30c3" x="19" y="12"/><use href="#g30d7" x="30" y="12"/></g></svg>
<div class="a" style="left:554px;top:159px;width:78px;height:16px;background:#e0dfe3;border-top:1px solid #ffffff;border-left:1px solid #ffffff;border-right:1px solid #716f64;border-bottom:1px solid #716f64;box-shadow:inset -1px -1px 0 #9d9da1"></div>
<svg class="a" style="left:557px;top:159px;" width="77" height="15" fill="#000"><g><use href="#g30b5" x="2" y="12"/><use href="#g30a4" x="14" y="12"/><use href="#g30ba" x="25" y="12"/><use href="#g28" x="38" y="12"/><use href="#g62" x="45" y="12"/><use href="#g79" x="52" y="12"/><use href="#g74" x="59" y="12"/><use href="#g65" x="64" y="12"/><use href="#g29" x="70" y="12"/></g></svg>
<div class="a" style="left:632px;top:159px;width:100px;height:16px;background:#e0dfe3;border-top:1px solid #ffffff;border-left:1px solid #ffffff;border-right:1px solid #716f64;border-bottom:1px solid #716f64;box-shadow:inset -1px -1px 0 #9d9da1"></div>
<svg class="a" style="left:635px;top:159px;" width="46" height="15" fill="#000"><g><use href="#g30d6" x="3" y="12"/><use href="#g30ed" x="15" y="12"/><use href="#g30c3" x="25" y="12"/><use href="#g30af" x="34" y="12"/></g></svg>
<div class="a" style="left:732px;top:159px;width:100px;height:16px;background:#e0dfe3;border-top:1px solid #ffffff;border-left:1px solid #ffffff;border-right:1px solid #716f64;border-bottom:1px solid #716f64;box-shadow:inset -1px -1px 0 #9d9da1"></div>
<svg class="a" style="left:736px;top:159px;" width="31" height="15" fill="#000"><g><use href="#g72b6" x="2" y="12"/><use href="#g614b" x="16" y="12"/></g></svg>
<div class="a" style="left:832px;top:159px;width:100px;height:16px;background:#e0dfe3;border-top:1px solid #ffffff;border-left:1px solid #ffffff;border-right:1px solid #716f64;border-bottom:1px solid #716f64;box-shadow:inset -1px -1px 0 #9d9da1"></div>
<svg class="a" style="left:835px;top:159px;" width="81" height="15" fill="#000"><g><use href="#g88ab" x="2" y="12"/><use href="#g53c2" x="15" y="12"/><use href="#g7167" x="28" y="12"/><use href="#g91cf" x="41" y="12"/><use href="#g28" x="53" y="12"/><use href="#g4d" x="59" y="12"/><use href="#g42" x="67" y="12"/><use href="#g29" x="73" y="12"/></g></svg>
<div class="a" style="left:932px;top:159px;width:128px;height:16px;background:#e0dfe3;border-top:1px solid #ffffff;border-left:1px solid #ffffff;border-right:1px solid #716f64;border-bottom:1px solid #716f64;box-shadow:inset -1px -1px 0 #9d9da1"></div>
<svg class="a" style="left:936px;top:159px;" width="54" height="15" fill="#000"><g><use href="#g66f4" x="2" y="12"/><use href="#g65b0" x="15" y="12"/><use href="#g6642" x="27" y="12"/><use href="#g523b" x="39" y="12"/></g></svg>
<div class="a" style="left:5px;top:175px;width:467px;height:15px;overflow:hidden">
<svg class="a" style="left:4px;top:0px;" width="407" height="15" fill="#00ff00"><g><use href="#g28" x="1" y="12"/><use href="#g4d" x="7" y="12"/><use href="#g41" x="16" y="12"/><use href="#g44" x="25" y="12"/><use href="#g29" x="33" y="12"/><use href="#g9b54" x="39" y="12"/><use href="#g6cd5" x="52" y="12"/><use href="#g5c11" x="65" y="12"/><use href="#g5973" x="78" y="12"/><use href="#g30ea" x="89" y="12"/><use href="#g30ea" x="98" y="12"/><use href="#g30ab" x="108" y="12"/><use href="#g30eb" x="119" y="12"/><use href="#g306a" x="131" y="12"/><use href="#g306e" x="142" y="12"/><use href="#g306f" x="153" y="12"/><use href="#g41" x="166" y="12"/><use href="#g27" x="173" y="12"/><use href="#g73" x="178" y="12"/><use href="#g6c34" x="190" y="12"/><use href="#g6a39" x="202" y="12"/><use href="#g5948" x="214" y="12"/><use href="#g3005" x="226" y="12"/><use href="#g300c" x="232" y="12"/><use href="#g45" x="244" y="12"/><use href="#g54" x="250" y="12"/><use href="#g45" x="258" y="12"/><use href="#g52" x="264" y="12"/><use href="#g4e" x="271" y="12"/><use href="#g41" x="278" y="12"/><use href="#g4c" x="286" y="12"/><use href="#g42" x="297" y="12"/><use href="#g4c" x="304" y="12"/><use href="#g41" x="310" y="12"/><use href="#g5a" x="318" y="12"/><use href="#g45" x="326" y="12"/><use href="#g300d" x="332" y="12"/><use href="#g7a7a" x="338" y="12"/><use href="#g81ea" x="350" y="12"/><use href="#g56" x="362" y="12"/><use href="#g65" x="370" y="12"/><use href="#g72" x="376" y="12"/><use href="#g2e" x="378" y="12"/><use href="#g77" x="382" y="12"/><use href="#g6d" x="390" y="12"/><use href="#g76" x="398" y="12"/></g></svg>
</div>
<svg class="a" style="left:575px;top:175px;" width="59" height="15" fill="#ff8000"><g><use href="#g32" x="2" y="12"/><use href="#g36" x="8" y="12"/><use href="#g2c" x="12" y="12"/><use href="#g37" x="17" y="12"/><use href="#g32" x="23" y="12"/><use href="#g36" x="29" y="12"/><use href="#g2c" x="33" y="12"/><use href="#g32" x="38" y="12"/><use href="#g32" x="44" y="12"/><use href="#g30" x="50" y="12"/></g></svg>
<div class="a" style="left:638px;top:178px;width:92px;height:10px;background:#8080ff"></div>
<svg class="a" style="left:736px;top:175px;" width="71" height="15" fill="#8080ff"><g><use href="#g4eee" x="2" y="12"/><use href="#g60f3" x="15" y="12"/><use href="#g30d5" x="27" y="12"/><use href="#g30a1" x="38" y="12"/><use href="#g30a4" x="46" y="12"/><use href="#g30eb" x="56" y="12"/></g></svg>
<svg class="a" style="left:901px;top:175px;" width="33" height="15" fill="#ffffff"><g><use href="#g33" x="2" y="12"/><use href="#g2c" x="6" y="12"/><use href="#g34" x="11" y="12"/><use href="#g30" x="18" y="12"/><use href="#g35" x="24" y="12"/></g></svg>
<div class="a" style="left:940px;top:175px;width:77px;height:15px;overflow:hidden">
<svg class="a" style="left:10px;top:0px;transform:scaleX(1.0);" width="83" height="15" fill="#ffffff"><g><use href="#g30" x="2" y="12"/><use href="#g35" x="8" y="12"/><use href="#g2f" x="14" y="12"/><use href="#g31" x="20" y="12"/><use href="#g32" x="26" y="12"/><use href="#g2f" x="32" y="12"/><use href="#g32" x="38" y="12"/><use href="#g38" x="44" y="12"/><use href="#g30" x="54" y="12"/><use href="#g35" x="60" y="12"/><use href="#g3a" x="66" y="12"/><use href="#g31" x="68" y="12"/><use href="#g32" x="74" y="12"/></g></svg>
</div>
<div class="a" style="left:5px;top:188px;width:467px;height:15px;overflow:hidden">
<svg class="a" style="left:4px;top:0px;" width="474" height="15" fill="#00ff00"><g><use href="#g28" x="1" y="12"/><use href="#g4d" x="6" y="12"/><use href="#g4f" x="14" y="12"/><use href="#g56" x="22" y="12"/><use href="#g29" x="29" y="12"/><use href="#g28" x="38" y="12"/><use href="#g58f0" x="43" y="12"/><use href="#g512a" x="55" y="12"/><use href="#g29" x="66" y="12"/><use href="#g28" x="75" y="12"/><use href="#g50" x="80" y="12"/><use href="#g56" x="86" y="12"/><use href="#g29" x="93" y="12"/><use href="#g6c34" x="103" y="12"/><use href="#g6a39" x="115" y="12"/><use href="#g5948" x="127" y="12"/><use href="#g3005" x="139" y="12"/><use href="#g2d" x="156" y="12"/><use href="#g30df" x="165" y="12"/><use href="#g30e9" x="175" y="12"/><use href="#g30af" x="185" y="12"/><use href="#g30eb" x="195" y="12"/><use href="#g2606" x="207" y="12"/><use href="#g30d5" x="219" y="12"/><use href="#g30e9" x="230" y="12"/><use href="#g30a4" x="240" y="12"/><use href="#g30c8" x="249" y="12"/><use href="#g28" x="258" y="12"/><use href="#g4d" x="263" y="12"/><use href="#g2d" x="271" y="12"/><use href="#g4f" x="277" y="12"/><use href="#g4e" x="285" y="12"/><use href="#g21" x="290" y="12"/><use href="#g54" x="298" y="12"/><use href="#g56" x="306" y="12"/><use href="#g29" x="313" y="12"/><use href="#g28" x="321" y="12"/><use href="#g34" x="326" y="12"/><use href="#g6d" x="333" y="12"/><use href="#g30" x="341" y="12"/><use href="#g36" x="347" y="12"/><use href="#g73" x="353" y="12"/><use href="#g36" x="363" y="12"/><use href="#g34" x="369" y="12"/><use href="#g30" x="376" y="12"/><use href="#g78" x="382" y="12"/><use href="#g34" x="388" y="12"/><use href="#g38" x="395" y="12"/><use href="#g30" x="401" y="12"/><use href="#g57" x="411" y="12"/><use href="#g4d" x="421" y="12"/><use href="#g56" x="429" y="12"/><use href="#g39" x="437" y="12"/><use href="#g31" x="447" y="12"/><use href="#g39" x="453" y="12"/><use href="#g32" x="459" y="12"/><use href="#g6b" x="465" y="12"/></g></svg>
</div>
<svg class="a" style="left:574px;top:188px;" width="60" height="15" fill="#ff8000"><g><use href="#g38" x="2" y="12"/><use href="#g32" x="8" y="12"/><use href="#g2c" x="12" y="12"/><use href="#g34" x="17" y="12"/><use href="#g37" x="24" y="12"/><use href="#g37" x="30" y="12"/><use href="#g2c" x="34" y="12"/><use href="#g30" x="39" y="12"/><use href="#g35" x="45" y="12"/><use href="#g36" x="51" y="12"/></g></svg>
<div class="a" style="left:638px;top:191px;width:92px;height:10px;background:#8080ff"></div>
<svg class="a" style="left:736px;top:188px;" width="71" height="15" fill="#8080ff"><g><use href="#g4eee" x="2" y="12"/><use href="#g60f3" x="15" y="12"/><use href="#g30d5" x="27" y="12"/><use href="#g30a1" x="38" y="12"/><use href="#g30a4" x="46" y="12"/><use href="#g30eb" x="56" y="12"/></g></svg>
<svg class="a" style="left:895px;top:188px;" width="39" height="15" fill="#ffffff"><g><use href="#g35" x="2" y="12"/><use href="#g35" x="8" y="12"/><use href="#g2c" x="12" y="12"/><use href="#g35" x="17" y="12"/><use href="#g34" x="23" y="12"/><use href="#g38" x="30" y="12"/></g></svg>
<div class="a" style="left:940px;top:188px;width:77px;height:15px;overflow:hidden">
<svg class="a" style="left:10px;top:0px;transform:scaleX(1.0);" width="83" height="15" fill="#ffffff"><g><use href="#g30" x="2" y="12"/><use href="#g35" x="8" y="12"/><use href="#g2f" x="14" y="12"/><use href="#g31" x="20" y="12"/><use href="#g32" x="26" y="12"/><use href="#g2f" x="32" y="12"/><use href="#g32" x="38" y="12"/><use href="#g38" x="44" y="12"/><use href="#g31" x="54" y="12"/><use href="#g37" x="60" y="12"/><use href="#g3a" x="66" y="12"/><use href="#g33" x="68" y="12"/><use href="#g31" x="74" y="12"/></g></svg>
</div>
<div class="a" style="left:5px;top:201px;width:467px;height:15px;overflow:hidden">
<svg class="a" style="left:4px;top:0px;" width="395" height="15" fill="#00ff00"><g><use href="#g28" x="1" y="12"/><use href="#g6d" x="7" y="12"/><use href="#g70" x="16" y="12"/><use href="#g33" x="23" y="12"/><use href="#g29" x="29" y="12"/><use href="#g9b54" x="35" y="12"/><use href="#g6cd5" x="47" y="12"/><use href="#g5c11" x="59" y="12"/><use href="#g5973" x="71" y="12"/><use href="#g30ea" x="82" y="12"/><use href="#g30ea" x="91" y="12"/><use href="#g30ab" x="101" y="12"/><use href="#g30eb" x="112" y="12"/><use href="#g306a" x="124" y="12"/><use href="#g306e" x="135" y="12"/><use href="#g306f" x="146" y="12"/><use href="#g4f" x="158" y="12"/><use href="#g50" x="166" y="12"/><use href="#g300c" x="166" y="12"/><use href="#g69" x="178" y="12"/><use href="#g6e" x="180" y="12"/><use href="#g6e" x="186" y="12"/><use href="#g6f" x="192" y="12"/><use href="#g63" x="198" y="12"/><use href="#g65" x="203" y="12"/><use href="#g6e" x="209" y="12"/><use href="#g74" x="215" y="12"/><use href="#g73" x="224" y="12"/><use href="#g74" x="230" y="12"/><use href="#g61" x="234" y="12"/><use href="#g72" x="240" y="12"/><use href="#g74" x="244" y="12"/><use href="#g65" x="248" y="12"/><use href="#g72" x="254" y="12"/><use href="#g28" x="257" y="12"/><use href="#g6c34" x="262" y="12"/><use href="#g6a39" x="274" y="12"/><use href="#g5948" x="286" y="12"/><use href="#g3005" x="298" y="12"/><use href="#g29" x="309" y="12"/><use href="#g300d" x="314" y="12"/><use href="#g28" x="319" y="12"/><use href="#g31" x="324" y="12"/><use href="#g39" x="330" y="12"/><use href="#g32" x="336" y="12"/><use href="#g6b" x="342" y="12"/><use href="#g62" x="348" y="12"/><use href="#g70" x="354" y="12"/><use href="#g73" x="360" y="12"/><use href="#g29" x="365" y="12"/><use href="#g2e" x="368" y="12"/><use href="#g6d" x="372" y="12"/><use href="#g70" x="380" y="12"/><use href="#g33" x="386" y="12"/></g></svg>
</div>
<svg class="a" style="left:580px;top:201px;" width="54" height="15" fill="#ff8000"><g><use href="#g36" x="2" y="12"/><use href="#g2c" x="6" y="12"/><use href="#g37" x="11" y="12"/><use href="#g35" x="17" y="12"/><use href="#g31" x="23" y="12"/><use href="#g2c" x="27" y="12"/><use href="#g34" x="32" y="12"/><use href="#g36" x="39" y="12"/><use href="#g37" x="45" y="12"/></g></svg>
<div class="a" style="left:638px;top:204px;width:92px;height:10px;background:#8080ff"></div>
<svg class="a" style="left:736px;top:201px;" width="71" height="15" fill="#8080ff"><g><use href="#g4eee" x="2" y="12"/><use href="#g60f3" x="15" y="12"/><use href="#g30d5" x="27" y="12"/><use href="#g30a1" x="38" y="12"/><use href="#g30a4" x="46" y="12"/><use href="#g30eb" x="56" y="12"/></g></svg>
<svg class="a" style="left:896px;top:201px;" width="38" height="15" fill="#ffffff"><g><use href="#g31" x="2" y="12"/><use href="#g30" x="8" y="12"/><use href="#g2c" x="12" y="12"/><use href="#g32" x="17" y="12"/><use href="#g38" x="23" y="12"/><use href="#g36" x="29" y="12"/></g></svg>
<div class="a" style="left:940px;top:201px;width:77px;height:15px;overflow:hidden">
<svg class="a" style="left:10px;top:0px;transform:scaleX(1.0);" width="85" height="15" fill="#ffffff"><g><use href="#g30" x="2" y="12"/><use href="#g35" x="8" y="12"/><use href="#g2f" x="14" y="12"/><use href="#g31" x="20" y="12"/><use href="#g32" x="26" y="12"/><use href="#g2f" x="32" y="12"/><use href="#g32" x="38" y="12"/><use href="#g35" x="44" y="12"/><use href="#g30" x="54" y="12"/><use href="#g32" x="60" y="12"/><use href="#g3a" x="66" y="12"/><use href="#g34" x="68" y="12"/><use href="#g34" x="75" y="12"/></g></svg>
</div>
<div class="a" style="left:5px;top:214px;width:467px;height:15px;overflow:hidden">
<svg class="a" style="left:4px;top:0px;" width="442" height="15" fill="#00ff00"><g><use href="#g28" x="1" y="12"/><use href="#g30a2" x="7" y="12"/><use href="#g30cb" x="18" y="12"/><use href="#g30e1" x="29" y="12"/><use href="#g29" x="40" y="12"/><use href="#g9b54" x="50" y="12"/><use href="#g6cd5" x="62" y="12"/><use href="#g5c11" x="74" y="12"/><use href="#g5973" x="86" y="12"/><use href="#g30ea" x="97" y="12"/><use href="#g30ea" x="106" y="12"/><use href="#g30ab" x="116" y="12"/><use href="#g30eb" x="127" y="12"/><use href="#g306a" x="139" y="12"/><use href="#g306e" x="150" y="12"/><use href="#g306f" x="161" y="12"/><use href="#g4f" x="177" y="12"/><use href="#g50" x="185" y="12"/><use href="#g2d" x="195" y="12"/><use href="#g69" x="205" y="12"/><use href="#g6e" x="207" y="12"/><use href="#g6e" x="213" y="12"/><use href="#g6f" x="219" y="12"/><use href="#g63" x="225" y="12"/><use href="#g65" x="230" y="12"/><use href="#g6e" x="236" y="12"/><use href="#g74" x="242" y="12"/><use href="#g73" x="250" y="12"/><use href="#g74" x="256" y="12"/><use href="#g61" x="260" y="12"/><use href="#g72" x="266" y="12"/><use href="#g74" x="270" y="12"/><use href="#g65" x="274" y="12"/><use href="#g72" x="280" y="12"/><use href="#g28" x="287" y="12"/><use href="#g6c34" x="292" y="12"/><use href="#g6a39" x="304" y="12"/><use href="#g5948" x="316" y="12"/><use href="#g3005" x="328" y="12"/><use href="#g29" x="339" y="12"/><use href="#g5b" x="346" y="12"/><use href="#g43" x="352" y="12"/><use href="#g44" x="359" y="12"/><use href="#g31" x="371" y="12"/><use href="#g39" x="377" y="12"/><use href="#g32" x="383" y="12"/><use href="#g6b" x="389" y="12"/><use href="#g62" x="395" y="12"/><use href="#g70" x="401" y="12"/><use href="#g73" x="407" y="12"/><use href="#g5d" x="412" y="12"/><use href="#g2e" x="415" y="12"/><use href="#g6d" x="419" y="12"/><use href="#g70" x="427" y="12"/><use href="#g33" x="433" y="12"/></g></svg>
</div>
<svg class="a" style="left:581px;top:214px;" width="53" height="15" fill="#ff8000"><g><use href="#g36" x="2" y="12"/><use href="#g2c" x="6" y="12"/><use href="#g37" x="11" y="12"/><use href="#g35" x="17" y="12"/><use href="#g33" x="23" y="12"/><use href="#g2c" x="27" y="12"/><use href="#g37" x="32" y="12"/><use href="#g37" x="38" y="12"/><use href="#g32" x="44" y="12"/></g></svg>
<div class="a" style="left:638px;top:217px;width:92px;height:10px;background:#8080ff"></div>
<svg class="a" style="left:736px;top:214px;" width="71" height="15" fill="#8080ff"><g><use href="#g4eee" x="2" y="12"/><use href="#g60f3" x="15" y="12"/><use href="#g30d5" x="27" y="12"/><use href="#g30a1" x="38" y="12"/><use href="#g30a4" x="46" y="12"/><use href="#g30eb" x="56" y="12"/></g></svg>
<svg class="a" style="left:902px;top:214px;" width="32" height="15" fill="#ffffff"><g><use href="#g35" x="2" y="12"/><use href="#g2c" x="6" y="12"/><use href="#g37" x="11" y="12"/><use href="#g30" x="17" y="12"/><use href="#g39" x="23" y="12"/></g></svg>
<div class="a" style="left:940px;top:214px;width:77px;height:15px;overflow:hidden">
<svg class="a" style="left:10px;top:0px;transform:scaleX(1.0);" width="83" height="15" fill="#ffffff"><g><use href="#g30" x="2" y="12"/><use href="#g35" x="8" y="12"/><use href="#g2f" x="14" y="12"/><use href="#g31" x="20" y="12"/><use href="#g32" x="26" y="12"/><use href="#g2f" x="32" y="12"/><use href="#g32" x="38" y="12"/><use href="#g38" x="44" y="12"/><use href="#g32" x="54" y="12"/><use href="#g31" x="60" y="12"/><use href="#g3a" x="66" y="12"/><use href="#g30" x="68" y="12"/><use href="#g39" x="74" y="12"/></g></svg>
</div>
<div class="a" style="left:5px;top:227px;width:467px;height:15px;overflow:hidden">
<svg class="a" style="left:4px;top:0px;" width="401" height="15" fill="#00ff00"><g><use href="#g28" x="1" y="12"/><use href="#g58f0" x="7" y="12"/><use href="#g512a" x="20" y="12"/><use href="#g30fb" x="33" y="12"/><use href="#g96d1" x="36" y="12"/><use href="#g8a8c" x="49" y="12"/><use href="#g29" x="61" y="12"/><use href="#g68" x="67" y="12"/><use href="#g6d" x="74" y="12"/><use href="#g33" x="83" y="12"/><use href="#g53" x="95" y="12"/><use href="#g50" x="102" y="12"/><use href="#g45" x="109" y="12"/><use href="#g43" x="116" y="12"/><use href="#g49" x="123" y="12"/><use href="#g41" x="127" y="12"/><use href="#g4c" x="135" y="12"/><use href="#g56" x="146" y="12"/><use href="#g6f" x="154" y="12"/><use href="#g6c" x="160" y="12"/><use href="#g2e" x="160" y="12"/><use href="#g31" x="164" y="12"/><use href="#g31" x="170" y="12"/><use href="#g5dfb" x="181" y="12"/><use href="#g982d" x="193" y="12"/><use href="#g7279" x="205" y="12"/><use href="#g96c6" x="217" y="12"/><use href="#g3a" x="229" y="12"/><use href="#g6c34" x="231" y="12"/><use href="#g6a39" x="243" y="12"/><use href="#g5948" x="255" y="12"/><use href="#g3005" x="267" y="12"/><use href="#g5dfb" x="284" y="12"/><use href="#g672b" x="296" y="12"/><use href="#g7279" x="308" y="12"/><use href="#g96c6" x="320" y="12"/><use href="#g3a" x="332" y="12"/><use href="#g5742" x="334" y="12"/><use href="#g672c" x="346" y="12"/><use href="#g771f" x="358" y="12"/><use href="#g7dbe" x="370" y="12"/><use href="#g2e" x="380" y="12"/><use href="#g7a" x="384" y="12"/><use href="#g69" x="390" y="12"/><use href="#g70" x="392" y="12"/></g></svg>
</div>
<svg class="a" style="left:478px;top:227px;" width="59" height="15" fill="#8080ff"><g><use href="#g52" x="2" y="12"/><use href="#g55" x="10" y="12"/><use href="#g74" x="17" y="12"/><use href="#g49" x="21" y="12"/><use href="#g39" x="25" y="12"/><use href="#g71" x="31" y="12"/><use href="#g32" x="37" y="12"/><use href="#g72" x="43" y="12"/><use href="#g6a" x="47" y="12"/><use href="#g38" x="50" y="12"/></g></svg>
<svg class="a" style="left:569px;top:227px;" width="65" height="15" fill="#ff8000"><g><use href="#g31" x="2" y="12"/><use href="#g31" x="8" y="12"/><use href="#g31" x="14" y="12"/><use href="#g2c" x="18" y="12"/><use href="#g30" x="23" y="12"/><use href="#g30" x="29" y="12"/><use href="#g39" x="35" y="12"/><use href="#g2c" x="39" y="12"/><use href="#g30" x="44" y="12"/><use href="#g31" x="50" y="12"/><use href="#g39" x="56" y="12"/></g></svg>
<div class="a" style="left:638px;top:230px;width:92px;height:10px;background:#8080ff"></div>
<svg class="a" style="left:736px;top:227px;" width="71" height="15" fill="#8080ff"><g><use href="#g4eee" x="2" y="12"/><use href="#g60f3" x="15" y="12"/><use href="#g30d5" x="27" y="12"/><use href="#g30a1" x="38" y="12"/><use href="#g30a4" x="46" y="12"/><use href="#g30eb" x="56" y="12"/></g></svg>
<svg class="a" style="left:890px;top:227px;" width="44" height="15" fill="#ffffff"><g><use href="#g31" x="2" y="12"/><use href="#g30" x="8" y="12"/><use href="#g35" x="14" y="12"/><use href="#g2c" x="18" y="12"/><use href="#g38" x="23" y="12"/><use href="#g39" x="29" y="12"/><use href="#g37" x="35" y="12"/></g></svg>
<div class="a" style="left:940px;top:227px;width:77px;height:15px;overflow:hidden">
<svg class="a" style="left:10px;top:0px;transform:scaleX(1.0);" width="84" height="15" fill="#ffffff"><g><use href="#g30" x="2" y="12"/><use href="#g35" x="8" y="12"/><use href="#g2f" x="14" y="12"/><use href="#g31" x="20" y="12"/><use href="#g32" x="26" y="12"/><use href="#g2f" x="32" y="12"/><use href="#g32" x="38" y="12"/><use href="#g39" x="44" y="12"/><use href="#g31" x="54" y="12"/><use href="#g34" x="60" y="12"/><use href="#g3a" x="67" y="12"/><use href="#g30" x="69" y="12"/><use href="#g32" x="75" y="12"/></g></svg>
</div>
<div class="a" style="left:5px;top:240px;width:467px;height:15px;overflow:hidden">
<svg class="a" style="left:4px;top:0px;" width="368" height="15" fill="#00ff00"><g><use href="#g5b" x="0" y="12"/><use href="#g50" x="7" y="12"/><use href="#g56" x="14" y="12"/><use href="#g5d" x="22" y="12"/><use href="#g6c34" x="33" y="12"/><use href="#g6a39" x="46" y="12"/><use href="#g5948" x="59" y="12"/><use href="#g3005" x="71" y="12"/><use href="#g2d" x="88" y="12"/><use href="#g44" x="100" y="12"/><use href="#g56" x="109" y="12"/><use href="#g44" x="118" y="12"/><use href="#g300c" x="120" y="12"/><use href="#g4e" x="133" y="12"/><use href="#g41" x="140" y="12"/><use href="#g4e" x="148" y="12"/><use href="#g41" x="155" y="12"/><use href="#g43" x="168" y="12"/><use href="#g4c" x="175" y="12"/><use href="#g49" x="181" y="12"/><use href="#g50" x="185" y="12"/><use href="#g53" x="191" y="12"/><use href="#g31" x="202" y="12"/><use href="#g300d" x="208" y="12"/><use href="#g6620" x="214" y="12"/><use href="#g50cf" x="226" y="12"/><use href="#g7279" x="238" y="12"/><use href="#g5178" x="250" y="12"/><use href="#g300e" x="257" y="12"/><use href="#g4e" x="269" y="12"/><use href="#g41" x="276" y="12"/><use href="#g4e" x="284" y="12"/><use href="#g41" x="291" y="12"/><use href="#g69" x="304" y="12"/><use href="#g6e" x="306" y="12"/><use href="#g42" x="317" y="12"/><use href="#g61" x="324" y="12"/><use href="#g72" x="330" y="12"/><use href="#g69" x="334" y="12"/><use href="#g300f" x="336" y="12"/><use href="#g2e" x="341" y="12"/><use href="#g6d" x="345" y="12"/><use href="#g70" x="353" y="12"/><use href="#g67" x="359" y="12"/></g></svg>
</div>
<svg class="a" style="left:573px;top:240px;" width="61" height="15" fill="#ff8000"><g><use href="#g34" x="2" y="12"/><use href="#g34" x="9" y="12"/><use href="#g2c" x="14" y="12"/><use href="#g31" x="19" y="12"/><use href="#g35" x="25" y="12"/><use href="#g36" x="31" y="12"/><use href="#g2c" x="35" y="12"/><use href="#g30" x="40" y="12"/><use href="#g30" x="46" y="12"/><use href="#g30" x="52" y="12"/></g></svg>
<div class="a" style="left:638px;top:243px;width:92px;height:10px;background:#8080ff"></div>
<svg class="a" style="left:736px;top:240px;" width="71" height="15" fill="#8080ff"><g><use href="#g4eee" x="2" y="12"/><use href="#g60f3" x="15" y="12"/><use href="#g30d5" x="27" y="12"/><use href="#g30a1" x="38" y="12"/><use href="#g30a4" x="46" y="12"/><use href="#g30eb" x="56" y="12"/></g></svg>
<svg class="a" style="left:895px;top:240px;" width="39" height="15" fill="#ffffff"><g><use href="#g32" x="2" y="12"/><use href="#g37" x="8" y="12"/><use href="#g2c" x="12" y="12"/><use href="#g34" x="17" y="12"/><use href="#g36" x="24" y="12"/><use href="#g31" x="30" y="12"/></g></svg>
<div class="a" style="left:940px;top:240px;width:77px;height:15px;overflow:hidden">
<svg class="a" style="left:10px;top:0px;transform:scaleX(1.0);" width="85" height="15" fill="#ffffff"><g><use href="#g30" x="2" y="12"/><use href="#g35" x="8" y="12"/><use href="#g2f" x="14" y="12"/><use href="#g31" x="20" y="12"/><use href="#g32" x="26" y="12"/><use href="#g2f" x="32" y="12"/><use href="#g32" x="38" y="12"/><use href="#g37" x="44" y="12"/><use href="#g31" x="54" y="12"/><use href="#g34" x="60" y="12"/><use href="#g3a" x="67" y="12"/><use href="#g34" x="69" y="12"/><use href="#g30" x="76" y="12"/></g></svg>
</div>
<div class="a" style="left:5px;top:253px;width:467px;height:15px;overflow:hidden">
<svg class="a" style="left:4px;top:0px;" width="270" height="15" fill="#00ff00"><g><use href="#g5b" x="0" y="12"/><use href="#g30a2" x="7" y="12"/><use href="#g30eb" x="18" y="12"/><use href="#g30d0" x="31" y="12"/><use href="#g30e0" x="43" y="12"/><use href="#g5d" x="54" y="12"/><use href="#g6c34" x="64" y="12"/><use href="#g6a39" x="76" y="12"/><use href="#g5948" x="88" y="12"/><use href="#g3005" x="100" y="12"/><use href="#g41" x="117" y="12"/><use href="#g4c" x="125" y="12"/><use href="#g49" x="131" y="12"/><use href="#g56" x="135" y="12"/><use href="#g45" x="143" y="12"/><use href="#g26" x="149" y="12"/><use href="#g4b" x="155" y="12"/><use href="#g49" x="161" y="12"/><use href="#g43" x="165" y="12"/><use href="#g4b" x="172" y="12"/><use href="#g49" x="178" y="12"/><use href="#g4e" x="182" y="12"/><use href="#g47" x="189" y="12"/><use href="#g28" x="200" y="12"/><use href="#g31" x="205" y="12"/><use href="#g39" x="211" y="12"/><use href="#g32" x="217" y="12"/><use href="#g6b" x="223" y="12"/><use href="#g62" x="229" y="12"/><use href="#g70" x="235" y="12"/><use href="#g73" x="241" y="12"/><use href="#g29" x="246" y="12"/><use href="#g2e" x="249" y="12"/><use href="#g7a" x="253" y="12"/><use href="#g69" x="259" y="12"/><use href="#g70" x="261" y="12"/></g></svg>
</div>
<svg class="a" style="left:572px;top:253px;" width="62" height="15" fill="#ff8000"><g><use href="#g39" x="2" y="12"/><use href="#g32" x="8" y="12"/><use href="#g2c" x="12" y="12"/><use href="#g37" x="17" y="12"/><use href="#g33" x="23" y="12"/><use href="#g34" x="29" y="12"/><use href="#g2c" x="34" y="12"/><use href="#g34" x="39" y="12"/><use href="#g34" x="46" y="12"/><use href="#g32" x="53" y="12"/></g></svg>
<div class="a" style="left:638px;top:256px;width:92px;height:10px;background:#8080ff"></div>
<svg class="a" style="left:736px;top:253px;" width="71" height="15" fill="#8080ff"><g><use href="#g4eee" x="2" y="12"/><use href="#g60f3" x="15" y="12"/><use href="#g30d5" x="27" y="12"/><use href="#g30a1" x="38" y="12"/><use href="#g30a4" x="46" y="12"/><use href="#g30eb" x="56" y="12"/></g></svg>
<svg class="a" style="left:923px;top:253px;" width="11" height="15" fill="#ffffff"><g><use href="#g39" x="2" y="12"/></g></svg>
<div class="a" style="left:940px;top:253px;width:77px;height:15px;overflow:hidden">
<svg class="a" style="left:10px;top:0px;transform:scaleX(1.0);" width="83" height="15" fill="#ffffff"><g><use href="#g30" x="2" y="12"/><use href="#g35" x="8" y="12"/><use href="#g2f" x="14" y="12"/><use href="#g31" x="20" y="12"/><use href="#g32" x="26" y="12"/><use href="#g2f" x="32" y="12"/><use href="#g32" x="38" y="12"/><use href="#g39" x="44" y="12"/><use href="#g30" x="54" y="12"/><use href="#g36" x="60" y="12"/><use href="#g3a" x="66" y="12"/><use href="#g32" x="68" y="12"/><use href="#g31" x="74" y="12"/></g></svg>
</div>
<div class="a" style="left:5px;top:266px;width:467px;height:15px;overflow:hidden">
<svg class="a" style="left:4px;top:0px;" width="158" height="15" fill="#00ff00"><g><use href="#g28" x="1" y="12"/><use href="#g58f0" x="7" y="12"/><use href="#g512a" x="19" y="12"/><use href="#g29" x="30" y="12"/><use href="#g6c34" x="35" y="12"/><use href="#g6a39" x="47" y="12"/><use href="#g5948" x="59" y="12"/><use href="#g3005" x="71" y="12"/><use href="#g3000" x="83" y="12"/><use href="#g80f8" x="95" y="12"/><use href="#g3061" x="107" y="12"/><use href="#g3089" x="117" y="12"/><use href="#gff01" x="127" y="12"/><use href="#g2e" x="137" y="12"/><use href="#g7a" x="141" y="12"/><use href="#g69" x="147" y="12"/><use href="#g70" x="149" y="12"/></g></svg>
</div>
<svg class="a" style="left:589px;top:266px;" width="45" height="15" fill="#ff8000"><g><use href="#g34" x="2" y="12"/><use href="#g38" x="9" y="12"/><use href="#g37" x="15" y="12"/><use href="#g2c" x="19" y="12"/><use href="#g32" x="24" y="12"/><use href="#g30" x="30" y="12"/><use href="#g38" x="36" y="12"/></g></svg>
<div class="a" style="left:638px;top:269px;width:92px;height:10px;background:#8080ff"></div>
<svg class="a" style="left:736px;top:266px;" width="71" height="15" fill="#8080ff"><g><use href="#g4eee" x="2" y="12"/><use href="#g60f3" x="15" y="12"/><use href="#g30d5" x="27" y="12"/><use href="#g30a1" x="38" y="12"/><use href="#g30a4" x="46" y="12"/><use href="#g30eb" x="56" y="12"/></g></svg>
<svg class="a" style="left:917px;top:266px;" width="17" height="15" fill="#ffffff"><g><use href="#g33" x="2" y="12"/><use href="#g30" x="8" y="12"/></g></svg>
<div class="a" style="left:940px;top:266px;width:77px;height:15px;overflow:hidden">
<svg class="a" style="left:10px;top:0px;transform:scaleX(1.0);" width="83" height="15" fill="#ffffff"><g><use href="#g30" x="2" y="12"/><use href="#g35" x="8" y="12"/><use href="#g2f" x="14" y="12"/><use href="#g31" x="20" y="12"/><use href="#g32" x="26" y="12"/><use href="#g2f" x="32" y="12"/><use href="#g31" x="38" y="12"/><use href="#g39" x="44" y="12"/><use href="#g31" x="54" y="12"/><use href="#g32" x="60" y="12"/><use href="#g3a" x="66" y="12"/><use href="#g35" x="68" y="12"/><use href="#g35" x="74" y="12"/></g></svg>
</div>
<div class="a" style="left:5px;top:279px;width:467px;height:15px;overflow:hidden">
<svg class="a" style="left:3px;top:0px;" width="474" height="15" fill="#00ff00"><g><use href="#g3010" x="1" y="12"/><use href="#g49" x="9" y="12"/><use href="#g56" x="14" y="12"/><use href="#g3011" x="21" y="12"/><use href="#g300a" x="24" y="12"/><use href="#g58f0" x="37" y="12"/><use href="#g512a" x="50" y="12"/><use href="#g300b" x="63" y="12"/><use href="#g43" x="71" y="12"/><use href="#g6c" x="78" y="12"/><use href="#g75" x="80" y="12"/><use href="#g62" x="86" y="12"/><use href="#g41" x="92" y="12"/><use href="#g54" x="100" y="12"/><use href="#g2d" x="108" y="12"/><use href="#g58" x="114" y="12"/><use href="#g23" x="121" y="12"/><use href="#g34" x="128" y="12"/><use href="#g32" x="135" y="12"/><use href="#g28" x="140" y="12"/><use href="#g4e95" x="145" y="12"/><use href="#g4e0a" x="157" y="12"/><use href="#g9ebb" x="169" y="12"/><use href="#g91cc" x="181" y="12"/><use href="#g5948" x="193" y="12"/><use href="#g30fb" x="206" y="12"/><use href="#g8c4a" x="209" y="12"/><use href="#g53e3" x="221" y="12"/><use href="#g3081" x="233" y="12"/><use href="#g3050" x="244" y="12"/><use href="#g307f" x="255" y="12"/><use href="#g30fb" x="268" y="12"/><use href="#g80fd" x="271" y="12"/><use href="#g767b" x="283" y="12"/><use href="#g9ebb" x="295" y="12"/><use href="#g7f8e" x="307" y="12"/><use href="#g5b50" x="319" y="12"/><use href="#g30fb" x="332" y="12"/><use href="#g658e" x="335" y="12"/><use href="#g8cc0" x="347" y="12"/><use href="#g307f" x="359" y="12"/><use href="#g3064" x="372" y="12"/><use href="#g304d" x="382" y="12"/><use href="#g30fb" x="393" y="12"/><use href="#g6c34" x="396" y="12"/><use href="#g6a39" x="408" y="12"/><use href="#g5948" x="420" y="12"/><use href="#g3005" x="432" y="12"/><use href="#g30fb" x="445" y="12"/><use href="#g6843" x="448" y="12"/><use href="#g4e95" x="460" y="12"/></g></svg>
</div>
<svg class="a" style="left:569px;top:279px;" width="65" height="15" fill="#ff8000"><g><use href="#g32" x="2" y="12"/><use href="#g36" x="8" y="12"/><use href="#g36" x="14" y="12"/><use href="#g2c" x="18" y="12"/><use href="#g39" x="23" y="12"/><use href="#g33" x="29" y="12"/><use href="#g38" x="35" y="12"/><use href="#g2c" x="39" y="12"/><use href="#g33" x="44" y="12"/><use href="#g37" x="50" y="12"/><use href="#g32" x="56" y="12"/></g></svg>
<div class="a" style="left:638px;top:282px;width:92px;height:10px;background:#8080ff"></div>
<svg class="a" style="left:736px;top:279px;" width="71" height="15" fill="#8080ff"><g><use href="#g4eee" x="2" y="12"/><use href="#g60f3" x="15" y="12"/><use href="#g30d5" x="27" y="12"/><use href="#g30a1" x="38" y="12"/><use href="#g30a4" x="46" y="12"/><use href="#g30eb" x="56" y="12"/></g></svg>
<svg class="a" style="left:890px;top:279px;" width="44" height="15" fill="#ffffff"><g><use href="#g32" x="2" y="12"/><use href="#g37" x="8" y="12"/><use href="#g31" x="14" y="12"/><use href="#g2c" x="18" y="12"/><use href="#g38" x="23" y="12"/><use href="#g33" x="29" y="12"/><use href="#g38" x="35" y="12"/></g></svg>
<div class="a" style="left:940px;top:279px;width:77px;height:15px;overflow:hidden">
<svg class="a" style="left:10px;top:0px;transform:scaleX(1.0);" width="83" height="15" fill="#ffffff"><g><use href="#g30" x="2" y="12"/><use href="#g35" x="8" y="12"/><use href="#g2f" x="14" y="12"/><use href="#g31" x="20" y="12"/><use href="#g31" x="26" y="12"/><use href="#g2f" x="32" y="12"/><use href="#g33" x="38" y="12"/><use href="#g30" x="44" y="12"/><use href="#g31" x="54" y="12"/><use href="#g36" x="60" y="12"/><use href="#g3a" x="66" y="12"/><use href="#g31" x="68" y="12"/><use href="#g30" x="74" y="12"/></g></svg>
</div>
<div class="a" style="left:5px;top:439px;width:1012px;height:18px;background:linear-gradient(to bottom,#eceef2,#f6f6f8 60%,#fbfbfc)"></div>
<div class="a" style="left:6px;top:440px;width:16px;height:16px;border:1px solid #a4a4bc;border-radius:2px;background:linear-gradient(to bottom,#fdfdff,#e8e8f0 50%,#d0d0de)"></div>
<svg class="a" style="left:6px;top:440px" width="16" height="16"><path d="M8.5 3.5L4.5 7.5L8.5 11.5" stroke="#202020" stroke-width="2" fill="none"/></svg>
<div class="a" style="left:23px;top:440px;width:647px;height:16px;border:1px solid #a4a4bc;border-radius:2px;background:linear-gradient(to bottom,#fdfdff,#e8e8f0 50%,#d0d0de)"></div>
<svg class="a" style="left:342px;top:444px" width="10" height="8"><path d="M1.5 0V8M3.5 0V8M5.5 0V8M7.5 0V8" stroke="#9898a8" stroke-width="1"/></svg>
<div class="a" style="left:1000px;top:440px;width:17px;height:16px;border:1px solid #a4a4bc;border-radius:2px;background:linear-gradient(to bottom,#fdfdff,#e8e8f0 50%,#d0d0de)"></div>
<svg class="a" style="left:1000px;top:440px" width="17" height="16"><path d="M7 4.5L10.5 8L7 11.5" stroke="#202020" stroke-width="2" fill="none"/></svg>
<div class="a" style="left:5px;top:463px;width:1012px;height:1px;background:#9d9da1"></div>
<div class="a" style="left:5px;top:464px;width:1012px;height:1px;background:#ffffff"></div>
<div class="a" style="left:8px;top:465px;width:68px;height:20px;border:1px solid;border-color:#9d9da1 #ffffff #ffffff #9d9da1;box-shadow:inset 1px 1px 0 #716f64,inset -1px -1px 0 #f1efe2;background-color:#fbfbfb;background-image:linear-gradient(45deg,#e0dfe3 25%,transparent 25%,transparent 75%,#e0dfe3 75%),linear-gradient(45deg,#e0dfe3 25%,transparent 25%,transparent 75%,#e0dfe3 75%);background-size:2px 2px;background-position:0 0,1px 1px;"></div>
<svg class="a" style="left:12px;top:468px;" width="62" height="15" fill="#000"><g><use href="#g30c0" x="2" y="12"/><use href="#g30a6" x="14" y="12"/><use href="#g30f3" x="25" y="12"/><use href="#g6761" x="36" y="12"/><use href="#g4ef6" x="48" y="12"/></g></svg>
<div class="a" style="left:80px;top:466px;width:1px;height:19px;background:#9d9da1"></div>
<div class="a" style="left:81px;top:466px;width:1px;height:19px;background:#ffffff"></div>
<svg class="a" style="left:89px;top:467px;" width="61" height="15" fill="#000"><g><use href="#g30bf" x="2" y="12"/><use href="#g30b9" x="13" y="12"/><use href="#g30af" x="24" y="12"/><use href="#g60c5" x="35" y="12"/><use href="#g5831" x="47" y="12"/></g></svg>
<div class="a" style="left:156px;top:466px;width:1px;height:19px;background:#9d9da1"></div>
<div class="a" style="left:157px;top:466px;width:1px;height:19px;background:#ffffff"></div>
<svg class="a" style="left:1000px;top:473px" width="8" height="8"><path d="M0.5 0.5L7.5 7.5M7.5 0.5L0.5 7.5" stroke="#000" stroke-width="1.1"/></svg>
<div class="a" style="left:4px;top:487px;width:1013px;height:1px;background:#ffffff"></div>
<div class="a" style="left:5px;top:488px;width:1012px;height:27px;background:#808080"></div>
<div class="a" style="left:13px;top:492px;width:92px;height:19px;background:#e0dfe3;border:1px solid;border-color:#f1efe2 #716f64 #716f64 #f1efe2;box-shadow:inset 1px 1px 0 #ffffff,inset -1px -1px 0 #9d9da1;"></div>
<svg class="a" style="left:28px;top:495px;" width="62" height="15" fill="#008000"><g><use href="#g30c0" x="2" y="12"/><use href="#g30a6" x="14" y="12"/><use href="#g30f3" x="25" y="12"/><use href="#g8ffd" x="36" y="12"/><use href="#g52a0" x="48" y="12"/></g></svg>
<div class="a" style="left:106px;top:492px;width:92px;height:19px;background:#e0dfe3;border:1px solid;border-color:#f1efe2 #716f64 #716f64 #f1efe2;box-shadow:inset 1px 1px 0 #ffffff,inset -1px -1px 0 #9d9da1;"></div>
<svg class="a" style="left:122px;top:495px;" width="59" height="15" fill="#008000"><g><use href="#g30ea" x="1" y="12"/><use href="#g30b9" x="11" y="12"/><use href="#g30c8" x="22" y="12"/><use href="#g524a" x="33" y="12"/><use href="#g9664" x="45" y="12"/></g></svg>
<div class="a" style="left:199px;top:492px;width:92px;height:19px;background:#e0dfe3;border:1px solid;border-color:#f1efe2 #716f64 #716f64 #f1efe2;box-shadow:inset 1px 1px 0 #ffffff,inset -1px -1px 0 #9d9da1;"></div>
<svg class="a" style="left:215px;top:495px;" width="59" height="15" fill="#008000"><g><use href="#g30ea" x="1" y="12"/><use href="#g30b9" x="11" y="12"/><use href="#g30c8" x="22" y="12"/><use href="#g7de8" x="33" y="12"/><use href="#g96c6" x="45" y="12"/></g></svg>
<div class="a" style="left:292px;top:492px;width:92px;height:19px;background:#e0dfe3;border:1px solid;border-color:#f1efe2 #716f64 #716f64 #f1efe2;box-shadow:inset 1px 1px 0 #ffffff,inset -1px -1px 0 #9d9da1;"></div>
<svg class="a" style="left:307px;top:495px;" width="60" height="15" fill="#008000"><g><use href="#g30ea" x="1" y="12"/><use href="#g30b9" x="11" y="12"/><use href="#g30c8" x="22" y="12"/><use href="#g518d" x="33" y="12"/><use href="#g8aad" x="46" y="12"/></g></svg>
<div class="a" style="left:384px;top:492px;width:93px;height:19px;background:#e0dfe3;border:1px solid;border-color:#f1efe2 #716f64 #716f64 #f1efe2;box-shadow:inset 1px 1px 0 #ffffff,inset -1px -1px 0 #9d9da1;"></div>
<svg class="a" style="left:392px;top:495px;" width="81" height="15" fill="#008000"><g><use href="#g672a" x="2" y="12"/><use href="#g5909" x="14" y="12"/><use href="#g63db" x="26" y="12"/><use href="#g30c1" x="39" y="12"/><use href="#g30a7" x="50" y="12"/><use href="#g30c3" x="59" y="12"/><use href="#g30af" x="68" y="12"/></g></svg>
<svg class="a" style="left:788px;top:488px;" width="12" height="15" fill="#f4f4f4"><g><use href="#g55" x="2" y="12"/></g></svg>
<svg class="a" style="left:802px;top:488px;" width="16" height="15" fill="#f4f4f4"><g><use href="#g73" x="2" y="12"/><use href="#g3a" x="11" y="12"/></g></svg>
<svg class="a" style="left:815px;top:488px;" width="11" height="15" fill="#f4f4f4"><g><use href="#g32" x="2" y="12"/></g></svg>
<svg class="a" style="left:829px;top:488px;" width="13" height="15" fill="#f4f4f4"><g><use href="#g74" x="2" y="12"/><use href="#g3a" x="8" y="12"/></g></svg>
<svg class="a" style="left:843px;top:488px;" width="11" height="15" fill="#f4f4f4"><g><use href="#g30" x="2" y="12"/></g></svg>
<svg class="a" style="left:855px;top:491px" width="8" height="10"><path d="M0.8 9.5L7.2 0.5" stroke="#f4f4f4" stroke-width="1.1"/></svg>
<svg class="a" style="left:863px;top:488px;" width="11" height="15" fill="#f4f4f4"><g><use href="#g32" x="2" y="12"/></g></svg>
<svg class="a" style="left:888px;top:488px;" width="34" height="15" fill="#f4f4f4"><g><use href="#g31" x="2" y="12"/><use href="#g35" x="9" y="12"/><use href="#g2e" x="14" y="12"/><use href="#g39" x="19" y="12"/><use href="#g4b" x="25" y="12"/></g></svg>
<svg class="a" style="left:788px;top:500px;" width="13" height="15" fill="#f4f4f4"><g><use href="#g44" x="2" y="12"/></g></svg>
<svg class="a" style="left:802px;top:500px;" width="16" height="15" fill="#f4f4f4"><g><use href="#g73" x="2" y="12"/><use href="#g3a" x="11" y="12"/></g></svg>
<svg class="a" style="left:815px;top:500px;" width="12" height="15" fill="#f4f4f4"><g><use href="#g34" x="2" y="12"/></g></svg>
<svg class="a" style="left:829px;top:500px;" width="13" height="15" fill="#f4f4f4"><g><use href="#g74" x="2" y="12"/><use href="#g3a" x="8" y="12"/></g></svg>
<svg class="a" style="left:843px;top:500px;" width="11" height="15" fill="#f4f4f4"><g><use href="#g32" x="2" y="12"/></g></svg>
<svg class="a" style="left:855px;top:503px" width="8" height="10"><path d="M0.8 9.5L7.2 0.5" stroke="#f4f4f4" stroke-width="1.1"/></svg>
<svg class="a" style="left:863px;top:500px;" width="11" height="15" fill="#f4f4f4"><g><use href="#g32" x="2" y="12"/></g></svg>
<svg class="a" style="left:888px;top:500px;" width="34" height="15" fill="#f4f4f4"><g><use href="#g31" x="2" y="12"/><use href="#g39" x="9" y="12"/><use href="#g2e" x="14" y="12"/><use href="#g36" x="19" y="12"/><use href="#g4b" x="25" y="12"/></g></svg>
<div class="a" style="left:936px;top:492px;width:77px;height:19px;background:#e0dfe3;border:1px solid;border-color:#f1efe2 #716f64 #716f64 #f1efe2;box-shadow:inset 1px 1px 0 #ffffff,inset -1px -1px 0 #9d9da1;"></div>
<svg class="a" style="left:961px;top:495px;" width="30" height="15" fill="#008000"><g><use href="#g8a2d" x="2" y="12"/><use href="#g5b9a" x="15" y="12"/></g></svg>
<div class="a" style="left:4px;top:514px;width:1px;height:201px;background:#9d9da1"></div>
<div class="a" style="left:5px;top:515px;width:1012px;height:200px;background:#00002e"></div>
<div class="a" style="left:5px;top:515px;width:421px;height:16px;background:#e0dfe3;border-top:1px solid #ffffff;border-left:1px solid #ffffff;border-right:1px solid #716f64;border-bottom:1px solid #716f64;box-shadow:inset -1px -1px 0 #9d9da1"></div>
<svg class="a" style="left:8px;top:515px;" width="114" height="15" fill="#000"><g><use href="#g30ad" x="3" y="12"/><use href="#g30fc" x="15" y="12"/><use href="#g30ef" x="27" y="12"/><use href="#g30fc" x="39" y="12"/><use href="#g30c9" x="50" y="12"/><use href="#g28" x="61" y="12"/><use href="#g30cf" x="67" y="12"/><use href="#g30c3" x="78" y="12"/><use href="#g30b7" x="87" y="12"/><use href="#g30e5" x="98" y="12"/><use href="#g29" x="107" y="12"/></g></svg>
<div class="a" style="left:426px;top:515px;width:52px;height:16px;background:#e0dfe3;border-top:1px solid #ffffff;border-left:1px solid #ffffff;border-right:1px solid #716f64;border-bottom:1px solid #716f64;box-shadow:inset -1px -1px 0 #9d9da1"></div>
<svg class="a" style="left:428px;top:515px;" width="44" height="15" fill="#000"><g><use href="#g30c8" x="1" y="12"/><use href="#g30ea" x="10" y="12"/><use href="#g30c3" x="19" y="12"/><use href="#g30d7" x="30" y="12"/></g></svg>
<div class="a" style="left:478px;top:515px;width:100px;height:16px;background:#e0dfe3;border-top:1px solid #ffffff;border-left:1px solid #ffffff;border-right:1px solid #716f64;border-bottom:1px solid #716f64;box-shadow:inset -1px -1px 0 #9d9da1"></div>
<svg class="a" style="left:482px;top:515px;" width="89" height="15" fill="#000"><g><use href="#g30b5" x="2" y="12"/><use href="#g30a4" x="13" y="12"/><use href="#g30ba" x="23" y="12"/><use href="#g5236" x="36" y="12"/><use href="#g9650" x="49" y="12"/><use href="#g28" x="61" y="12"/><use href="#g4d" x="67" y="12"/><use href="#g42" x="76" y="12"/><use href="#g29" x="82" y="12"/></g></svg>
<div class="a" style="left:578px;top:515px;width:51px;height:16px;background:#e0dfe3;border-top:1px solid #ffffff;border-left:1px solid #ffffff;border-right:1px solid #716f64;border-bottom:1px solid #716f64;box-shadow:inset -1px -1px 0 #9d9da1"></div>
<svg class="a" style="left:579px;top:515px;" width="45" height="15" fill="#000"><g><use href="#g30d2" x="2" y="12"/><use href="#g30c3" x="12" y="12"/><use href="#g30c8" x="21" y="12"/><use href="#g6570" x="31" y="12"/></g></svg>
<div class="a" style="left:629px;top:515px;width:163px;height:16px;background:#e0dfe3;border-top:1px solid #ffffff;border-left:1px solid #ffffff;border-right:1px solid #716f64;border-bottom:1px solid #716f64;box-shadow:inset -1px -1px 0 #9d9da1"></div>
<svg class="a" style="left:632px;top:515px;" width="46" height="15" fill="#000"><g><use href="#g30ab" x="2" y="12"/><use href="#g30a6" x="13" y="12"/><use href="#g30f3" x="24" y="12"/><use href="#g30c8" x="34" y="12"/></g></svg>
<div class="a" style="left:792px;top:515px;width:111px;height:16px;background:#e0dfe3;border-top:1px solid #ffffff;border-left:1px solid #ffffff;border-right:1px solid #716f64;border-bottom:1px solid #716f64;box-shadow:inset -1px -1px 0 #9d9da1"></div>
<svg class="a" style="left:796px;top:515px;" width="54" height="15" fill="#000"><g><use href="#g9032" x="2" y="12"/><use href="#g884c" x="15" y="12"/><use href="#g72b6" x="27" y="12"/><use href="#g6cc1" x="39" y="12"/></g></svg>
<div class="a" style="left:903px;top:515px;width:56px;height:16px;background:#e0dfe3;border-top:1px solid #ffffff;border-left:1px solid #ffffff;border-right:1px solid #716f64;border-bottom:1px solid #716f64;box-shadow:inset -1px -1px 0 #9d9da1"></div>
<svg class="a" style="left:907px;top:515px;" width="51" height="15" fill="#000"><g><use href="#g6b8b" x="2" y="12"/><use href="#g308a" x="13" y="12"/><use href="#g6642" x="24" y="12"/><use href="#g9593" x="36" y="12"/></g></svg>
<div class="a" style="left:959px;top:515px;width:41px;height:16px;background:#e0dfe3;border-top:1px solid #ffffff;border-left:1px solid #ffffff;border-right:1px solid #716f64;border-bottom:1px solid #716f64;box-shadow:inset -1px -1px 0 #9d9da1"></div>
<svg class="a" style="left:964px;top:515px;" width="24" height="15" fill="#000"><g><use href="#g8ee2" x="2" y="12"/><use href="#g2e" x="13" y="12"/><use href="#g2e" x="15" y="12"/><use href="#g2e" x="17" y="12"/></g></svg>
<div class="a" style="left:1000px;top:515px;width:40px;height:16px;background:#e0dfe3;border-top:1px solid #ffffff;border-left:1px solid #ffffff;border-right:1px solid #716f64;border-bottom:1px solid #716f64;box-shadow:inset -1px -1px 0 #9d9da1"></div>
<svg class="a" style="left:13px;top:531px;" width="410" height="15" fill="#00ff00"><g><use href="#g28" x="1" y="12"/><use href="#g44" x="6" y="12"/><use href="#g56" x="14" y="12"/><use href="#g44" x="22" y="12"/><use href="#g49" x="30" y="12"/><use href="#g53" x="34" y="12"/><use href="#g4f" x="40" y="12"/><use href="#g29" x="47" y="12"/><use href="#g30ab" x="56" y="12"/><use href="#g30ec" x="66" y="12"/><use href="#g30a4" x="74" y="12"/><use href="#g30c9" x="82" y="12"/><use href="#g30b9" x="93" y="12"/><use href="#g30bf" x="105" y="12"/><use href="#g30fc" x="116" y="12"/><use href="#g4c" x="132" y="12"/><use href="#g65" x="138" y="12"/><use href="#g67" x="144" y="12"/><use href="#g65" x="150" y="12"/><use href="#g6e" x="156" y="12"/><use href="#g64" x="162" y="12"/><use href="#g6f" x="172" y="12"/><use href="#g66" x="178" y="12"/><use href="#g50" x="186" y="12"/><use href="#g68" x="192" y="12"/><use href="#g6f" x="198" y="12"/><use href="#g65" x="204" y="12"/><use href="#g6e" x="210" y="12"/><use href="#g69" x="216" y="12"/><use href="#g78" x="218" y="12"/><use href="#g301c" x="228" y="12"/><use href="#g30ec" x="240" y="12"/><use href="#g30a4" x="249" y="12"/><use href="#g30e9" x="259" y="12"/><use href="#g30fb" x="271" y="12"/><use href="#g30cf" x="274" y="12"/><use href="#g30df" x="285" y="12"/><use href="#g30eb" x="295" y="12"/><use href="#g30c8" x="306" y="12"/><use href="#g30f3" x="316" y="12"/><use href="#g7269" x="327" y="12"/><use href="#g8a9e" x="339" y="12"/><use href="#g301c" x="351" y="12"/><use href="#g2e" x="361" y="12"/><use href="#g70" x="365" y="12"/><use href="#g61" x="371" y="12"/><use href="#g72" x="377" y="12"/><use href="#g74" x="381" y="12"/><use href="#g31" x="385" y="12"/><use href="#g2e" x="389" y="12"/><use href="#g72" x="393" y="12"/><use href="#g61" x="397" y="12"/><use href="#g72" x="403" y="12"/></g></svg>
<svg class="a" style="left:549px;top:531px;" width="31" height="15" fill="#fff"><g><use href="#g30" x="2" y="12"/><use href="#g2d" x="12" y="12"/><use href="#g30" x="22" y="12"/></g></svg>
<svg class="a" style="left:619px;top:531px;" width="11" height="15" fill="#fff"><g><use href="#g30" x="2" y="12"/></g></svg>
<svg class="a" style="left:676px;top:531px;" width="118" height="15" fill="#ffffff"><g><use href="#g36" x="2" y="12"/><use href="#g35" x="7" y="12"/><use href="#g2c" x="10" y="12"/><use href="#g35" x="15" y="12"/><use href="#g33" x="21" y="12"/><use href="#g36" x="27" y="12"/><use href="#g2f" x="37" y="12"/><use href="#g31" x="46" y="12"/><use href="#g2c" x="50" y="12"/><use href="#g30" x="55" y="12"/><use href="#g30" x="61" y="12"/><use href="#g30" x="67" y="12"/><use href="#g2c" x="71" y="12"/><use href="#g30" x="76" y="12"/><use href="#g30" x="82" y="12"/><use href="#g30" x="88" y="12"/><use href="#g2c" x="92" y="12"/><use href="#g30" x="97" y="12"/><use href="#g30" x="103" y="12"/><use href="#g30" x="109" y="12"/></g></svg>
<svg class="a" style="left:795px;top:531px;" width="66" height="15" fill="#ffff00"><g><use href="#g30ad" x="3" y="12"/><use href="#g30fc" x="15" y="12"/><use href="#g63a2" x="28" y="12"/><use href="#g7d22" x="41" y="12"/><use href="#g4e2d" x="53" y="12"/></g></svg>
<svg class="a" style="left:13px;top:544px;" width="410" height="15" fill="#00ff00"><g><use href="#g28" x="1" y="12"/><use href="#g44" x="6" y="12"/><use href="#g56" x="14" y="12"/><use href="#g44" x="22" y="12"/><use href="#g49" x="30" y="12"/><use href="#g53" x="34" y="12"/><use href="#g4f" x="40" y="12"/><use href="#g29" x="47" y="12"/><use href="#g30ab" x="56" y="12"/><use href="#g30ec" x="66" y="12"/><use href="#g30a4" x="74" y="12"/><use href="#g30c9" x="82" y="12"/><use href="#g30b9" x="93" y="12"/><use href="#g30bf" x="105" y="12"/><use href="#g30fc" x="116" y="12"/><use href="#g4c" x="132" y="12"/><use href="#g65" x="138" y="12"/><use href="#g67" x="144" y="12"/><use href="#g65" x="150" y="12"/><use href="#g6e" x="156" y="12"/><use href="#g64" x="162" y="12"/><use href="#g6f" x="172" y="12"/><use href="#g66" x="178" y="12"/><use href="#g50" x="186" y="12"/><use href="#g68" x="192" y="12"/><use href="#g6f" x="198" y="12"/><use href="#g65" x="204" y="12"/><use href="#g6e" x="210" y="12"/><use href="#g69" x="216" y="12"/><use href="#g78" x="218" y="12"/><use href="#g301c" x="228" y="12"/><use href="#g30ec" x="240" y="12"/><use href="#g30a4" x="249" y="12"/><use href="#g30e9" x="259" y="12"/><use href="#g30fb" x="271" y="12"/><use href="#g30cf" x="274" y="12"/><use href="#g30df" x="285" y="12"/><use href="#g30eb" x="295" y="12"/><use href="#g30c8" x="306" y="12"/><use href="#g30f3" x="316" y="12"/><use href="#g7269" x="327" y="12"/><use href="#g8a9e" x="339" y="12"/><use href="#g301c" x="351" y="12"/><use href="#g2e" x="361" y="12"/><use href="#g70" x="365" y="12"/><use href="#g61" x="371" y="12"/><use href="#g72" x="377" y="12"/><use href="#g74" x="381" y="12"/><use href="#g32" x="385" y="12"/><use href="#g2e" x="389" y="12"/><use href="#g72" x="393" y="12"/><use href="#g61" x="397" y="12"/><use href="#g72" x="403" y="12"/></g></svg>
<svg class="a" style="left:549px;top:544px;" width="31" height="15" fill="#fff"><g><use href="#g30" x="2" y="12"/><use href="#g2d" x="12" y="12"/><use href="#g30" x="22" y="12"/></g></svg>
<svg class="a" style="left:619px;top:544px;" width="11" height="15" fill="#fff"><g><use href="#g30" x="2" y="12"/></g></svg>
<svg class="a" style="left:670px;top:544px;" width="124" height="15" fill="#ffffff"><g><use href="#g39" x="2" y="12"/><use href="#g38" x="7" y="12"/><use href="#g33" x="12" y="12"/><use href="#g2c" x="15" y="12"/><use href="#g30" x="20" y="12"/><use href="#g34" x="26" y="12"/><use href="#g30" x="33" y="12"/><use href="#g2f" x="43" y="12"/><use href="#g31" x="52" y="12"/><use href="#g2c" x="56" y="12"/><use href="#g30" x="61" y="12"/><use href="#g30" x="67" y="12"/><use href="#g30" x="73" y="12"/><use href="#g2c" x="77" y="12"/><use href="#g30" x="82" y="12"/><use href="#g30" x="88" y="12"/><use href="#g30" x="94" y="12"/><use href="#g2c" x="98" y="12"/><use href="#g30" x="103" y="12"/><use href="#g30" x="109" y="12"/><use href="#g30" x="115" y="12"/></g></svg>
<svg class="a" style="left:795px;top:544px;" width="66" height="15" fill="#ffff00"><g><use href="#g30ad" x="3" y="12"/><use href="#g30fc" x="15" y="12"/><use href="#g63a2" x="28" y="12"/><use href="#g7d22" x="41" y="12"/><use href="#g4e2d" x="53" y="12"/></g></svg>
<svg class="a" style="left:13px;top:557px;" width="410" height="15" fill="#00ff00"><g><use href="#g28" x="1" y="12"/><use href="#g44" x="6" y="12"/><use href="#g56" x="14" y="12"/><use href="#g44" x="22" y="12"/><use href="#g49" x="30" y="12"/><use href="#g53" x="34" y="12"/><use href="#g4f" x="40" y="12"/><use href="#g29" x="47" y="12"/><use href="#g30ab" x="56" y="12"/><use href="#g30ec" x="66" y="12"/><use href="#g30a4" x="74" y="12"/><use href="#g30c9" x="82" y="12"/><use href="#g30b9" x="93" y="12"/><use href="#g30bf" x="105" y="12"/><use href="#g30fc" x="116" y="12"/><use href="#g4c" x="132" y="12"/><use href="#g65" x="138" y="12"/><use href="#g67" x="144" y="12"/><use href="#g65" x="150" y="12"/><use href="#g6e" x="156" y="12"/><use href="#g64" x="162" y="12"/><use href="#g6f" x="172" y="12"/><use href="#g66" x="178" y="12"/><use href="#g50" x="186" y="12"/><use href="#g68" x="192" y="12"/><use href="#g6f" x="198" y="12"/><use href="#g65" x="204" y="12"/><use href="#g6e" x="210" y="12"/><use href="#g69" x="216" y="12"/><use href="#g78" x="218" y="12"/><use href="#g301c" x="228" y="12"/><use href="#g30ec" x="240" y="12"/><use href="#g30a4" x="249" y="12"/><use href="#g30e9" x="259" y="12"/><use href="#g30fb" x="271" y="12"/><use href="#g30cf" x="274" y="12"/><use href="#g30df" x="285" y="12"/><use href="#g30eb" x="295" y="12"/><use href="#g30c8" x="306" y="12"/><use href="#g30f3" x="316" y="12"/><use href="#g7269" x="327" y="12"/><use href="#g8a9e" x="339" y="12"/><use href="#g301c" x="351" y="12"/><use href="#g2e" x="361" y="12"/><use href="#g70" x="365" y="12"/><use href="#g61" x="371" y="12"/><use href="#g72" x="377" y="12"/><use href="#g74" x="381" y="12"/><use href="#g33" x="385" y="12"/><use href="#g2e" x="389" y="12"/><use href="#g72" x="393" y="12"/><use href="#g61" x="397" y="12"/><use href="#g72" x="403" y="12"/></g></svg>
<svg class="a" style="left:549px;top:557px;" width="31" height="15" fill="#fff"><g><use href="#g30" x="2" y="12"/><use href="#g2d" x="12" y="12"/><use href="#g30" x="22" y="12"/></g></svg>
<svg class="a" style="left:619px;top:557px;" width="11" height="15" fill="#fff"><g><use href="#g30" x="2" y="12"/></g></svg>
<svg class="a" style="left:795px;top:557px;" width="66" height="15" fill="#ffff00"><g><use href="#g30ad" x="3" y="12"/><use href="#g30fc" x="15" y="12"/><use href="#g63a2" x="28" y="12"/><use href="#g7d22" x="41" y="12"/><use href="#g4e2d" x="53" y="12"/></g></svg>
<svg class="a" style="left:13px;top:570px;" width="410" height="15" fill="#00ff00"><g><use href="#g28" x="1" y="12"/><use href="#g44" x="6" y="12"/><use href="#g56" x="14" y="12"/><use href="#g44" x="22" y="12"/><use href="#g49" x="30" y="12"/><use href="#g53" x="34" y="12"/><use href="#g4f" x="40" y="12"/><use href="#g29" x="47" y="12"/><use href="#g30ab" x="56" y="12"/><use href="#g30ec" x="66" y="12"/><use href="#g30a4" x="74" y="12"/><use href="#g30c9" x="82" y="12"/><use href="#g30b9" x="92" y="12"/><use href="#g30bf" x="104" y="12"/><use href="#g30fc" x="115" y="12"/><use href="#g4c" x="131" y="12"/><use href="#g65" x="137" y="12"/><use href="#g67" x="143" y="12"/><use href="#g65" x="149" y="12"/><use href="#g6e" x="155" y="12"/><use href="#g64" x="161" y="12"/><use href="#g6f" x="171" y="12"/><use href="#g66" x="177" y="12"/><use href="#g50" x="185" y="12"/><use href="#g68" x="191" y="12"/><use href="#g6f" x="197" y="12"/><use href="#g65" x="203" y="12"/><use href="#g6e" x="209" y="12"/><use href="#g69" x="215" y="12"/><use href="#g78" x="217" y="12"/><use href="#g301c" x="227" y="12"/><use href="#g30ec" x="239" y="12"/><use href="#g30a4" x="248" y="12"/><use href="#g30e9" x="258" y="12"/><use href="#g30fb" x="270" y="12"/><use href="#g30cf" x="273" y="12"/><use href="#g30df" x="284" y="12"/><use href="#g30eb" x="294" y="12"/><use href="#g30c8" x="305" y="12"/><use href="#g30f3" x="315" y="12"/><use href="#g7269" x="326" y="12"/><use href="#g8a9e" x="338" y="12"/><use href="#g301c" x="350" y="12"/><use href="#g2e" x="360" y="12"/><use href="#g70" x="364" y="12"/><use href="#g61" x="370" y="12"/><use href="#g72" x="376" y="12"/><use href="#g74" x="380" y="12"/><use href="#g34" x="384" y="12"/><use href="#g2e" x="389" y="12"/><use href="#g72" x="393" y="12"/><use href="#g61" x="397" y="12"/><use href="#g72" x="403" y="12"/></g></svg>
<svg class="a" style="left:549px;top:570px;" width="31" height="15" fill="#fff"><g><use href="#g30" x="2" y="12"/><use href="#g2d" x="12" y="12"/><use href="#g30" x="22" y="12"/></g></svg>
<svg class="a" style="left:619px;top:570px;" width="11" height="15" fill="#fff"><g><use href="#g30" x="2" y="12"/></g></svg>
<svg class="a" style="left:662px;top:570px;" width="132" height="15" fill="#ffffff"><g><use href="#g31" x="2" y="12"/><use href="#g2c" x="5" y="12"/><use href="#g39" x="9" y="12"/><use href="#g36" x="14" y="12"/><use href="#g36" x="20" y="12"/><use href="#g2c" x="24" y="12"/><use href="#g30" x="29" y="12"/><use href="#g38" x="35" y="12"/><use href="#g30" x="41" y="12"/><use href="#g2f" x="51" y="12"/><use href="#g31" x="60" y="12"/><use href="#g2c" x="64" y="12"/><use href="#g30" x="69" y="12"/><use href="#g30" x="75" y="12"/><use href="#g30" x="81" y="12"/><use href="#g2c" x="85" y="12"/><use href="#g30" x="90" y="12"/><use href="#g30" x="96" y="12"/><use href="#g30" x="102" y="12"/><use href="#g2c" x="106" y="12"/><use href="#g30" x="111" y="12"/><use href="#g30" x="117" y="12"/><use href="#g30" x="123" y="12"/></g></svg>
<div class="a" style="left:798px;top:572px;width:103px;height:11px;background:#8080ff"></div>
<svg class="a" style="left:841px;top:570px;" width="19" height="15" fill="#00ff00"><g><use href="#g30" x="2" y="12"/><use href="#g25" x="9" y="12"/></g></svg>
<svg class="a" style="left:915px;top:571px;" width="47" height="15" fill="#ffffff"><g><use href="#g38" x="2" y="12"/><use href="#g34" x="9" y="12"/><use href="#g3a" x="16" y="12"/><use href="#g33" x="18" y="12"/><use href="#g35" x="24" y="12"/><use href="#g3a" x="30" y="12"/><use href="#g30" x="32" y="12"/><use href="#g31" x="38" y="12"/></g></svg>
<svg class="a" style="left:983px;top:571px;" width="19" height="15" fill="#fff"><g><use href="#g33" x="2" y="12"/><use href="#g2e" x="6" y="12"/><use href="#g33" x="10" y="12"/></g></svg>
<svg class="a" style="left:13px;top:583px;" width="410" height="15" fill="#00ff00"><g><use href="#g28" x="1" y="12"/><use href="#g44" x="6" y="12"/><use href="#g56" x="14" y="12"/><use href="#g44" x="22" y="12"/><use href="#g49" x="30" y="12"/><use href="#g53" x="34" y="12"/><use href="#g4f" x="40" y="12"/><use href="#g29" x="47" y="12"/><use href="#g30ab" x="56" y="12"/><use href="#g30ec" x="66" y="12"/><use href="#g30a4" x="74" y="12"/><use href="#g30c9" x="82" y="12"/><use href="#g30b9" x="93" y="12"/><use href="#g30bf" x="105" y="12"/><use href="#g30fc" x="116" y="12"/><use href="#g4c" x="132" y="12"/><use href="#g65" x="138" y="12"/><use href="#g67" x="144" y="12"/><use href="#g65" x="150" y="12"/><use href="#g6e" x="156" y="12"/><use href="#g64" x="162" y="12"/><use href="#g6f" x="172" y="12"/><use href="#g66" x="178" y="12"/><use href="#g50" x="186" y="12"/><use href="#g68" x="192" y="12"/><use href="#g6f" x="198" y="12"/><use href="#g65" x="204" y="12"/><use href="#g6e" x="210" y="12"/><use href="#g69" x="216" y="12"/><use href="#g78" x="218" y="12"/><use href="#g301c" x="228" y="12"/><use href="#g30ec" x="240" y="12"/><use href="#g30a4" x="249" y="12"/><use href="#g30e9" x="259" y="12"/><use href="#g30fb" x="271" y="12"/><use href="#g30cf" x="274" y="12"/><use href="#g30df" x="285" y="12"/><use href="#g30eb" x="295" y="12"/><use href="#g30c8" x="306" y="12"/><use href="#g30f3" x="316" y="12"/><use href="#g7269" x="327" y="12"/><use href="#g8a9e" x="339" y="12"/><use href="#g301c" x="351" y="12"/><use href="#g2e" x="361" y="12"/><use href="#g70" x="365" y="12"/><use href="#g61" x="371" y="12"/><use href="#g72" x="377" y="12"/><use href="#g74" x="381" y="12"/><use href="#g35" x="385" y="12"/><use href="#g2e" x="389" y="12"/><use href="#g72" x="393" y="12"/><use href="#g61" x="397" y="12"/><use href="#g72" x="403" y="12"/></g></svg>
<svg class="a" style="left:549px;top:583px;" width="31" height="15" fill="#fff"><g><use href="#g30" x="2" y="12"/><use href="#g2d" x="12" y="12"/><use href="#g30" x="22" y="12"/></g></svg>
<svg class="a" style="left:619px;top:583px;" width="11" height="15" fill="#fff"><g><use href="#g30" x="2" y="12"/></g></svg>
<svg class="a" style="left:670px;top:583px;" width="124" height="15" fill="#ffffff"><g><use href="#g39" x="2" y="12"/><use href="#g31" x="7" y="12"/><use href="#g37" x="12" y="12"/><use href="#g2c" x="15" y="12"/><use href="#g35" x="20" y="12"/><use href="#g30" x="26" y="12"/><use href="#g34" x="32" y="12"/><use href="#g2f" x="43" y="12"/><use href="#g31" x="52" y="12"/><use href="#g2c" x="56" y="12"/><use href="#g30" x="61" y="12"/><use href="#g30" x="67" y="12"/><use href="#g30" x="73" y="12"/><use href="#g2c" x="77" y="12"/><use href="#g30" x="82" y="12"/><use href="#g30" x="88" y="12"/><use href="#g30" x="94" y="12"/><use href="#g2c" x="98" y="12"/><use href="#g30" x="103" y="12"/><use href="#g30" x="109" y="12"/><use href="#g30" x="115" y="12"/></g></svg>
<svg class="a" style="left:795px;top:583px;" width="66" height="15" fill="#ffff00"><g><use href="#g30ad" x="3" y="12"/><use href="#g30fc" x="15" y="12"/><use href="#g63a2" x="28" y="12"/><use href="#g7d22" x="41" y="12"/><use href="#g4e2d" x="53" y="12"/></g></svg>
<svg class="a" style="left:13px;top:596px;" width="410" height="15" fill="#00ff00"><g><use href="#g28" x="1" y="12"/><use href="#g44" x="6" y="12"/><use href="#g56" x="14" y="12"/><use href="#g44" x="22" y="12"/><use href="#g49" x="30" y="12"/><use href="#g53" x="34" y="12"/><use href="#g4f" x="40" y="12"/><use href="#g29" x="47" y="12"/><use href="#g30ab" x="56" y="12"/><use href="#g30ec" x="66" y="12"/><use href="#g30a4" x="74" y="12"/><use href="#g30c9" x="82" y="12"/><use href="#g30b9" x="93" y="12"/><use href="#g30bf" x="105" y="12"/><use href="#g30fc" x="116" y="12"/><use href="#g4c" x="132" y="12"/><use href="#g65" x="138" y="12"/><use href="#g67" x="144" y="12"/><use href="#g65" x="150" y="12"/><use href="#g6e" x="156" y="12"/><use href="#g64" x="162" y="12"/><use href="#g6f" x="172" y="12"/><use href="#g66" x="178" y="12"/><use href="#g50" x="186" y="12"/><use href="#g68" x="192" y="12"/><use href="#g6f" x="198" y="12"/><use href="#g65" x="204" y="12"/><use href="#g6e" x="210" y="12"/><use href="#g69" x="216" y="12"/><use href="#g78" x="218" y="12"/><use href="#g301c" x="228" y="12"/><use href="#g30ec" x="240" y="12"/><use href="#g30a4" x="249" y="12"/><use href="#g30e9" x="259" y="12"/><use href="#g30fb" x="271" y="12"/><use href="#g30cf" x="274" y="12"/><use href="#g30df" x="285" y="12"/><use href="#g30eb" x="295" y="12"/><use href="#g30c8" x="306" y="12"/><use href="#g30f3" x="316" y="12"/><use href="#g7269" x="327" y="12"/><use href="#g8a9e" x="339" y="12"/><use href="#g301c" x="351" y="12"/><use href="#g2e" x="361" y="12"/><use href="#g70" x="365" y="12"/><use href="#g61" x="371" y="12"/><use href="#g72" x="377" y="12"/><use href="#g74" x="381" y="12"/><use href="#g36" x="385" y="12"/><use href="#g2e" x="389" y="12"/><use href="#g72" x="393" y="12"/><use href="#g61" x="397" y="12"/><use href="#g72" x="403" y="12"/></g></svg>
<svg class="a" style="left:549px;top:596px;" width="31" height="15" fill="#fff"><g><use href="#g30" x="2" y="12"/><use href="#g2d" x="12" y="12"/><use href="#g30" x="22" y="12"/></g></svg>
<svg class="a" style="left:619px;top:596px;" width="11" height="15" fill="#fff"><g><use href="#g30" x="2" y="12"/></g></svg>
<svg class="a" style="left:795px;top:596px;" width="66" height="15" fill="#ffff00"><g><use href="#g30ad" x="3" y="12"/><use href="#g30fc" x="15" y="12"/><use href="#g63a2" x="28" y="12"/><use href="#g7d22" x="41" y="12"/><use href="#g4e2d" x="53" y="12"/></g></svg>
<svg class="a" style="left:13px;top:609px;" width="410" height="15" fill="#00ff00"><g><use href="#g28" x="1" y="12"/><use href="#g44" x="6" y="12"/><use href="#g56" x="14" y="12"/><use href="#g44" x="22" y="12"/><use href="#g49" x="30" y="12"/><use href="#g53" x="34" y="12"/><use href="#g4f" x="40" y="12"/><use href="#g29" x="47" y="12"/><use href="#g30ab" x="56" y="12"/><use href="#g30ec" x="66" y="12"/><use href="#g30a4" x="74" y="12"/><use href="#g30c9" x="82" y="12"/><use href="#g30b9" x="93" y="12"/><use href="#g30bf" x="105" y="12"/><use href="#g30fc" x="116" y="12"/><use href="#g4c" x="132" y="12"/><use href="#g65" x="138" y="12"/><use href="#g67" x="144" y="12"/><use href="#g65" x="150" y="12"/><use href="#g6e" x="156" y="12"/><use href="#g64" x="162" y="12"/><use href="#g6f" x="172" y="12"/><use href="#g66" x="178" y="12"/><use href="#g50" x="186" y="12"/><use href="#g68" x="192" y="12"/><use href="#g6f" x="198" y="12"/><use href="#g65" x="204" y="12"/><use href="#g6e" x="210" y="12"/><use href="#g69" x="216" y="12"/><use href="#g78" x="218" y="12"/><use href="#g301c" x="228" y="12"/><use href="#g30ec" x="240" y="12"/><use href="#g30a4" x="249" y="12"/><use href="#g30e9" x="259" y="12"/><use href="#g30fb" x="271" y="12"/><use href="#g30cf" x="274" y="12"/><use href="#g30df" x="285" y="12"/><use href="#g30eb" x="295" y="12"/><use href="#g30c8" x="306" y="12"/><use href="#g30f3" x="316" y="12"/><use href="#g7269" x="327" y="12"/><use href="#g8a9e" x="339" y="12"/><use href="#g301c" x="351" y="12"/><use href="#g2e" x="361" y="12"/><use href="#g70" x="365" y="12"/><use href="#g61" x="371" y="12"/><use href="#g72" x="377" y="12"/><use href="#g74" x="381" y="12"/><use href="#g37" x="385" y="12"/><use href="#g2e" x="389" y="12"/><use href="#g72" x="393" y="12"/><use href="#g61" x="397" y="12"/><use href="#g72" x="403" y="12"/></g></svg>
<svg class="a" style="left:549px;top:609px;" width="31" height="15" fill="#fff"><g><use href="#g30" x="2" y="12"/><use href="#g2d" x="12" y="12"/><use href="#g30" x="22" y="12"/></g></svg>
<svg class="a" style="left:619px;top:609px;" width="11" height="15" fill="#fff"><g><use href="#g30" x="2" y="12"/></g></svg>
<svg class="a" style="left:702px;top:609px;" width="92" height="15" fill="#ffffff"><g><use href="#g30" x="2" y="12"/><use href="#g2f" x="11" y="12"/><use href="#g31" x="20" y="12"/><use href="#g2c" x="24" y="12"/><use href="#g30" x="29" y="12"/><use href="#g30" x="35" y="12"/><use href="#g30" x="41" y="12"/><use href="#g2c" x="45" y="12"/><use href="#g30" x="50" y="12"/><use href="#g30" x="56" y="12"/><use href="#g30" x="62" y="12"/><use href="#g2c" x="66" y="12"/><use href="#g30" x="71" y="12"/><use href="#g30" x="77" y="12"/><use href="#g30" x="83" y="12"/></g></svg>
<svg class="a" style="left:795px;top:609px;" width="66" height="15" fill="#ffff00"><g><use href="#g30ad" x="3" y="12"/><use href="#g30fc" x="15" y="12"/><use href="#g63a2" x="28" y="12"/><use href="#g7d22" x="41" y="12"/><use href="#g4e2d" x="53" y="12"/></g></svg>
<svg class="a" style="left:13px;top:622px;" width="410" height="15" fill="#00ff00"><g><use href="#g28" x="1" y="12"/><use href="#g44" x="6" y="12"/><use href="#g56" x="14" y="12"/><use href="#g44" x="22" y="12"/><use href="#g49" x="30" y="12"/><use href="#g53" x="34" y="12"/><use href="#g4f" x="40" y="12"/><use href="#g29" x="47" y="12"/><use href="#g30ab" x="56" y="12"/><use href="#g30ec" x="66" y="12"/><use href="#g30a4" x="74" y="12"/><use href="#g30c9" x="82" y="12"/><use href="#g30b9" x="93" y="12"/><use href="#g30bf" x="105" y="12"/><use href="#g30fc" x="116" y="12"/><use href="#g4c" x="132" y="12"/><use href="#g65" x="138" y="12"/><use href="#g67" x="144" y="12"/><use href="#g65" x="150" y="12"/><use href="#g6e" x="156" y="12"/><use href="#g64" x="162" y="12"/><use href="#g6f" x="172" y="12"/><use href="#g66" x="178" y="12"/><use href="#g50" x="186" y="12"/><use href="#g68" x="192" y="12"/><use href="#g6f" x="198" y="12"/><use href="#g65" x="204" y="12"/><use href="#g6e" x="210" y="12"/><use href="#g69" x="216" y="12"/><use href="#g78" x="218" y="12"/><use href="#g301c" x="228" y="12"/><use href="#g30ec" x="240" y="12"/><use href="#g30a4" x="249" y="12"/><use href="#g30e9" x="259" y="12"/><use href="#g30fb" x="271" y="12"/><use href="#g30cf" x="274" y="12"/><use href="#g30df" x="285" y="12"/><use href="#g30eb" x="295" y="12"/><use href="#g30c8" x="306" y="12"/><use href="#g30f3" x="316" y="12"/><use href="#g7269" x="327" y="12"/><use href="#g8a9e" x="339" y="12"/><use href="#g301c" x="351" y="12"/><use href="#g2e" x="361" y="12"/><use href="#g70" x="365" y="12"/><use href="#g61" x="371" y="12"/><use href="#g72" x="377" y="12"/><use href="#g74" x="381" y="12"/><use href="#g38" x="385" y="12"/><use href="#g2e" x="389" y="12"/><use href="#g72" x="393" y="12"/><use href="#g61" x="397" y="12"/><use href="#g72" x="403" y="12"/></g></svg>
<svg class="a" style="left:549px;top:622px;" width="31" height="15" fill="#fff"><g><use href="#g30" x="2" y="12"/><use href="#g2d" x="12" y="12"/><use href="#g30" x="22" y="12"/></g></svg>
<svg class="a" style="left:619px;top:622px;" width="11" height="15" fill="#fff"><g><use href="#g30" x="2" y="12"/></g></svg>
<svg class="a" style="left:670px;top:622px;" width="124" height="15" fill="#ffffff"><g><use href="#g34" x="2" y="12"/><use href="#g2c" x="6" y="12"/><use href="#g32" x="10" y="12"/><use href="#g35" x="15" y="12"/><use href="#g39" x="20" y="12"/><use href="#g2c" x="23" y="12"/><use href="#g38" x="27" y="12"/><use href="#g34" x="32" y="12"/><use href="#g30" x="39" y="12"/><use href="#g2f" x="49" y="12"/><use href="#g34" x="58" y="12"/><use href="#g36" x="65" y="12"/><use href="#g34" x="71" y="12"/><use href="#g2c" x="76" y="12"/><use href="#g34" x="81" y="12"/><use href="#g32" x="88" y="12"/><use href="#g37" x="94" y="12"/><use href="#g2c" x="98" y="12"/><use href="#g35" x="103" y="12"/><use href="#g36" x="109" y="12"/><use href="#g38" x="115" y="12"/></g></svg>
<div class="a" style="left:798px;top:624px;width:103px;height:11px;background:#8080ff"></div>
<svg class="a" style="left:841px;top:622px;" width="19" height="15" fill="#00ff00"><g><use href="#g30" x="2" y="12"/><use href="#g25" x="9" y="12"/></g></svg>
<svg class="a" style="left:915px;top:623px;" width="47" height="15" fill="#ffffff"><g><use href="#g31" x="2" y="12"/><use href="#g32" x="9" y="12"/><use href="#g3a" x="16" y="12"/><use href="#g35" x="18" y="12"/><use href="#g39" x="24" y="12"/><use href="#g3a" x="30" y="12"/><use href="#g35" x="32" y="12"/><use href="#g39" x="38" y="12"/></g></svg>
<svg class="a" style="left:983px;top:623px;" width="19" height="15" fill="#fff"><g><use href="#g39" x="2" y="12"/><use href="#g2e" x="6" y="12"/><use href="#g38" x="10" y="12"/></g></svg>
<div class="a" style="left:7px;top:628px;width:4px;height:4px;background:#ff0000"></div>
<div class="a" style="left:5px;top:715px;width:1012px;height:1px;background:#ffffff"></div>
<div class="a" style="left:5px;top:718px;width:249px;height:15px;border:1px solid;border-color:#9d9da1 #ffffff #ffffff #9d9da1"></div>
<div id="t2" class="t" style="left:65px;top:720px;color:#000;font-size:11px;">File Search Up 2 / Down 4</div>
<div class="a" style="left:256px;top:718px;width:247px;height:15px;border:1px solid;border-color:#9d9da1 #ffffff #ffffff #9d9da1"></div>
<div id="t3" class="t" style="left:316px;top:720px;color:#000;font-size:11px;">Trans Up 0 / 2&nbsp; Down 2 / 2</div>
<div class="a" style="left:505px;top:718px;width:512px;height:15px;border:1px solid;border-color:#9d9da1 #ffffff #ffffff #9d9da1"></div>
<div id="t4" class="t" style="left:665px;top:720px;color:#000;font-size:11px;">Total Up&nbsp;&nbsp;&nbsp; 15.9 / Down&nbsp;&nbsp;&nbsp; 19.6 Kbyte/s</div>
<svg class="a" style="left:1007px;top:722px" width="10" height="11"><path d="M9.5 1.5L1.5 9.5M9.5 4.5L4.5 9.5M9.5 7.5L7.5 9.5" stroke="#9a9a9e" stroke-width="1.3"/><path d="M9.5 2.5L2.5 9.5M9.5 5.5L5.5 9.5M9.5 8.5L8.5 9.5" stroke="#fff" stroke-width="0.7"/></svg>
<div class="a" style="left:1017px;top:30px;width:1px;height:703px;background:#ffffff"></div>
<div class="a" style="left:1018px;top:30px;width:1px;height:703px;background:#70708a"></div>
<div class="a" style="left:1019px;top:30px;width:1px;height:703px;background:#b0b0c8"></div>
<div class="a" style="left:1020px;top:30px;width:1px;height:703px;background:#f8f8ff"></div>
<div class="a" style="left:1021px;top:30px;width:1px;height:703px;background:#686880"></div>
<script>(function(){var T=[["t1",97],["t2",123],["t3",126],["t4",190]];function fit(){for(var i=0;i<T.length;i++){var e=document.getElementById(T[i][0]);if(!e)continue;e.style.transform="none";var r=document.createRange();r.selectNodeContents(e);var a=r.getBoundingClientRect().width;if(a>0){e.style.transform="scaleX("+((T[i][1]+2.5)/a).toFixed(4)+")";}}}fit();if(document.fonts&&document.fonts.ready){document.fonts.ready.then(fit);}})();</script>
</body></html>
